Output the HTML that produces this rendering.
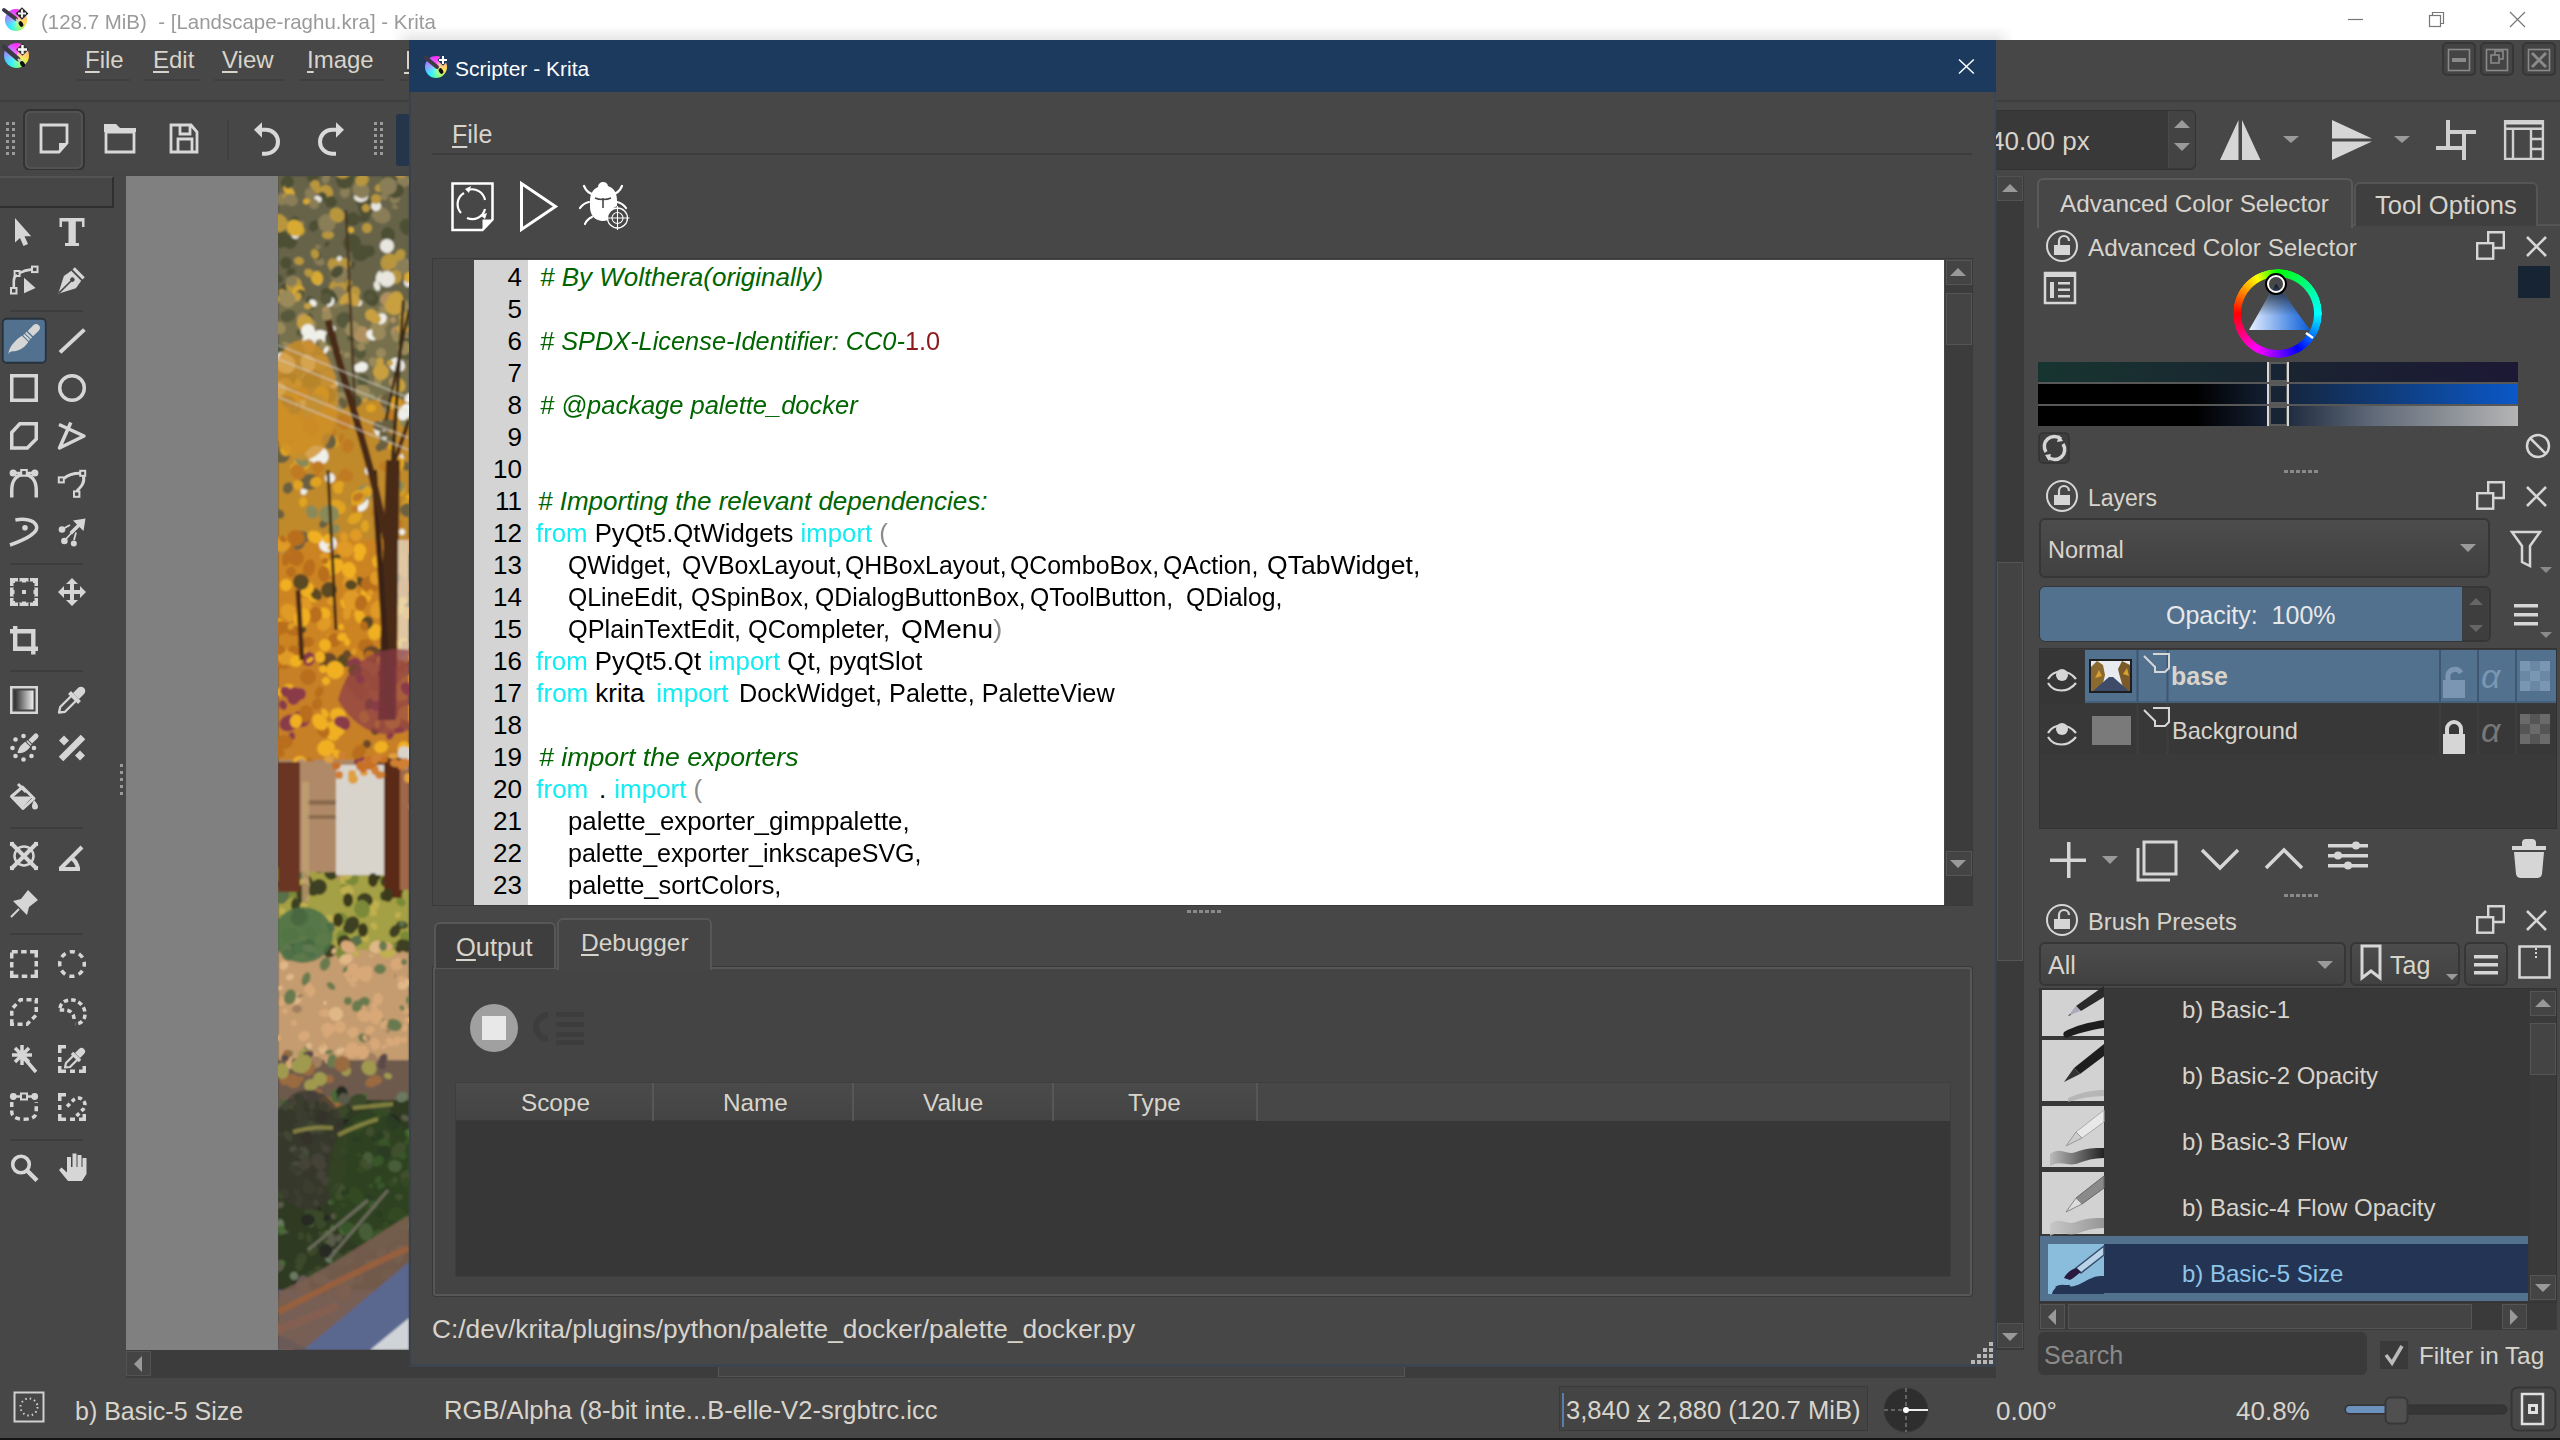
<!DOCTYPE html>
<html><head><meta charset="utf-8">
<style>
*{box-sizing:border-box;margin:0;padding:0}
html,body{width:2560px;height:1440px;overflow:hidden}
body{background:#474747;font-family:"Liberation Sans",sans-serif;color:#d8d4cc;position:relative}
.a{position:absolute}
.t{position:absolute;white-space:pre;line-height:1}
svg{position:absolute;overflow:visible}
.u{text-decoration:underline;text-underline-offset:3px;text-decoration-thickness:2px}
.ic{fill:none;stroke:#d6d6d6;stroke-width:3}
.if{fill:#d6d6d6}
</style></head><body>

<!-- ============ TITLE BAR ============ -->
<div class="a" style="left:0;top:0;width:2560px;height:40px;background:#fff"></div>
<svg style="left:0;top:0" width="40" height="40"><defs><linearGradient id="kg" x1="0" y1="0" x2="1" y2="1"><stop offset="0" stop-color="#ff3cf0"/><stop offset=".45" stop-color="#6a8cff"/><stop offset=".7" stop-color="#30e0ff"/><stop offset="1" stop-color="#ffe040"/></linearGradient></defs></svg>
<div class="a" style="left:5px;top:9px;width:22px;height:22px;border-radius:50%;background:radial-gradient(circle,rgba(255,255,255,.35),rgba(255,255,255,0) 70%),conic-gradient(from 0deg,#ff20ff,#ffa0a0 50deg,#ffe040 110deg,#80ff80 165deg,#20f0ff 215deg,#8a90ff 280deg,#ff20ff 360deg)"></div>
<svg style="left:0;top:0" width="40" height="40"><path d="M4 10L16 19" stroke="#3a3a44" stroke-width="4" stroke-linecap="round"/><path d="M16 19L19 22" stroke="#ccc" stroke-width="2"/><ellipse cx="21" cy="24" rx="2" ry="3" fill="#111" transform="rotate(-30 21 24)"/><rect x="17.5" y="9" width="9" height="9" fill="#2a2a2a" transform="rotate(45 22 13.5)"/><path d="M22 9.5v8M18 13.5h8" stroke="#eee" stroke-width="2"/></svg>
<div class="t" style="left:41px;top:11px;font-size:21px;color:#9a9a9a;transform:scaleX(.975);transform-origin:0 0">(128.7 MiB)  - [Landscape-raghu.kra] - Krita</div>
<svg style="left:2340px;top:8px" width="200" height="26">
 <path d="M8 11.5h15" stroke="#777" stroke-width="1.2"/>
 <rect x="89.5" y="7.5" width="11" height="11" fill="none" stroke="#777" stroke-width="1.2"/>
 <path d="M92.5 7.5v-3h11v11h-3" fill="none" stroke="#777" stroke-width="1.2"/>
 <path d="M170 4l15 15M185 4l-15 15" stroke="#777" stroke-width="1.2"/>
</svg>

<div class="a" style="left:392px;top:26px;width:1622px;height:14px;background:linear-gradient(rgba(0,0,0,0),rgba(0,0,0,.09));-webkit-mask:linear-gradient(90deg,transparent,#000 18px,#000 calc(100% - 18px),transparent);mask:linear-gradient(90deg,transparent,#000 18px,#000 calc(100% - 18px),transparent)"></div>
<!-- ============ MENU BAR ============ -->
<div class="a" style="left:0;top:40px;width:2560px;height:62px;background:#474747;border-bottom:2px solid #3e3e3e"></div>
<div class="a" style="left:4px;top:43px;width:25px;height:25px;border-radius:50%;background:radial-gradient(circle,rgba(255,255,255,.35),rgba(255,255,255,0) 70%),conic-gradient(from 0deg,#ff20ff,#ffa0a0 50deg,#ffe040 110deg,#80ff80 165deg,#20f0ff 215deg,#8a90ff 280deg,#ff20ff 360deg)"></div>
<svg style="left:0;top:40px" width="40" height="40"><path d="M4 7L18 19" stroke="#3a3a44" stroke-width="4.5" stroke-linecap="round"/><path d="M18 19L21 22" stroke="#ccc" stroke-width="2"/><ellipse cx="22.5" cy="24" rx="2.2" ry="3.2" fill="#111" transform="rotate(-30 22.5 24)"/><rect x="18" y="5" width="9" height="9" fill="#333" transform="rotate(45 22.5 9.5)"/><path d="M22.5 5v9M18 9.5h9" stroke="#fff" stroke-width="2.4"/></svg>
<div class="t" style="left:85px;top:48px;font-size:24px"><span class="u">F</span>ile</div>
<div class="t" style="left:153px;top:48px;font-size:24px"><span class="u">E</span>dit</div>
<div class="t" style="left:222px;top:48px;font-size:24px"><span class="u">V</span>iew</div>
<div class="t" style="left:307px;top:48px;font-size:24px"><span class="u">I</span>mage</div>
<div class="a" style="left:77px;top:79px;width:53px;height:2px;background:#3f3f3f"></div>
<div class="a" style="left:145px;top:79px;width:56px;height:2px;background:#3f3f3f"></div>
<div class="a" style="left:214px;top:79px;width:70px;height:2px;background:#3f3f3f"></div>
<div class="a" style="left:299px;top:79px;width:86px;height:2px;background:#3f3f3f"></div>
<div class="a" style="left:407px;top:51px;width:2px;height:18px;background:#d8d4cc"></div><div class="a" style="left:404px;top:72px;width:5px;height:2px;background:#d8d4cc"></div><div class="a" style="left:399px;top:79px;width:10px;height:2px;background:#3f3f3f"></div>
<!-- MDI buttons -->
<div class="a" style="left:2442px;top:42px;width:34px;height:34px;border:2px solid #363636;border-radius:5px;background:#444"></div>
<div class="a" style="left:2480px;top:42px;width:34px;height:34px;border:2px solid #363636;border-radius:5px;background:#444"></div>
<div class="a" style="left:2522px;top:42px;width:34px;height:34px;border:2px solid #363636;border-radius:5px;background:#444"></div>
<svg style="left:2440px;top:40px" width="120" height="40">
 <g fill="none" stroke="#8a8a8a" stroke-width="1.6">
  <rect x="8.5" y="9.5" width="21" height="21"/><rect x="46.5" y="9.5" width="21" height="21"/><rect x="88.5" y="9.5" width="21" height="21"/>
  <path d="M51 15h8v8h-8z M55 15v-4h8v8h-4"/>
  <path d="M92 13l14 14M106 13l-14 14" stroke-width="3"/>
 </g>
 <rect x="12" y="18" width="14" height="4" fill="#8a8a8a"/>
</svg>

<!-- ============ TOOLBAR ============ -->
<svg style="left:0;top:100px" width="420" height="76">
 <g fill="#9a9a9a">
  <rect x="6" y="22" width="3" height="3"/><rect x="12" y="22" width="3" height="3"/>
  <rect x="6" y="28" width="3" height="3"/><rect x="12" y="28" width="3" height="3"/>
  <rect x="6" y="34" width="3" height="3"/><rect x="12" y="34" width="3" height="3"/>
  <rect x="6" y="40" width="3" height="3"/><rect x="12" y="40" width="3" height="3"/>
  <rect x="6" y="46" width="3" height="3"/><rect x="12" y="46" width="3" height="3"/>
  <rect x="6" y="52" width="3" height="3"/><rect x="12" y="52" width="3" height="3"/>
  <rect x="374" y="22" width="3" height="3"/><rect x="380" y="22" width="3" height="3"/>
  <rect x="374" y="28" width="3" height="3"/><rect x="380" y="28" width="3" height="3"/>
  <rect x="374" y="34" width="3" height="3"/><rect x="380" y="34" width="3" height="3"/>
  <rect x="374" y="40" width="3" height="3"/><rect x="380" y="40" width="3" height="3"/>
  <rect x="374" y="46" width="3" height="3"/><rect x="380" y="46" width="3" height="3"/>
  <rect x="374" y="52" width="3" height="3"/><rect x="380" y="52" width="3" height="3"/>
 </g>
 <rect x="24" y="10" width="60" height="60" rx="6" fill="#484848" stroke="#333" stroke-width="2"/><rect x="26" y="12" width="56" height="56" rx="5" fill="none" stroke="#565656" stroke-width="1.5"/>
 <g fill="none" stroke="#d8d8d8" stroke-width="2.8">
  <path d="M41 25h26v18l-8 9h-18z"/>
  <path d="M106 32h28v20h-28z"/>
  <path d="M171 25h20l6 7v20h-26z M178 52v-13h14v13 M180 25v9h10v-9"/>
  <path d="M262 143"/>
 </g>
 <path d="M59 52l8-9h-8z" fill="#d8d8d8"/>
 <path d="M104 24h12l4 4h16v4h-32z" fill="#d8d8d8"/>
 <rect x="227" y="20" width="2" height="40" fill="#3f3f3f"/>
 <g fill="none" stroke="#d8d8d8" stroke-width="4">
  <path d="M261 29.7h5a12 12 0 0 1 0 24h-4"/>
  <path d="M337 29.7h-5a12 12 0 0 0 0 24h4"/>
 </g>
 <path d="M254 29.7l8-7.5v15.5z" fill="#d8d8d8"/>
 <path d="M344 29.7l-8-7.5v15.5z" fill="#d8d8d8"/>
 <rect x="396" y="14" width="14" height="52" rx="3" fill="#25354a"/>
</svg>
<!-- right toolbar -->
<div class="a" style="left:1960px;top:110px;width:236px;height:60px;background:#393939;border-radius:5px;border:1px solid #333"></div>
<div class="a" style="left:2168px;top:111px;width:27px;height:57px;background:#434343;border-left:1px solid #4a4a4a;border-radius:0 5px 5px 0"></div>
<svg style="left:2160px;top:100px" width="400" height="76">
 <path d="M14 28l8-8 8 8z M14 43l8 8 8-8z" fill="#9a9a9a"/>
 <rect x="344" y="20" width="40" height="4.5" fill="#d6d6d6"/>
 <path d="M60 60L78.5 20V60z M82 20L100.5 60H82z" fill="#d6d6d6"/>
 <path d="M123 36l8 7 8-7z" fill="#9a9a9a"/>
 <path d="M172 20L212 38.5H172z M172 41.5H212L172 60z" fill="#d6d6d6"/>
 <path d="M234 36l8 7 8-7z" fill="#9a9a9a"/>
 <g fill="none" stroke="#d0d0d0" stroke-width="3.5">
  <path d="M288 20V48 M286 32H316 M304 32V60 M276 48H306" stroke-width="4"/>
  <path d="M345.1 21.1h37.8v37.8h-37.8z M345 28.8h38 M353 29v30 M371 29v30 M371 39h12 M371 49h12" stroke-width="2.4"/>
 </g>
</svg>
<div class="t" style="left:1990px;top:128px;font-size:26px">40.00 px</div>

<!-- ============ TOOLBOX ============ -->
<div class="a" style="left:0;top:176px;width:114px;height:32px;background:#464646;border-top:2px solid #535353;border-right:2px solid #2f2f2f;border-bottom:2px solid #2f2f2f"></div>
<svg style="left:0;top:0" width="126" height="1200">
 <rect x="10" y="310" width="73" height="2" fill="#3d3d3d"/><rect x="10" y="563" width="73" height="2" fill="#3d3d3d"/><rect x="10" y="670" width="73" height="2" fill="#3d3d3d"/><rect x="10" y="827" width="73" height="2" fill="#3d3d3d"/><rect x="10" y="933" width="73" height="2" fill="#3d3d3d"/><rect x="10" y="1139" width="73" height="2" fill="#3d3d3d"/>
 <rect x="2.75" y="318.75" width="43" height="44" rx="4" fill="#52718f" stroke="#27323d" stroke-width="1.8"/>
 <g transform="translate(10,218)"><path fill="#d6d6d6" d="M5 0V24.5L10 20L13.5 28L18 26L14.5 18.2H21.2Z"/></g><g transform="translate(58,218)"><path fill="#d6d6d6" d="M1.5 0H26.5V9H24V3.5H17.8V25H21V28H7V25H10.5V3.5H4V9H1.5Z"/></g><g transform="translate(10,266)"><rect x="1" y="22" width="5.5" height="5.5" fill="none" stroke="#d6d6d6" stroke-width="2"/><rect x="4.6" y="5" width="5" height="5" fill="none" stroke="#d6d6d6" stroke-width="2"/><rect x="22" y="0.6" width="5.5" height="5.5" fill="none" stroke="#d6d6d6" stroke-width="2"/><path fill="none" stroke="#d6d6d6" stroke-width="2.6" d="M3.8 22V15C3.8 12 5 10 7 9 M9.6 7C13 5 17 3.8 22 3.4"/><path fill="#d6d6d6" d="M14 11.7V27.3L25.6 22.1Z"/></g><g transform="translate(58,266)"><g transform="translate(14,14) rotate(45)"><path fill="#d6d6d6" d="M0 19.5L-8.5 3L-7 -6H7L8.5 3Z"/><rect x="-7" y="-11" width="14" height="3.2" fill="#d6d6d6"/><circle cx="0" cy="-0.5" r="2.3" fill="#474747"/><path d="M0 1V19" stroke="#474747" stroke-width="1.6"/></g></g><g transform="translate(10,326)"><g transform="translate(14,14) rotate(45)"><path fill="#d6d6d6" d="M-3.8 -9V-17A3.8 3.8 0 0 1 3.8 -17V-9Z"/><rect x="-4" y="-7.6" width="8" height="2" fill="#d6d6d6"/><rect x="-4" y="-4.6" width="8" height="2" fill="#d6d6d6"/><path fill="#d6d6d6" d="M-4.5 -1.6H4.5C6 6 4 12 0 16C-1 17.5 -2 19 -1 21C-5 17 -6.5 8 -4.5 -1.6Z"/></g></g><g transform="translate(58,326)"><path fill="none" stroke="#d6d6d6" stroke-width="4" d="M2 26.4L26.4 3.6"/></g><g transform="translate(10,374)"><rect x="1.75" y="1.75" width="24.5" height="24.5" fill="none" stroke="#d6d6d6" stroke-width="3.5"/></g><g transform="translate(58,374)"><circle cx="14" cy="14" r="12.3" fill="none" stroke="#d6d6d6" stroke-width="3.5"/></g><g transform="translate(10,422)"><path fill="none" stroke="#d6d6d6" stroke-width="3.5" d="M1.75 26V10.5L9.8 1.75H26.25V17L17.3 26Z"/></g><g transform="translate(58,422)"><path fill="none" stroke="#d6d6d6" stroke-width="3.5" stroke-linejoin="round" d="M1 2.5L26 14L1.5 26L12.8 0.5"/></g><g transform="translate(10,470)"><path fill="none" stroke="#d6d6d6" stroke-width="3.5" d="M1.75 27.5V20C1.75 10 7 4.5 14 4.5S26.25 10 26.25 20V27.5"/><path fill="none" stroke="#d6d6d6" stroke-width="2.5" d="M3 3H25"/><circle cx="3.2" cy="3" r="3.6" fill="#d6d6d6"/><circle cx="24.8" cy="3" r="3.6" fill="#d6d6d6"/><rect x="11.2" y="0" width="5.6" height="5.6" fill="#474747" stroke="#d6d6d6" stroke-width="2"/></g><g transform="translate(58,470)"><rect x="22.2" y="0.8" width="5" height="5" fill="none" stroke="#d6d6d6" stroke-width="2"/><rect x="0.8" y="7.4" width="5" height="5" fill="none" stroke="#d6d6d6" stroke-width="2"/><rect x="16" y="21.4" width="5.4" height="5.4" fill="none" stroke="#d6d6d6" stroke-width="2"/><path fill="none" stroke="#d6d6d6" stroke-width="3" d="M6 8.5C10 4.5 15 3.2 22 3.2 M25.5 6C27 13 23 17 18.8 21"/></g><g transform="translate(10,518)"><path fill="none" stroke="#d6d6d6" stroke-width="3.5" d="M5.4 2C14 0.5 24 1.5 26.5 8C29 15 14 22 0 27"/><circle cx="15" cy="9.8" r="2.8" fill="#d6d6d6"/></g><g transform="translate(58,518)"><path fill="#d6d6d6" d="M27.5 0.5L15 2.5L19 6.5L11.5 14L14 16.5L21.5 9L25.5 13Z"/><path fill="none" stroke="#d6d6d6" stroke-width="1.8" d="M12 7L6.5 10 M13.5 15L8 21 M18 14.5L16 22"/><circle cx="4" cy="11.5" r="3.3" fill="#d6d6d6"/><circle cx="6.4" cy="23" r="3.3" fill="#d6d6d6"/><circle cx="15.8" cy="25.5" r="3" fill="#d6d6d6"/></g><g transform="translate(10,578)"><rect x="1.75" y="1.75" width="24.5" height="24.5" fill="none" stroke="#d6d6d6" stroke-width="3.5"/><g fill="#d6d6d6"><rect x="0" y="0" width="5" height="5"/><rect x="23" y="0" width="5" height="5"/><rect x="0" y="23" width="5" height="5"/><rect x="23" y="23" width="5" height="5"/><rect x="12" y="0" width="4" height="4.5"/><rect x="12" y="23.5" width="4" height="4.5"/><rect x="0" y="12" width="4.5" height="4"/><rect x="23.5" y="12" width="4.5" height="4"/><rect x="12" y="12" width="4" height="4"/></g><g fill="#474747"><rect x="8" y="0" width="1.5" height="3.5"/><rect x="18.5" y="0" width="1.5" height="3.5"/><rect x="8" y="24.5" width="1.5" height="3.5"/><rect x="18.5" y="24.5" width="1.5" height="3.5"/><rect x="0" y="8" width="3.5" height="1.5"/><rect x="0" y="18.5" width="3.5" height="1.5"/><rect x="24.5" y="8" width="3.5" height="1.5"/><rect x="24.5" y="18.5" width="3.5" height="1.5"/></g></g><g transform="translate(58,578)"><path fill="#d6d6d6" d="M14 0L20 6H16V12H22V8L28 14L22 20V16H16V22H20L14 28L8 22H12V16H6V20L0 14L6 8V12H12V6H8Z"/></g><g transform="translate(10,626)"><path fill="none" stroke="#d6d6d6" stroke-width="4.4" d="M5.2 0V22.8H28 M0 5.3H23.3V28.5"/></g><g transform="translate(10,686)"><defs><linearGradient id="gtb" x1="0" x2="1"><stop offset="0" stop-color="#2e2e2e"/><stop offset="1" stop-color="#f0f0f0"/></linearGradient></defs><rect x="1.25" y="1.25" width="25.5" height="25.5" fill="none" stroke="#d6d6d6" stroke-width="2.5"/><rect x="4.5" y="4.5" width="19" height="19" fill="url(#gtb)"/></g><g transform="translate(58,686)"><path fill="none" stroke="#d6d6d6" stroke-width="2.3" stroke-linejoin="round" d="M1 26.5L2.2 21L13.5 9.7L18.3 14.5L7 25.8Z"/><path fill="none" stroke="#d6d6d6" stroke-width="4" d="M11.5 6.5L21.5 16.5"/><path fill="#d6d6d6" d="M15 7L20 2A4 4 0 0 1 26 8L21 13Z"/></g><g transform="translate(10,734)"><g fill="#d6d6d6"><circle cx="2.5" cy="14" r="2.3"/><circle cx="5.5" cy="5.5" r="2.3"/><circle cx="13.5" cy="2" r="2.3"/><circle cx="24" cy="14" r="2.3"/><circle cx="21.5" cy="22" r="2.3"/><circle cx="13.5" cy="25.5" r="2.3"/><circle cx="5.5" cy="22" r="2.3"/></g><g transform="translate(16,12) rotate(45)"><path fill="#d6d6d6" d="M-2.6 -6V-14A2.6 2.6 0 0 1 2.6 -14V-6Z"/><rect x="-3" y="-5" width="6" height="1.5" fill="#d6d6d6"/><path fill="#d6d6d6" d="M-3.5 -2.5H3.5C4.5 3 3 8 -1 11C-4 7 -4.5 3 -3.5 -2.5Z"/></g></g><g transform="translate(58,734)"><path fill="#d6d6d6" d="M1 6.5L6 1.5L11 6.5L6 11.5Z M17 21.5L22 16.5L27 21.5L22 26.5Z"/><path fill="none" stroke="#d6d6d6" stroke-width="6.5" d="M3 25L25 3"/></g><g transform="translate(10,783)"><path fill="none" stroke="#d6d6d6" stroke-width="3" d="M8 1L16 9"/><path fill="none" stroke="#d6d6d6" stroke-width="3" stroke-linejoin="round" d="M1.5 13.5L12.5 4L24 15.5L13 25.5Z"/><path fill="#d6d6d6" d="M3 13.5H23L13 24Z"/><path fill="#d6d6d6" d="M24 17C24 17 28 21 28 23.5A3 3 0 0 1 22 23.5C22 21 24 17 24 17Z"/></g><g transform="translate(10,842)"><path fill="none" stroke="#d6d6d6" stroke-width="4" d="M1 1L27 27M27 1L1 27"/><circle cx="14" cy="14" r="9.5" fill="none" stroke="#d6d6d6" stroke-width="2.5"/><g fill="#d6d6d6"><rect x="0" y="0" width="4" height="4"/><rect x="24" y="0" width="4" height="4"/><rect x="0" y="24" width="4" height="4"/><rect x="24" y="24" width="4" height="4"/></g></g><g transform="translate(58,845)"><path fill="none" stroke="#d6d6d6" stroke-width="4" d="M2 24L24 2 M1 24H22 M12 12A16 16 0 0 1 20 24"/></g><g transform="translate(10,890)"><path fill="#d6d6d6" d="M11 9L18 0L28 10L19 17L17 25L3 11Z"/><path fill="none" stroke="#d6d6d6" stroke-width="2" d="M9 19L1 27"/></g><g transform="translate(10,950)"><rect x="1.75" y="1.75" width="24.5" height="24.5" fill="none" stroke="#d6d6d6" stroke-width="3.5" stroke-dasharray="6 3.4 5.5 3.4 12 3.4 5.5 3.4 12 3.4 5.5 3.4 12 3.4 5.5 3.4 6"/></g><g transform="translate(58,950)"><circle cx="14" cy="14" r="12.3" fill="none" stroke="#d6d6d6" stroke-width="3.5" stroke-dasharray="5.2 4.45" stroke-dashoffset="2.6"/></g><g transform="translate(10,998)"><path fill="none" stroke="#d6d6d6" stroke-width="3.5" stroke-dasharray="5 3.5" d="M1.75 26.25V11L10.5 1.75H26.25V17L17 26.25Z"/></g><g transform="translate(58,998)"><path fill="none" stroke="#d6d6d6" stroke-width="3.5" stroke-dasharray="4.5 3" d="M2 10C3 3 10 1.5 15 2C22 3 27 9 27 16C27 22 23 26 17 26 M16 21C16 17 14 13 8 12L1 12"/></g><g transform="translate(10,1045)"><path fill="none" stroke="#d6d6d6" stroke-width="3.5" d="M12 0V20 M2 10H22 M5 3L19 17 M19 3L5 17 M14 13L26 27"/></g><g transform="translate(58,1045)"><path fill="none" stroke="#d6d6d6" stroke-width="3.5" d="M8 1.75H1.75V8 M1.75 12V17 M1.75 21V26.25H8 M12 26.25H17 M21 26.25H26.25V21"/><path fill="none" stroke="#d6d6d6" stroke-width="2.2" stroke-linejoin="round" d="M7 22.5L8 18L16 10L20 14L12 22Z"/><path fill="none" stroke="#d6d6d6" stroke-width="3.5" d="M14 8L22 16"/><path fill="#d6d6d6" d="M17 8L21 4A3.5 3.5 0 0 1 26 9L22 13Z"/></g><g transform="translate(10,1093)"><path fill="none" stroke="#d6d6d6" stroke-width="3.5" stroke-dasharray="5 3.5" d="M1.75 9V19C1.75 23 5 26.25 14 26.25S26.25 23 26.25 19V9"/><path fill="none" stroke="#d6d6d6" stroke-width="2.5" d="M3 3.5H25"/><circle cx="3.3" cy="3.5" r="3.4" fill="#d6d6d6"/><circle cx="24.7" cy="3.5" r="3.4" fill="#d6d6d6"/><rect x="11" y="0.5" width="6" height="6" fill="#474747" stroke="#d6d6d6" stroke-width="2"/></g><g transform="translate(58,1093)"><path fill="none" stroke="#d6d6d6" stroke-width="3.5" d="M8 1.75H1.75V8 M1.75 12V17 M1.75 21V26.25H8 M12 26.25H17 M21 26.25H26.25V21"/><path fill="none" stroke="#d6d6d6" stroke-width="3.5" stroke-dasharray="4 3" d="M9 13.5L15.5 7A6.5 6.5 0 0 1 25 16.5L18.5 23"/></g><g transform="translate(10,1154)"><circle cx="11" cy="10.5" r="8.3" fill="none" stroke="#d6d6d6" stroke-width="3.6"/><path fill="none" stroke="#d6d6d6" stroke-width="4.5" d="M17 16.5L27 26.5"/></g><g transform="translate(58,1152)"><path fill="#d6d6d6" d="M10 29L1 18L3.5 15.5L9 20.5V5H13V15H14.5V1.5H18.5V15H19.5V3H23.5V15H24.5V6H28.5V22L24 29Z"/></g>
 <g fill="#9a9a9a"><rect x="120" y="764" width="3" height="3"/><rect x="120" y="771" width="3" height="3"/><rect x="120" y="778" width="3" height="3"/><rect x="120" y="785" width="3" height="3"/><rect x="120" y="792" width="3" height="3"/></g>
</svg>

<!-- ============ CANVAS ============ -->
<div class="a" style="left:0;top:170px;width:2024px;height:6px;background:#464646"></div>
<div class="a" style="left:126px;top:176px;width:152px;height:1174px;background:#808080"></div>
<svg style="left:278px;top:176px" width="131" height="1174" viewBox="0 0 131 1174"><defs><filter id="pbl"><feGaussianBlur stdDeviation="1.2"/></filter><clipPath id="pcl"><rect width="131" height="1174"/></clipPath></defs><g filter="url(#pbl)" clip-path="url(#pcl)"><rect x="0" y="0" width="131" height="124" fill="#66644a"/><rect x="0" y="124" width="131" height="100" fill="#76704e"/><rect x="0" y="224" width="131" height="140" fill="#c08a2c"/><rect x="0" y="364" width="131" height="120" fill="#cc8420"/><rect x="0" y="484" width="131" height="100" fill="#c88028"/><rect x="0" y="584" width="131" height="110" fill="#a88868"/><rect x="0" y="694" width="131" height="80" fill="#a4a044"/><rect x="0" y="774" width="131" height="110" fill="#c49c70"/><rect x="0" y="884" width="131" height="40" fill="#6e5a4e"/><rect x="0" y="924" width="131" height="190" fill="#2e3a24"/><rect x="0" y="1114" width="131" height="60" fill="#5a6088"/><ellipse cx="42" cy="15" rx="7" ry="4" fill="#b8963e" transform="rotate(24 42 15)"/><ellipse cx="48" cy="2" rx="6" ry="4" fill="#8a7e58" transform="rotate(107 48 2)"/><ellipse cx="9" cy="6" rx="6" ry="7" fill="#4e5034" transform="rotate(57 9 6)"/><ellipse cx="83" cy="73" rx="3" ry="3" fill="#4e5034" transform="rotate(56 83 73)"/><ellipse cx="6" cy="111" rx="5" ry="3" fill="#4e5034" transform="rotate(146 6 111)"/><ellipse cx="40" cy="105" rx="4" ry="4" fill="#e8e6de" transform="rotate(48 40 105)"/><ellipse cx="49" cy="68" rx="3" ry="2" fill="#4e5034" transform="rotate(127 49 68)"/><ellipse cx="89" cy="52" rx="5" ry="5" fill="#b8963e" transform="rotate(92 89 52)"/><ellipse cx="39" cy="102" rx="7" ry="6" fill="#d8aa30" transform="rotate(76 39 102)"/><ellipse cx="69" cy="113" rx="7" ry="6" fill="#4e5034" transform="rotate(30 69 113)"/><ellipse cx="67" cy="16" rx="5" ry="6" fill="#8a7e58" transform="rotate(10 67 16)"/><ellipse cx="126" cy="5" rx="6" ry="7" fill="#8a7e58" transform="rotate(87 126 5)"/><ellipse cx="91" cy="75" rx="6" ry="6" fill="#4e5034" transform="rotate(69 91 75)"/><ellipse cx="62" cy="84" rx="3" ry="4" fill="#e8e6de" transform="rotate(147 62 84)"/><ellipse cx="130" cy="106" rx="5" ry="4" fill="#e8e6de" transform="rotate(88 130 106)"/><ellipse cx="3" cy="57" rx="4" ry="3" fill="#4e5034" transform="rotate(55 3 57)"/><ellipse cx="101" cy="12" rx="4" ry="4" fill="#b8963e" transform="rotate(20 101 12)"/><ellipse cx="22" cy="49" rx="5" ry="3" fill="#8a7e58" transform="rotate(140 22 49)"/><ellipse cx="36" cy="50" rx="5" ry="6" fill="#4e5034" transform="rotate(38 36 50)"/><ellipse cx="11" cy="15" rx="7" ry="4" fill="#d8aa30" transform="rotate(46 11 15)"/><ellipse cx="34" cy="-5" rx="6" ry="5" fill="#d8aa30" transform="rotate(81 34 -5)"/><ellipse cx="125" cy="88" rx="6" ry="6" fill="#e8e6de" transform="rotate(13 125 88)"/><ellipse cx="60" cy="112" rx="9" ry="9" fill="#b8963e" transform="rotate(100 60 112)"/><ellipse cx="52" cy="48" rx="6" ry="5" fill="#4e5034" transform="rotate(17 52 48)"/><ellipse cx="129" cy="54" rx="4" ry="4" fill="#4e5034"/><ellipse cx="74" cy="67" rx="9" ry="9" fill="#4e5034" transform="rotate(53 74 67)"/><ellipse cx="80" cy="14" rx="5" ry="4" fill="#8a7e58" transform="rotate(121 80 14)"/><ellipse cx="16" cy="109" rx="9" ry="8" fill="#b8963e" transform="rotate(79 16 109)"/><ellipse cx="11" cy="8" rx="5" ry="4" fill="#4e5034" transform="rotate(132 11 8)"/><ellipse cx="3" cy="123" rx="6" ry="4" fill="#b8963e" transform="rotate(6 3 123)"/><ellipse cx="99" cy="35" rx="7" ry="5" fill="#8a7e58" transform="rotate(132 99 35)"/><ellipse cx="48" cy="17" rx="8" ry="7" fill="#b8963e" transform="rotate(84 48 17)"/><ellipse cx="83" cy="77" rx="8" ry="9" fill="#4e5034" transform="rotate(61 83 77)"/><ellipse cx="107" cy="95" rx="4" ry="4" fill="#8a7e58" transform="rotate(7 107 95)"/><ellipse cx="130" cy="101" rx="6" ry="4" fill="#d8aa30" transform="rotate(88 130 101)"/><ellipse cx="59" cy="121" rx="9" ry="11" fill="#8a7e58" transform="rotate(20 59 121)"/><ellipse cx="29" cy="25" rx="4" ry="3" fill="#d8aa30" transform="rotate(156 29 25)"/><ellipse cx="110" cy="59" rx="7" ry="8" fill="#4e5034" transform="rotate(169 110 59)"/><ellipse cx="16" cy="47" rx="7" ry="5" fill="#4e5034" transform="rotate(111 16 47)"/><ellipse cx="103" cy="39" rx="8" ry="10" fill="#8a7e58" transform="rotate(118 103 39)"/><ellipse cx="53" cy="123" rx="7" ry="5" fill="#4e5034" transform="rotate(7 53 123)"/><ellipse cx="20" cy="117" rx="8" ry="6" fill="#d8aa30" transform="rotate(121 20 117)"/><ellipse cx="86" cy="42" rx="6" ry="4" fill="#4e5034" transform="rotate(166 86 42)"/><ellipse cx="13" cy="96" rx="4" ry="5" fill="#4e5034" transform="rotate(54 13 96)"/><ellipse cx="4" cy="23" rx="6" ry="7" fill="#8a7e58" transform="rotate(66 4 23)"/><ellipse cx="71" cy="107" rx="3" ry="4" fill="#b8963e" transform="rotate(169 71 107)"/><ellipse cx="76" cy="117" rx="6" ry="7" fill="#b8963e" transform="rotate(33 76 117)"/><ellipse cx="70" cy="65" rx="3" ry="3" fill="#4e5034" transform="rotate(155 70 65)"/><ellipse cx="1" cy="103" rx="4" ry="4" fill="#4e5034" transform="rotate(142 1 103)"/><ellipse cx="8" cy="87" rx="6" ry="6" fill="#4e5034" transform="rotate(143 8 87)"/><ellipse cx="7" cy="20" rx="3" ry="2" fill="#b8963e" transform="rotate(143 7 20)"/><ellipse cx="4" cy="116" rx="3" ry="3" fill="#b8963e" transform="rotate(155 4 116)"/><ellipse cx="67" cy="88" rx="6" ry="6" fill="#b8963e" transform="rotate(129 67 88)"/><ellipse cx="123" cy="89" rx="8" ry="10" fill="#8a7e58" transform="rotate(143 123 89)"/><ellipse cx="117" cy="22" rx="6" ry="5" fill="#8a7e58" transform="rotate(113 117 22)"/><ellipse cx="41" cy="85" rx="6" ry="4" fill="#8a7e58" transform="rotate(31 41 85)"/><ellipse cx="118" cy="15" rx="7" ry="8" fill="#4e5034" transform="rotate(64 118 15)"/><ellipse cx="116" cy="126" rx="4" ry="5" fill="#8a7e58" transform="rotate(124 116 126)"/><ellipse cx="21" cy="85" rx="4" ry="5" fill="#b8963e" transform="rotate(103 21 85)"/><ellipse cx="44" cy="21" rx="5" ry="5" fill="#4e5034" transform="rotate(86 44 21)"/><ellipse cx="73" cy="54" rx="3" ry="3" fill="#d8aa30" transform="rotate(75 73 54)"/><ellipse cx="67" cy="3" rx="9" ry="10" fill="#4e5034" transform="rotate(21 67 3)"/><ellipse cx="35" cy="-1" rx="8" ry="6" fill="#4e5034" transform="rotate(108 35 -1)"/><ellipse cx="111" cy="86" rx="9" ry="8" fill="#b8963e" transform="rotate(131 111 86)"/><ellipse cx="75" cy="89" rx="4" ry="2" fill="#4e5034" transform="rotate(108 75 89)"/><ellipse cx="117" cy="31" rx="3" ry="2" fill="#8a7e58" transform="rotate(21 117 31)"/><ellipse cx="80" cy="24" rx="5" ry="3" fill="#4e5034" transform="rotate(86 80 24)"/><ellipse cx="130" cy="51" rx="8" ry="9" fill="#4e5034" transform="rotate(134 130 51)"/><ellipse cx="93" cy="122" rx="9" ry="7" fill="#4e5034" transform="rotate(51 93 122)"/><ellipse cx="122" cy="79" rx="6" ry="5" fill="#b8963e" transform="rotate(128 122 79)"/><ellipse cx="88" cy="31" rx="8" ry="10" fill="#4e5034" transform="rotate(3 88 31)"/><ellipse cx="2" cy="63" rx="9" ry="9" fill="#4e5034" transform="rotate(114 2 63)"/><ellipse cx="14" cy="105" rx="6" ry="5" fill="#8a7e58" transform="rotate(129 14 105)"/><ellipse cx="40" cy="23" rx="4" ry="3" fill="#e8e6de" transform="rotate(35 40 23)"/><ellipse cx="53" cy="41" rx="3" ry="2" fill="#4e5034" transform="rotate(160 53 41)"/><ellipse cx="97" cy="29" rx="4" ry="3" fill="#8a7e58" transform="rotate(129 97 29)"/><ellipse cx="88" cy="32" rx="4" ry="4" fill="#b8963e" transform="rotate(47 88 32)"/><ellipse cx="21" cy="55" rx="5" ry="6" fill="#b8963e" transform="rotate(82 21 55)"/><ellipse cx="32" cy="125" rx="5" ry="4" fill="#4e5034" transform="rotate(85 32 125)"/><ellipse cx="50" cy="59" rx="6" ry="4" fill="#b8963e" transform="rotate(1 50 59)"/><ellipse cx="12" cy="105" rx="4" ry="4" fill="#8a7e58" transform="rotate(5 12 105)"/><ellipse cx="39" cy="80" rx="4" ry="4" fill="#4e5034" transform="rotate(168 39 80)"/><ellipse cx="117" cy="101" rx="7" ry="7" fill="#b8963e" transform="rotate(38 117 101)"/><ellipse cx="37" cy="78" rx="4" ry="5" fill="#b8963e" transform="rotate(160 37 78)"/><ellipse cx="56" cy="89" rx="6" ry="7" fill="#b8963e" transform="rotate(145 56 89)"/><ellipse cx="109" cy="103" rx="8" ry="8" fill="#e8e6de" transform="rotate(177 109 103)"/><ellipse cx="84" cy="6" rx="3" ry="3" fill="#4e5034" transform="rotate(96 84 6)"/><ellipse cx="109" cy="70" rx="7" ry="7" fill="#e8e6de" transform="rotate(62 109 70)"/><ellipse cx="64" cy="-6" rx="8" ry="9" fill="#b8963e" transform="rotate(137 64 -6)"/><ellipse cx="12" cy="66" rx="7" ry="7" fill="#4e5034" transform="rotate(67 12 66)"/><ellipse cx="31" cy="97" rx="4" ry="5" fill="#b8963e" transform="rotate(126 31 97)"/><ellipse cx="111" cy="4" rx="8" ry="7" fill="#4e5034" transform="rotate(157 111 4)"/><ellipse cx="83" cy="21" rx="7" ry="5" fill="#e8e6de" transform="rotate(177 83 21)"/><ellipse cx="40" cy="71" rx="3" ry="2" fill="#8a7e58" transform="rotate(172 40 71)"/><ellipse cx="13" cy="24" rx="6" ry="7" fill="#8a7e58" transform="rotate(118 13 24)"/><ellipse cx="61" cy="98" rx="9" ry="9" fill="#8a7e58" transform="rotate(21 61 98)"/><ellipse cx="123" cy="-4" rx="6" ry="7" fill="#b8963e" transform="rotate(68 123 -4)"/><ellipse cx="51" cy="119" rx="9" ry="6" fill="#4e5034" transform="rotate(36 51 119)"/><ellipse cx="98" cy="30" rx="5" ry="5" fill="#e8e6de" transform="rotate(130 98 30)"/><ellipse cx="37" cy="9" rx="5" ry="5" fill="#b8963e" transform="rotate(100 37 9)"/><ellipse cx="3" cy="-6" rx="6" ry="5" fill="#8a7e58" transform="rotate(36 3 -6)"/><ellipse cx="55" cy="45" rx="4" ry="3" fill="#8a7e58" transform="rotate(86 55 45)"/><ellipse cx="110" cy="10" rx="9" ry="9" fill="#8a7e58" transform="rotate(64 110 10)"/><ellipse cx="49" cy="47" rx="9" ry="9" fill="#8a7e58" transform="rotate(109 49 47)"/><ellipse cx="99" cy="110" rx="5" ry="3" fill="#e8e6de" transform="rotate(73 99 110)"/><ellipse cx="83" cy="14" rx="9" ry="8" fill="#8a7e58" transform="rotate(48 83 14)"/><ellipse cx="101" cy="101" rx="6" ry="3" fill="#e8e6de" transform="rotate(102 101 101)"/><ellipse cx="120" cy="122" rx="6" ry="7" fill="#4e5034" transform="rotate(105 120 122)"/><ellipse cx="59" cy="96" rx="7" ry="5" fill="#4e5034" transform="rotate(140 59 96)"/><ellipse cx="17" cy="58" rx="5" ry="4" fill="#e8e6de" transform="rotate(66 17 58)"/><ellipse cx="53" cy="26" rx="6" ry="6" fill="#4e5034" transform="rotate(42 53 26)"/><ellipse cx="84" cy="4" rx="6" ry="7" fill="#b8963e" transform="rotate(56 84 4)"/><ellipse cx="59" cy="39" rx="8" ry="7" fill="#b8963e" transform="rotate(49 59 39)"/><ellipse cx="32" cy="18" rx="6" ry="5" fill="#8a7e58" transform="rotate(66 32 18)"/><ellipse cx="106" cy="21" rx="3" ry="4" fill="#8a7e58" transform="rotate(105 106 21)"/><ellipse cx="98" cy="23" rx="5" ry="5" fill="#b8963e" transform="rotate(71 98 23)"/><ellipse cx="75" cy="43" rx="7" ry="7" fill="#4e5034" transform="rotate(23 75 43)"/><ellipse cx="36" cy="28" rx="5" ry="5" fill="#8a7e58" transform="rotate(5 36 28)"/><ellipse cx="17" cy="52" rx="8" ry="9" fill="#d8aa30" transform="rotate(125 17 52)"/><ellipse cx="0" cy="47" rx="9" ry="10" fill="#b8963e" transform="rotate(114 0 47)"/><ellipse cx="33" cy="130" rx="4" ry="4" fill="#56583a" transform="rotate(179 33 130)"/><ellipse cx="85" cy="204" rx="6" ry="6" fill="#56583a"/><ellipse cx="102" cy="144" rx="9" ry="9" fill="#9a8a5a" transform="rotate(32 102 144)"/><ellipse cx="82" cy="177" rx="6" ry="6" fill="#56583a" transform="rotate(18 82 177)"/><ellipse cx="39" cy="224" rx="4" ry="3" fill="#b09060"/><ellipse cx="1" cy="152" rx="6" ry="7" fill="#9a8a5a" transform="rotate(121 1 152)"/><ellipse cx="69" cy="179" rx="3" ry="3" fill="#9a8a5a" transform="rotate(14 69 179)"/><ellipse cx="3" cy="174" rx="7" ry="6" fill="#9a8a5a" transform="rotate(58 3 174)"/><ellipse cx="87" cy="222" rx="4" ry="3" fill="#c8a040" transform="rotate(107 87 222)"/><ellipse cx="47" cy="162" rx="3" ry="2" fill="#f0f0ea" transform="rotate(17 47 162)"/><ellipse cx="27" cy="227" rx="5" ry="6" fill="#9a8a5a" transform="rotate(119 27 227)"/><ellipse cx="29" cy="203" rx="5" ry="6" fill="#f0f0ea" transform="rotate(156 29 203)"/><ellipse cx="25" cy="143" rx="6" ry="6" fill="#b09060" transform="rotate(37 25 143)"/><ellipse cx="121" cy="124" rx="3" ry="3" fill="#c8a040" transform="rotate(13 121 124)"/><ellipse cx="93" cy="139" rx="6" ry="6" fill="#c8a040" transform="rotate(28 93 139)"/><ellipse cx="131" cy="222" rx="5" ry="4" fill="#f0f0ea" transform="rotate(119 131 222)"/><ellipse cx="4" cy="192" rx="5" ry="5" fill="#c8a040" transform="rotate(113 4 192)"/><ellipse cx="22" cy="118" rx="5" ry="4" fill="#56583a" transform="rotate(143 22 118)"/><ellipse cx="126" cy="141" rx="5" ry="6" fill="#c8a040" transform="rotate(22 126 141)"/><ellipse cx="6" cy="171" rx="5" ry="7" fill="#9a8a5a" transform="rotate(82 6 171)"/><ellipse cx="48" cy="218" rx="3" ry="3" fill="#c8a040" transform="rotate(10 48 218)"/><ellipse cx="49" cy="170" rx="8" ry="5" fill="#9a8a5a" transform="rotate(16 49 170)"/><ellipse cx="118" cy="156" rx="5" ry="6" fill="#b09060" transform="rotate(11 118 156)"/><ellipse cx="34" cy="198" rx="5" ry="4" fill="#56583a" transform="rotate(152 34 198)"/><ellipse cx="120" cy="189" rx="9" ry="5" fill="#9a8a5a" transform="rotate(27 120 189)"/><ellipse cx="62" cy="225" rx="9" ry="8" fill="#9a8a5a" transform="rotate(110 62 225)"/><ellipse cx="107" cy="133" rx="6" ry="4" fill="#9a8a5a" transform="rotate(177 107 133)"/><ellipse cx="101" cy="186" rx="5" ry="4" fill="#c8a040" transform="rotate(152 101 186)"/><ellipse cx="10" cy="140" rx="8" ry="6" fill="#56583a" transform="rotate(166 10 140)"/><ellipse cx="4" cy="180" rx="5" ry="6" fill="#56583a" transform="rotate(18 4 180)"/><ellipse cx="35" cy="127" rx="4" ry="3" fill="#f0f0ea" transform="rotate(44 35 127)"/><ellipse cx="31" cy="165" rx="7" ry="7" fill="#f0f0ea" transform="rotate(170 31 165)"/><ellipse cx="100" cy="205" rx="5" ry="4" fill="#9a8a5a" transform="rotate(95 100 205)"/><ellipse cx="33" cy="147" rx="6" ry="4" fill="#9a8a5a" transform="rotate(39 33 147)"/><ellipse cx="37" cy="220" rx="4" ry="3" fill="#9a8a5a" transform="rotate(62 37 220)"/><ellipse cx="66" cy="144" rx="8" ry="8" fill="#56583a" transform="rotate(26 66 144)"/><ellipse cx="1" cy="217" rx="4" ry="4" fill="#c8a040" transform="rotate(10 1 217)"/><ellipse cx="115" cy="144" rx="3" ry="3" fill="#b09060" transform="rotate(49 115 144)"/><ellipse cx="122" cy="160" rx="8" ry="7" fill="#9a8a5a" transform="rotate(170 122 160)"/><ellipse cx="124" cy="130" rx="7" ry="7" fill="#9a8a5a" transform="rotate(9 124 130)"/><ellipse cx="48" cy="134" rx="4" ry="3" fill="#b09060" transform="rotate(166 48 134)"/><ellipse cx="120" cy="209" rx="8" ry="7" fill="#c8a040" transform="rotate(47 120 209)"/><ellipse cx="81" cy="127" rx="3" ry="3" fill="#f0f0ea" transform="rotate(16 81 127)"/><ellipse cx="53" cy="207" rx="7" ry="5" fill="#f0f0ea" transform="rotate(23 53 207)"/><ellipse cx="86" cy="163" rx="5" ry="6" fill="#9a8a5a" transform="rotate(106 86 163)"/><ellipse cx="125" cy="153" rx="6" ry="5" fill="#c8a040" transform="rotate(4 125 153)"/><ellipse cx="113" cy="230" rx="5" ry="4" fill="#c8a040" transform="rotate(52 113 230)"/><ellipse cx="123" cy="167" rx="4" ry="3" fill="#56583a" transform="rotate(103 123 167)"/><ellipse cx="76" cy="159" rx="8" ry="5" fill="#56583a" transform="rotate(141 76 159)"/><ellipse cx="19" cy="208" rx="5" ry="5" fill="#c8a040" transform="rotate(129 19 208)"/><ellipse cx="22" cy="157" rx="4" ry="3" fill="#56583a" transform="rotate(27 22 157)"/><ellipse cx="50" cy="202" rx="8" ry="9" fill="#9a8a5a" transform="rotate(32 50 202)"/><ellipse cx="110" cy="123" rx="8" ry="7" fill="#b09060" transform="rotate(162 110 123)"/><ellipse cx="51" cy="219" rx="7" ry="8" fill="#56583a" transform="rotate(163 51 219)"/><ellipse cx="103" cy="143" rx="5" ry="6" fill="#f0f0ea" transform="rotate(46 103 143)"/><ellipse cx="74" cy="123" rx="9" ry="6" fill="#c8a040" transform="rotate(31 74 123)"/><ellipse cx="20" cy="227" rx="8" ry="6" fill="#f0f0ea" transform="rotate(172 20 227)"/><ellipse cx="5" cy="212" rx="4" ry="4" fill="#f0f0ea" transform="rotate(160 5 212)"/><ellipse cx="102" cy="191" rx="5" ry="4" fill="#c8a040" transform="rotate(168 102 191)"/><ellipse cx="48" cy="174" rx="4" ry="2" fill="#f0f0ea" transform="rotate(119 48 174)"/><ellipse cx="31" cy="204" rx="8" ry="7" fill="#56583a" transform="rotate(121 31 204)"/><ellipse cx="52" cy="126" rx="5" ry="4" fill="#f0f0ea" transform="rotate(129 52 126)"/><ellipse cx="67" cy="123" rx="7" ry="4" fill="#c8a040" transform="rotate(130 67 123)"/><ellipse cx="10" cy="202" rx="8" ry="9" fill="#56583a" transform="rotate(6 10 202)"/><ellipse cx="112" cy="230" rx="7" ry="9" fill="#9a8a5a" transform="rotate(33 112 230)"/><ellipse cx="129" cy="173" rx="9" ry="11" fill="#56583a" transform="rotate(175 129 173)"/><ellipse cx="103" cy="222" rx="3" ry="3" fill="#9a8a5a" transform="rotate(40 103 222)"/><ellipse cx="42" cy="187" rx="8" ry="8" fill="#9a8a5a" transform="rotate(128 42 187)"/><ellipse cx="126" cy="172" rx="7" ry="7" fill="#9a8a5a" transform="rotate(81 126 172)"/><ellipse cx="49" cy="140" rx="5" ry="6" fill="#9a8a5a" transform="rotate(173 49 140)"/><ellipse cx="43" cy="160" rx="8" ry="6" fill="#f0f0ea" transform="rotate(12 43 160)"/><ellipse cx="83" cy="158" rx="8" ry="8" fill="#b09060" transform="rotate(176 83 158)"/><ellipse cx="116" cy="130" rx="9" ry="9" fill="#c8a040" transform="rotate(95 116 130)"/><ellipse cx="35" cy="229" rx="6" ry="6" fill="#56583a" transform="rotate(113 35 229)"/><ellipse cx="30" cy="187" rx="9" ry="7" fill="#f0f0ea" transform="rotate(64 30 187)"/><ellipse cx="41" cy="226" rx="8" ry="10" fill="#c8a040"/><ellipse cx="98" cy="143" rx="5" ry="5" fill="#c8a040" transform="rotate(131 98 143)"/><ellipse cx="48" cy="123" rx="6" ry="6" fill="#56583a" transform="rotate(5 48 123)"/><ellipse cx="7" cy="182" rx="5" ry="5" fill="#f0f0ea" transform="rotate(57 7 182)"/><ellipse cx="54" cy="152" rx="4" ry="3" fill="#f0f0ea" transform="rotate(40 54 152)"/><ellipse cx="18" cy="223" rx="4" ry="3" fill="#56583a" transform="rotate(16 18 223)"/><ellipse cx="84" cy="216" rx="8" ry="7" fill="#9a8a5a" transform="rotate(2 84 216)"/><ellipse cx="7" cy="210" rx="8" ry="8" fill="#b09060" transform="rotate(113 7 210)"/><ellipse cx="79" cy="176" rx="6" ry="4" fill="#56583a" transform="rotate(11 79 176)"/><ellipse cx="8" cy="121" rx="4" ry="3" fill="#56583a" transform="rotate(3 8 121)"/><ellipse cx="80" cy="192" rx="4" ry="4" fill="#f0f0ea" transform="rotate(155 80 192)"/><ellipse cx="84" cy="191" rx="5" ry="6" fill="#f0f0ea" transform="rotate(79 84 191)"/><ellipse cx="8" cy="188" rx="9" ry="10" fill="#f0f0ea" transform="rotate(137 8 188)"/><ellipse cx="1" cy="213" rx="7" ry="7" fill="#f0f0ea" transform="rotate(44 1 213)"/><ellipse cx="30" cy="130" rx="4" ry="3" fill="#c8a040" transform="rotate(177 30 130)"/><ellipse cx="124" cy="147" rx="3" ry="3" fill="#c8a040" transform="rotate(175 124 147)"/><ellipse cx="103" cy="177" rx="5" ry="5" fill="#9a8a5a" transform="rotate(21 103 177)"/><ellipse cx="115" cy="120" rx="5" ry="3" fill="#9a8a5a" transform="rotate(40 115 120)"/><ellipse cx="98" cy="155" rx="8" ry="7" fill="#9a8a5a" transform="rotate(97 98 155)"/><ellipse cx="119" cy="189" rx="7" ry="8" fill="#f0f0ea" transform="rotate(120 119 189)"/><ellipse cx="62" cy="177" rx="3" ry="2" fill="#9a8a5a" transform="rotate(146 62 177)"/><ellipse cx="116" cy="206" rx="5" ry="5" fill="#b09060" transform="rotate(43 116 206)"/><ellipse cx="19" cy="121" rx="4" ry="5" fill="#c8a040" transform="rotate(36 19 121)"/><ellipse cx="92" cy="121" rx="4" ry="4" fill="#56583a" transform="rotate(178 92 121)"/><ellipse cx="9" cy="123" rx="8" ry="9" fill="#9a8a5a" transform="rotate(136 9 123)"/><ellipse cx="117" cy="125" rx="8" ry="10" fill="#c8a040" transform="rotate(27 117 125)"/><ellipse cx="32" cy="141" rx="3" ry="4" fill="#56583a" transform="rotate(161 32 141)"/><ellipse cx="83" cy="171" rx="4" ry="4" fill="#9a8a5a" transform="rotate(75 83 171)"/><ellipse cx="42" cy="165" rx="3" ry="2" fill="#9a8a5a" transform="rotate(12 42 165)"/><ellipse cx="94" cy="159" rx="5" ry="6" fill="#f0f0ea" transform="rotate(121 94 159)"/><ellipse cx="112" cy="187" rx="3" ry="3" fill="#c8a040" transform="rotate(132 112 187)"/><ellipse cx="101" cy="157" rx="7" ry="7" fill="#9a8a5a" transform="rotate(23 101 157)"/><ellipse cx="75" cy="150" rx="6" ry="5" fill="#9a8a5a" transform="rotate(13 75 150)"/><ellipse cx="1" cy="173" rx="6" ry="7" fill="#56583a" transform="rotate(126 1 173)"/><ellipse cx="78" cy="225" rx="6" ry="6" fill="#56583a" transform="rotate(72 78 225)"/><ellipse cx="107" cy="223" rx="4" ry="3" fill="#56583a" transform="rotate(125 107 223)"/><ellipse cx="103" cy="196" rx="8" ry="8" fill="#c8a040" transform="rotate(24 103 196)"/><ellipse cx="53" cy="162" rx="8" ry="6" fill="#56583a" transform="rotate(95 53 162)"/><ellipse cx="27" cy="147" rx="8" ry="8" fill="#c8a040" transform="rotate(161 27 147)"/><ellipse cx="31" cy="170" rx="6" ry="7" fill="#b09060" transform="rotate(165 31 170)"/><ellipse cx="4" cy="183" rx="6" ry="7" fill="#f0f0ea" transform="rotate(169 4 183)"/><ellipse cx="73" cy="154" rx="6" ry="6" fill="#9a8a5a" transform="rotate(148 73 154)"/><ellipse cx="30" cy="155" rx="7" ry="7" fill="#f0f0ea" transform="rotate(49 30 155)"/><ellipse cx="35" cy="203" rx="8" ry="8" fill="#56583a" transform="rotate(63 35 203)"/><ellipse cx="95" cy="186" rx="5" ry="4" fill="#9a8a5a" transform="rotate(66 95 186)"/><ellipse cx="128" cy="329" rx="4" ry="5" fill="#e0a420" transform="rotate(50 128 329)"/><ellipse cx="50" cy="368" rx="8" ry="9" fill="#f0f0ea" transform="rotate(70 50 368)"/><ellipse cx="26" cy="315" rx="4" ry="3" fill="#f0f0ea" transform="rotate(118 26 315)"/><ellipse cx="4" cy="279" rx="8" ry="8" fill="#6a6040" transform="rotate(161 4 279)"/><ellipse cx="39" cy="221" rx="5" ry="5" fill="#e0a420" transform="rotate(62 39 221)"/><ellipse cx="119" cy="283" rx="6" ry="7" fill="#f0f0ea" transform="rotate(58 119 283)"/><ellipse cx="87" cy="317" rx="8" ry="9" fill="#8a8a58" transform="rotate(58 87 317)"/><ellipse cx="89" cy="316" rx="6" ry="5" fill="#e0a420" transform="rotate(107 89 316)"/><ellipse cx="32" cy="279" rx="7" ry="5" fill="#f0f0ea" transform="rotate(123 32 279)"/><ellipse cx="60" cy="312" rx="5" ry="6" fill="#e0a420" transform="rotate(167 60 312)"/><ellipse cx="43" cy="220" rx="8" ry="10" fill="#e0a420" transform="rotate(9 43 220)"/><ellipse cx="33" cy="251" rx="7" ry="9" fill="#c07a22" transform="rotate(132 33 251)"/><ellipse cx="46" cy="347" rx="6" ry="4" fill="#6a6040" transform="rotate(131 46 347)"/><ellipse cx="2" cy="338" rx="5" ry="4" fill="#6a6040" transform="rotate(53 2 338)"/><ellipse cx="130" cy="246" rx="6" ry="8" fill="#8a8a58" transform="rotate(91 130 246)"/><ellipse cx="84" cy="256" rx="5" ry="3" fill="#e0a420" transform="rotate(107 84 256)"/><ellipse cx="120" cy="314" rx="7" ry="7" fill="#e0a420" transform="rotate(57 120 314)"/><ellipse cx="40" cy="279" rx="9" ry="11" fill="#f0f0ea" transform="rotate(118 40 279)"/><ellipse cx="28" cy="238" rx="8" ry="9" fill="#c07a22" transform="rotate(120 28 238)"/><ellipse cx="84" cy="328" rx="8" ry="6" fill="#f0f0ea" transform="rotate(119 84 328)"/><ellipse cx="130" cy="334" rx="7" ry="8" fill="#6a6040" transform="rotate(90 130 334)"/><ellipse cx="103" cy="253" rx="7" ry="8" fill="#f0f0ea" transform="rotate(173 103 253)"/><ellipse cx="24" cy="218" rx="7" ry="6" fill="#c07a22" transform="rotate(167 24 218)"/><ellipse cx="40" cy="291" rx="6" ry="6" fill="#c07a22" transform="rotate(39 40 291)"/><ellipse cx="122" cy="348" rx="3" ry="4" fill="#c07a22" transform="rotate(35 122 348)"/><ellipse cx="70" cy="270" rx="6" ry="7" fill="#c07a22" transform="rotate(18 70 270)"/><ellipse cx="86" cy="256" rx="4" ry="3" fill="#c07a22" transform="rotate(47 86 256)"/><ellipse cx="102" cy="271" rx="4" ry="5" fill="#6a6040" transform="rotate(42 102 271)"/><ellipse cx="80" cy="323" rx="9" ry="6" fill="#6a6040" transform="rotate(162 80 323)"/><ellipse cx="110" cy="248" rx="7" ry="7" fill="#6a6040" transform="rotate(171 110 248)"/><ellipse cx="116" cy="302" rx="5" ry="4" fill="#e0a420" transform="rotate(121 116 302)"/><ellipse cx="65" cy="227" rx="6" ry="4" fill="#6a6040" transform="rotate(63 65 227)"/><ellipse cx="65" cy="300" rx="8" ry="5" fill="#c07a22" transform="rotate(119 65 300)"/><ellipse cx="91" cy="294" rx="5" ry="4" fill="#f0f0ea" transform="rotate(107 91 294)"/><ellipse cx="131" cy="321" rx="4" ry="3" fill="#e0a420" transform="rotate(5 131 321)"/><ellipse cx="80" cy="322" rx="9" ry="7" fill="#e0a420" transform="rotate(130 80 322)"/><ellipse cx="63" cy="333" rx="4" ry="3" fill="#f0f0ea" transform="rotate(160 63 333)"/><ellipse cx="17" cy="232" rx="7" ry="6" fill="#6a6040" transform="rotate(141 17 232)"/><ellipse cx="101" cy="250" rx="6" ry="5" fill="#6a6040" transform="rotate(13 101 250)"/><ellipse cx="108" cy="263" rx="8" ry="7" fill="#6a6040" transform="rotate(69 108 263)"/><ellipse cx="114" cy="270" rx="4" ry="4" fill="#e0a420" transform="rotate(84 114 270)"/><ellipse cx="25" cy="326" rx="4" ry="5" fill="#e0a420" transform="rotate(10 25 326)"/><ellipse cx="52" cy="302" rx="5" ry="5" fill="#f0f0ea" transform="rotate(76 52 302)"/><ellipse cx="14" cy="225" rx="8" ry="7" fill="#e0a420" transform="rotate(128 14 225)"/><ellipse cx="119" cy="311" rx="7" ry="7" fill="#8a8a58" transform="rotate(174 119 311)"/><ellipse cx="11" cy="224" rx="7" ry="7" fill="#e0a420" transform="rotate(25 11 224)"/><ellipse cx="87" cy="350" rx="6" ry="4" fill="#e0a420" transform="rotate(94 87 350)"/><ellipse cx="114" cy="239" rx="5" ry="5" fill="#c07a22" transform="rotate(47 114 239)"/><ellipse cx="55" cy="266" rx="6" ry="6" fill="#e0a420" transform="rotate(127 55 266)"/><ellipse cx="74" cy="224" rx="4" ry="4" fill="#8a8a58" transform="rotate(178 74 224)"/><ellipse cx="120" cy="286" rx="3" ry="3" fill="#8a8a58" transform="rotate(168 120 286)"/><ellipse cx="128" cy="290" rx="5" ry="4" fill="#6a6040" transform="rotate(54 128 290)"/><ellipse cx="117" cy="313" rx="6" ry="3" fill="#e0a420" transform="rotate(22 117 313)"/><ellipse cx="29" cy="236" rx="6" ry="5" fill="#8a8a58" transform="rotate(62 29 236)"/><ellipse cx="59" cy="331" rx="9" ry="7" fill="#e0a420" transform="rotate(21 59 331)"/><ellipse cx="38" cy="303" rx="6" ry="6" fill="#c07a22" transform="rotate(13 38 303)"/><ellipse cx="94" cy="220" rx="3" ry="3" fill="#8a8a58" transform="rotate(20 94 220)"/><ellipse cx="51" cy="265" rx="7" ry="8" fill="#6a6040" transform="rotate(155 51 265)"/><ellipse cx="8" cy="274" rx="6" ry="6" fill="#e0a420" transform="rotate(37 8 274)"/><ellipse cx="127" cy="236" rx="9" ry="6" fill="#f0f0ea" transform="rotate(122 127 236)"/><ellipse cx="51" cy="338" rx="9" ry="10" fill="#8a8a58" transform="rotate(85 51 338)"/><ellipse cx="38" cy="227" rx="9" ry="10" fill="#8a8a58" transform="rotate(85 38 227)"/><ellipse cx="114" cy="328" rx="3" ry="2" fill="#c07a22" transform="rotate(149 114 328)"/><ellipse cx="56" cy="353" rx="5" ry="6" fill="#8a8a58" transform="rotate(59 56 353)"/><ellipse cx="106" cy="261" rx="3" ry="2" fill="#f0f0ea" transform="rotate(40 106 261)"/><ellipse cx="77" cy="342" rx="8" ry="5" fill="#e0a420" transform="rotate(146 77 342)"/><ellipse cx="19" cy="366" rx="8" ry="8" fill="#6a6040" transform="rotate(88 19 366)"/><ellipse cx="70" cy="300" rx="6" ry="5" fill="#c07a22" transform="rotate(79 70 300)"/><ellipse cx="80" cy="321" rx="6" ry="4" fill="#c07a22" transform="rotate(150 80 321)"/><ellipse cx="98" cy="338" rx="6" ry="4" fill="#c07a22" transform="rotate(16 98 338)"/><ellipse cx="31" cy="306" rx="8" ry="10" fill="#6a6040" transform="rotate(82 31 306)"/><ellipse cx="62" cy="308" rx="4" ry="3" fill="#e0a420" transform="rotate(179 62 308)"/><ellipse cx="38" cy="306" rx="5" ry="6" fill="#e0a420" transform="rotate(63 38 306)"/><ellipse cx="6" cy="370" rx="5" ry="4" fill="#6a6040" transform="rotate(20 6 370)"/><ellipse cx="20" cy="309" rx="5" ry="5" fill="#e0a420" transform="rotate(24 20 309)"/><ellipse cx="4" cy="369" rx="8" ry="8" fill="#8a8a58" transform="rotate(54 4 369)"/><ellipse cx="34" cy="336" rx="6" ry="7" fill="#8a8a58" transform="rotate(155 34 336)"/><ellipse cx="126" cy="257" rx="3" ry="2" fill="#e0a420" transform="rotate(96 126 257)"/><ellipse cx="11" cy="226" rx="6" ry="8" fill="#6a6040" transform="rotate(124 11 226)"/><ellipse cx="124" cy="356" rx="3" ry="3" fill="#f0f0ea" transform="rotate(30 124 356)"/><ellipse cx="93" cy="232" rx="5" ry="4" fill="#e0a420" transform="rotate(171 93 232)"/><ellipse cx="66" cy="246" rx="8" ry="7" fill="#c07a22" transform="rotate(56 66 246)"/><ellipse cx="23" cy="361" rx="9" ry="6" fill="#6a6040" transform="rotate(7 23 361)"/><ellipse cx="110" cy="225" rx="8" ry="8" fill="#6a6040" transform="rotate(14 110 225)"/><ellipse cx="13" cy="266" rx="3" ry="2" fill="#c07a22" transform="rotate(150 13 266)"/><ellipse cx="77" cy="333" rx="4" ry="3" fill="#c07a22" transform="rotate(99 77 333)"/><ellipse cx="16" cy="291" rx="4" ry="3" fill="#e0a420" transform="rotate(173 16 291)"/><ellipse cx="117" cy="289" rx="8" ry="10" fill="#e0a420" transform="rotate(56 117 289)"/><ellipse cx="10" cy="312" rx="5" ry="6" fill="#6a6040" transform="rotate(24 10 312)"/><ellipse cx="121" cy="277" rx="3" ry="2" fill="#c07a22" transform="rotate(82 121 277)"/><ellipse cx="108" cy="291" rx="7" ry="5" fill="#c07a22" transform="rotate(14 108 291)"/><ellipse cx="24" cy="287" rx="8" ry="8" fill="#e0a420" transform="rotate(68 24 287)"/><ellipse cx="55" cy="256" rx="3" ry="3" fill="#c07a22" transform="rotate(85 55 256)"/><ellipse cx="105" cy="258" rx="4" ry="3" fill="#6a6040" transform="rotate(29 105 258)"/><ellipse cx="20" cy="296" rx="7" ry="8" fill="#c07a22" transform="rotate(143 20 296)"/><ellipse cx="63" cy="262" rx="5" ry="3" fill="#c07a22" transform="rotate(110 63 262)"/><ellipse cx="130" cy="370" rx="9" ry="6" fill="#c07a22" transform="rotate(106 130 370)"/><ellipse cx="117" cy="227" rx="7" ry="6" fill="#e0a420" transform="rotate(113 117 227)"/><ellipse cx="106" cy="270" rx="4" ry="2" fill="#6a6040" transform="rotate(73 106 270)"/><ellipse cx="24" cy="284" rx="8" ry="6" fill="#8a8a58" transform="rotate(46 24 284)"/><ellipse cx="18" cy="382" rx="8" ry="8" fill="#b86e1e" transform="rotate(153 18 382)"/><ellipse cx="10" cy="370" rx="7" ry="6" fill="#b86e1e" transform="rotate(44 10 370)"/><ellipse cx="27" cy="439" rx="7" ry="8" fill="#b86e1e" transform="rotate(51 27 439)"/><ellipse cx="1" cy="449" rx="6" ry="7" fill="#f0b020" transform="rotate(132 1 449)"/><ellipse cx="106" cy="402" rx="8" ry="10" fill="#e09a28" transform="rotate(23 106 402)"/><ellipse cx="2" cy="478" rx="6" ry="7" fill="#b86e1e" transform="rotate(63 2 478)"/><ellipse cx="24" cy="468" rx="5" ry="4" fill="#b86e1e" transform="rotate(147 24 468)"/><ellipse cx="78" cy="359" rx="6" ry="6" fill="#e09a28" transform="rotate(18 78 359)"/><ellipse cx="16" cy="452" rx="8" ry="10" fill="#b86e1e" transform="rotate(97 16 452)"/><ellipse cx="75" cy="477" rx="5" ry="3" fill="#e09a28" transform="rotate(114 75 477)"/><ellipse cx="67" cy="428" rx="6" ry="4" fill="#f0b020" transform="rotate(57 67 428)"/><ellipse cx="81" cy="380" rx="5" ry="5" fill="#f0b020" transform="rotate(4 81 380)"/><ellipse cx="13" cy="450" rx="4" ry="3" fill="#e09a28" transform="rotate(133 13 450)"/><ellipse cx="31" cy="417" rx="5" ry="3" fill="#f0b020" transform="rotate(11 31 417)"/><ellipse cx="36" cy="419" rx="7" ry="7" fill="#f0b020" transform="rotate(31 36 419)"/><ellipse cx="16" cy="475" rx="6" ry="5" fill="#b86e1e" transform="rotate(37 16 475)"/><ellipse cx="88" cy="419" rx="5" ry="7" fill="#f0b020" transform="rotate(162 88 419)"/><ellipse cx="51" cy="414" rx="8" ry="8" fill="#5a4a24" transform="rotate(13 51 414)"/><ellipse cx="102" cy="403" rx="4" ry="4" fill="#5a4a24" transform="rotate(144 102 403)"/><ellipse cx="105" cy="478" rx="8" ry="9" fill="#f0b020" transform="rotate(83 105 478)"/><ellipse cx="68" cy="484" rx="9" ry="7" fill="#5a4a24" transform="rotate(169 68 484)"/><ellipse cx="83" cy="406" rx="6" ry="4" fill="#5a4a24" transform="rotate(51 83 406)"/><ellipse cx="66" cy="361" rx="4" ry="5" fill="#e09a28" transform="rotate(162 66 361)"/><ellipse cx="6" cy="487" rx="9" ry="6" fill="#b86e1e" transform="rotate(173 6 487)"/><ellipse cx="82" cy="441" rx="8" ry="5" fill="#f0b020" transform="rotate(64 82 441)"/><ellipse cx="16" cy="360" rx="4" ry="3" fill="#f0b020" transform="rotate(78 16 360)"/><ellipse cx="46" cy="380" rx="3" ry="4" fill="#e09a28" transform="rotate(68 46 380)"/><ellipse cx="11" cy="436" rx="9" ry="8" fill="#e09a28" transform="rotate(33 11 436)"/><ellipse cx="116" cy="479" rx="6" ry="5" fill="#f0b020" transform="rotate(139 116 479)"/><ellipse cx="38" cy="418" rx="7" ry="5" fill="#5a4a24" transform="rotate(51 38 418)"/><ellipse cx="72" cy="406" rx="8" ry="7" fill="#e09a28" transform="rotate(120 72 406)"/><ellipse cx="107" cy="362" rx="5" ry="4" fill="#e09a28" transform="rotate(98 107 362)"/><ellipse cx="127" cy="410" rx="9" ry="6" fill="#b86e1e" transform="rotate(82 127 410)"/><ellipse cx="73" cy="423" rx="5" ry="6" fill="#b86e1e" transform="rotate(14 73 423)"/><ellipse cx="101" cy="379" rx="3" ry="4" fill="#e09a28" transform="rotate(168 101 379)"/><ellipse cx="8" cy="409" rx="6" ry="6" fill="#f0b020" transform="rotate(133 8 409)"/><ellipse cx="29" cy="485" rx="7" ry="5" fill="#b86e1e" transform="rotate(171 29 485)"/><ellipse cx="46" cy="447" rx="7" ry="8" fill="#e09a28" transform="rotate(24 46 447)"/><ellipse cx="97" cy="456" rx="8" ry="7" fill="#f0b020" transform="rotate(105 97 456)"/><ellipse cx="114" cy="359" rx="8" ry="8" fill="#e09a28" transform="rotate(101 114 359)"/><ellipse cx="126" cy="433" rx="6" ry="6" fill="#f0b020" transform="rotate(97 126 433)"/><ellipse cx="112" cy="449" rx="5" ry="4" fill="#b86e1e" transform="rotate(100 112 449)"/><ellipse cx="69" cy="437" rx="7" ry="4" fill="#e09a28" transform="rotate(97 69 437)"/><ellipse cx="58" cy="382" rx="5" ry="3" fill="#5a4a24" transform="rotate(148 58 382)"/><ellipse cx="30" cy="466" rx="5" ry="6" fill="#b86e1e" transform="rotate(83 30 466)"/><ellipse cx="27" cy="414" rx="8" ry="5" fill="#f0b020" transform="rotate(65 27 414)"/><ellipse cx="74" cy="424" rx="9" ry="10" fill="#e09a28" transform="rotate(158 74 424)"/><ellipse cx="131" cy="426" rx="6" ry="7" fill="#5a4a24" transform="rotate(118 131 426)"/><ellipse cx="47" cy="437" rx="5" ry="6" fill="#f0b020" transform="rotate(134 47 437)"/><ellipse cx="30" cy="412" rx="6" ry="6" fill="#f0b020" transform="rotate(48 30 412)"/><ellipse cx="126" cy="422" rx="6" ry="6" fill="#b86e1e" transform="rotate(177 126 422)"/><ellipse cx="69" cy="466" rx="4" ry="3" fill="#f0b020" transform="rotate(79 69 466)"/><ellipse cx="67" cy="373" rx="8" ry="9" fill="#e09a28" transform="rotate(107 67 373)"/><ellipse cx="83" cy="427" rx="8" ry="6" fill="#b86e1e" transform="rotate(105 83 427)"/><ellipse cx="24" cy="441" rx="7" ry="6" fill="#f0b020" transform="rotate(177 24 441)"/><ellipse cx="54" cy="462" rx="5" ry="5" fill="#f0b020" transform="rotate(77 54 462)"/><ellipse cx="52" cy="371" rx="3" ry="2" fill="#f0b020" transform="rotate(127 52 371)"/><ellipse cx="101" cy="433" rx="8" ry="10" fill="#e09a28" transform="rotate(36 101 433)"/><ellipse cx="75" cy="412" rx="4" ry="3" fill="#e09a28" transform="rotate(27 75 412)"/><ellipse cx="4" cy="368" rx="9" ry="8" fill="#e09a28" transform="rotate(156 4 368)"/><ellipse cx="56" cy="464" rx="7" ry="7" fill="#b86e1e" transform="rotate(36 56 464)"/><ellipse cx="94" cy="405" rx="4" ry="3" fill="#f0b020" transform="rotate(149 94 405)"/><ellipse cx="8" cy="383" rx="7" ry="4" fill="#b86e1e" transform="rotate(101 8 383)"/><ellipse cx="76" cy="485" rx="6" ry="6" fill="#b86e1e" transform="rotate(57 76 485)"/><ellipse cx="6" cy="481" rx="8" ry="7" fill="#e09a28" transform="rotate(77 6 481)"/><ellipse cx="55" cy="391" rx="8" ry="11" fill="#f0b020" transform="rotate(62 55 391)"/><ellipse cx="89" cy="447" rx="7" ry="6" fill="#5a4a24" transform="rotate(124 89 447)"/><ellipse cx="3" cy="473" rx="4" ry="3" fill="#5a4a24" transform="rotate(47 3 473)"/><ellipse cx="1" cy="474" rx="5" ry="5" fill="#b86e1e" transform="rotate(136 1 474)"/><ellipse cx="114" cy="402" rx="7" ry="9" fill="#5a4a24" transform="rotate(89 114 402)"/><ellipse cx="73" cy="409" rx="6" ry="5" fill="#5a4a24" transform="rotate(8 73 409)"/><ellipse cx="37" cy="361" rx="8" ry="6" fill="#f0b020" transform="rotate(23 37 361)"/><ellipse cx="26" cy="430" rx="8" ry="8" fill="#e09a28" transform="rotate(61 26 430)"/><ellipse cx="21" cy="405" rx="7" ry="6" fill="#b86e1e" transform="rotate(76 21 405)"/><ellipse cx="125" cy="425" rx="4" ry="4" fill="#f0b020" transform="rotate(180 125 425)"/><ellipse cx="131" cy="437" rx="6" ry="7" fill="#e09a28" transform="rotate(63 131 437)"/><ellipse cx="53" cy="425" rx="4" ry="4" fill="#e09a28" transform="rotate(23 53 425)"/><ellipse cx="71" cy="394" rx="8" ry="7" fill="#f0b020" transform="rotate(79 71 394)"/><ellipse cx="2" cy="452" rx="7" ry="8" fill="#b86e1e" transform="rotate(82 2 452)"/><ellipse cx="25" cy="476" rx="3" ry="4" fill="#e09a28" transform="rotate(76 25 476)"/><ellipse cx="25" cy="453" rx="4" ry="3" fill="#5a4a24" transform="rotate(72 25 453)"/><ellipse cx="47" cy="469" rx="6" ry="6" fill="#f0b020" transform="rotate(70 47 469)"/><ellipse cx="23" cy="406" rx="8" ry="8" fill="#5a4a24" transform="rotate(6 23 406)"/><ellipse cx="86" cy="450" rx="4" ry="5" fill="#b86e1e" transform="rotate(160 86 450)"/><ellipse cx="13" cy="396" rx="5" ry="5" fill="#b86e1e" transform="rotate(173 13 396)"/><ellipse cx="5" cy="363" rx="4" ry="3" fill="#b86e1e" transform="rotate(39 5 363)"/><ellipse cx="50" cy="363" rx="5" ry="5" fill="#f0b020" transform="rotate(144 50 363)"/><ellipse cx="110" cy="433" rx="7" ry="6" fill="#5a4a24" transform="rotate(171 110 433)"/><ellipse cx="90" cy="404" rx="3" ry="4" fill="#b86e1e" transform="rotate(10 90 404)"/><ellipse cx="115" cy="435" rx="7" ry="9" fill="#f0b020" transform="rotate(9 115 435)"/><ellipse cx="104" cy="386" rx="8" ry="10" fill="#f0b020" transform="rotate(106 104 386)"/><ellipse cx="91" cy="410" rx="7" ry="9" fill="#b86e1e" transform="rotate(134 91 410)"/><ellipse cx="12" cy="483" rx="6" ry="7" fill="#e09a28" transform="rotate(176 12 483)"/><ellipse cx="109" cy="441" rx="6" ry="4" fill="#b86e1e" transform="rotate(109 109 441)"/><ellipse cx="88" cy="470" rx="8" ry="7" fill="#b86e1e" transform="rotate(11 88 470)"/><ellipse cx="125" cy="467" rx="6" ry="5" fill="#f0b020" transform="rotate(163 125 467)"/><ellipse cx="31" cy="392" rx="9" ry="6" fill="#b86e1e" transform="rotate(105 31 392)"/><ellipse cx="12" cy="442" rx="4" ry="4" fill="#e09a28" transform="rotate(171 12 442)"/><ellipse cx="63" cy="451" rx="3" ry="3" fill="#f0b020" transform="rotate(164 63 451)"/><ellipse cx="46" cy="398" rx="8" ry="6" fill="#b86e1e" transform="rotate(85 46 398)"/><ellipse cx="82" cy="374" rx="6" ry="7" fill="#f0b020" transform="rotate(153 82 374)"/><ellipse cx="128" cy="469" rx="5" ry="4" fill="#b86e1e" transform="rotate(3 128 469)"/><ellipse cx="47" cy="385" rx="3" ry="3" fill="#b86e1e" transform="rotate(28 47 385)"/><ellipse cx="92" cy="417" rx="4" ry="3" fill="#e09a28" transform="rotate(145 92 417)"/><ellipse cx="48" cy="380" rx="3" ry="2" fill="#e09a28" transform="rotate(21 48 380)"/><ellipse cx="98" cy="402" rx="7" ry="6" fill="#e09a28" transform="rotate(111 98 402)"/><ellipse cx="64" cy="461" rx="5" ry="4" fill="#f0b020" transform="rotate(164 64 461)"/><ellipse cx="37" cy="439" rx="7" ry="8" fill="#b86e1e" transform="rotate(20 37 439)"/><ellipse cx="18" cy="362" rx="8" ry="9" fill="#b86e1e" transform="rotate(94 18 362)"/><ellipse cx="24" cy="442" rx="8" ry="10" fill="#f0b020" transform="rotate(26 24 442)"/><ellipse cx="103" cy="571" rx="7" ry="6" fill="#f0b020" transform="rotate(165 103 571)"/><ellipse cx="108" cy="514" rx="5" ry="5" fill="#b86e1e" transform="rotate(64 108 514)"/><ellipse cx="31" cy="483" rx="6" ry="7" fill="#8a3a48" transform="rotate(12 31 483)"/><ellipse cx="124" cy="533" rx="6" ry="4" fill="#b86e1e" transform="rotate(154 124 533)"/><ellipse cx="76" cy="487" rx="7" ry="5" fill="#8a3a48" transform="rotate(163 76 487)"/><ellipse cx="127" cy="488" rx="3" ry="3" fill="#b86e1e" transform="rotate(55 127 488)"/><ellipse cx="95" cy="478" rx="8" ry="10" fill="#6a4a28" transform="rotate(108 95 478)"/><ellipse cx="19" cy="486" rx="3" ry="4" fill="#b86e1e" transform="rotate(16 19 486)"/><ellipse cx="57" cy="553" rx="8" ry="10" fill="#f0b020" transform="rotate(96 57 553)"/><ellipse cx="39" cy="528" rx="6" ry="5" fill="#b86e1e" transform="rotate(120 39 528)"/><ellipse cx="11" cy="514" rx="6" ry="7" fill="#f0b020" transform="rotate(102 11 514)"/><ellipse cx="126" cy="547" rx="8" ry="5" fill="#b86e1e" transform="rotate(155 126 547)"/><ellipse cx="86" cy="541" rx="6" ry="5" fill="#f0b020" transform="rotate(76 86 541)"/><ellipse cx="113" cy="537" rx="7" ry="8" fill="#b86e1e" transform="rotate(173 113 537)"/><ellipse cx="97" cy="555" rx="4" ry="4" fill="#6a4a28" transform="rotate(148 97 555)"/><ellipse cx="124" cy="518" rx="4" ry="4" fill="#b86e1e" transform="rotate(29 124 518)"/><ellipse cx="30" cy="586" rx="4" ry="5" fill="#b86e1e" transform="rotate(64 30 586)"/><ellipse cx="85" cy="499" rx="7" ry="8" fill="#b86e1e" transform="rotate(141 85 499)"/><ellipse cx="60" cy="539" rx="7" ry="8" fill="#f0b020" transform="rotate(104 60 539)"/><ellipse cx="89" cy="568" rx="4" ry="4" fill="#6a4a28" transform="rotate(29 89 568)"/><ellipse cx="82" cy="586" rx="6" ry="6" fill="#8a3a48" transform="rotate(139 82 586)"/><ellipse cx="22" cy="586" rx="6" ry="7" fill="#f0b020" transform="rotate(95 22 586)"/><ellipse cx="102" cy="484" rx="4" ry="4" fill="#f0b020" transform="rotate(179 102 484)"/><ellipse cx="78" cy="502" rx="5" ry="5" fill="#8a3a48" transform="rotate(22 78 502)"/><ellipse cx="81" cy="576" rx="6" ry="8" fill="#b86e1e" transform="rotate(43 81 576)"/><ellipse cx="48" cy="572" rx="8" ry="9" fill="#f0b020" transform="rotate(65 48 572)"/><ellipse cx="16" cy="520" rx="7" ry="9" fill="#8a3a48" transform="rotate(11 16 520)"/><ellipse cx="107" cy="518" rx="5" ry="4" fill="#f0b020" transform="rotate(8 107 518)"/><ellipse cx="121" cy="554" rx="5" ry="3" fill="#8a3a48" transform="rotate(5 121 554)"/><ellipse cx="110" cy="543" rx="4" ry="2" fill="#f0b020" transform="rotate(18 110 543)"/><ellipse cx="105" cy="499" rx="6" ry="5" fill="#8a3a48" transform="rotate(36 105 499)"/><ellipse cx="77" cy="506" rx="9" ry="10" fill="#b86e1e" transform="rotate(113 77 506)"/><ellipse cx="2" cy="516" rx="4" ry="4" fill="#f0b020" transform="rotate(9 2 516)"/><ellipse cx="10" cy="547" rx="7" ry="7" fill="#8a3a48" transform="rotate(40 10 547)"/><ellipse cx="91" cy="528" rx="4" ry="6" fill="#6a4a28" transform="rotate(19 91 528)"/><ellipse cx="47" cy="537" rx="5" ry="3" fill="#f0b020" transform="rotate(54 47 537)"/><ellipse cx="22" cy="518" rx="6" ry="6" fill="#8a3a48" transform="rotate(90 22 518)"/><ellipse cx="41" cy="516" rx="6" ry="4" fill="#b86e1e" transform="rotate(117 41 516)"/><ellipse cx="115" cy="546" rx="7" ry="8" fill="#f0b020" transform="rotate(69 115 546)"/><ellipse cx="50" cy="485" rx="9" ry="8" fill="#6a4a28" transform="rotate(149 50 485)"/><ellipse cx="125" cy="589" rx="3" ry="3" fill="#f0b020" transform="rotate(51 125 589)"/><ellipse cx="101" cy="549" rx="7" ry="6" fill="#b86e1e" transform="rotate(60 101 549)"/><ellipse cx="114" cy="583" rx="7" ry="6" fill="#b86e1e" transform="rotate(92 114 583)"/><ellipse cx="67" cy="549" rx="5" ry="5" fill="#8a3a48" transform="rotate(85 67 549)"/><ellipse cx="8" cy="516" rx="5" ry="6" fill="#8a3a48" transform="rotate(128 8 516)"/><ellipse cx="48" cy="505" rx="4" ry="4" fill="#f0b020" transform="rotate(52 48 505)"/><ellipse cx="1" cy="576" rx="6" ry="5" fill="#b86e1e" transform="rotate(43 1 576)"/><ellipse cx="77" cy="494" rx="7" ry="6" fill="#6a4a28" transform="rotate(168 77 494)"/><ellipse cx="123" cy="516" rx="9" ry="9" fill="#f0b020" transform="rotate(149 123 516)"/><ellipse cx="23" cy="543" rx="9" ry="8" fill="#8a3a48" transform="rotate(17 23 543)"/><ellipse cx="110" cy="514" rx="4" ry="5" fill="#6a4a28" transform="rotate(5 110 514)"/><ellipse cx="99" cy="548" rx="4" ry="3" fill="#f0b020" transform="rotate(102 99 548)"/><ellipse cx="59" cy="578" rx="5" ry="4" fill="#f0b020" transform="rotate(50 59 578)"/><ellipse cx="32" cy="484" rx="4" ry="2" fill="#f0b020" transform="rotate(147 32 484)"/><ellipse cx="45" cy="493" rx="4" ry="4" fill="#f0b020" transform="rotate(163 45 493)"/><ellipse cx="42" cy="481" rx="5" ry="6" fill="#f0b020" transform="rotate(166 42 481)"/><ellipse cx="64" cy="546" rx="8" ry="6" fill="#8a3a48" transform="rotate(11 64 546)"/><ellipse cx="11" cy="547" rx="8" ry="10" fill="#8a3a48" transform="rotate(65 11 547)"/><ellipse cx="123" cy="576" rx="3" ry="3" fill="#b86e1e" transform="rotate(14 123 576)"/><ellipse cx="54" cy="558" rx="8" ry="6" fill="#f0b020" transform="rotate(39 54 558)"/><ellipse cx="28" cy="537" rx="8" ry="7" fill="#b86e1e" transform="rotate(108 28 537)"/><ellipse cx="45" cy="554" rx="8" ry="6" fill="#b86e1e" transform="rotate(58 45 554)"/><ellipse cx="97" cy="507" rx="7" ry="8" fill="#b86e1e" transform="rotate(166 97 507)"/><ellipse cx="101" cy="587" rx="6" ry="5" fill="#6a4a28" transform="rotate(135 101 587)"/><ellipse cx="123" cy="493" rx="3" ry="3" fill="#b86e1e" transform="rotate(38 123 493)"/><ellipse cx="130" cy="504" rx="8" ry="5" fill="#f0b020" transform="rotate(159 130 504)"/><ellipse cx="18" cy="485" rx="6" ry="6" fill="#f0b020" transform="rotate(66 18 485)"/><ellipse cx="123" cy="519" rx="4" ry="3" fill="#f0b020" transform="rotate(135 123 519)"/><ellipse cx="4" cy="565" rx="4" ry="6" fill="#8a3a48" transform="rotate(54 4 565)"/><ellipse cx="83" cy="517" rx="8" ry="7" fill="#b86e1e" transform="rotate(6 83 517)"/><ellipse cx="14" cy="560" rx="3" ry="4" fill="#8a3a48" transform="rotate(172 14 560)"/><ellipse cx="113" cy="485" rx="6" ry="6" fill="#8a3a48" transform="rotate(168 113 485)"/><ellipse cx="82" cy="503" rx="5" ry="4" fill="#8a3a48" transform="rotate(61 82 503)"/><ellipse cx="30" cy="501" rx="8" ry="8" fill="#b86e1e" transform="rotate(127 30 501)"/><ellipse cx="28" cy="542" rx="4" ry="5" fill="#b86e1e" transform="rotate(34 28 542)"/><ellipse cx="108" cy="510" rx="5" ry="5" fill="#b86e1e" transform="rotate(41 108 510)"/><ellipse cx="42" cy="546" rx="9" ry="7" fill="#f0b020" transform="rotate(53 42 546)"/><ellipse cx="112" cy="560" rx="3" ry="4" fill="#8a3a48" transform="rotate(46 112 560)"/><ellipse cx="57" cy="494" rx="9" ry="9" fill="#f0b020" transform="rotate(38 57 494)"/><ellipse cx="128" cy="479" rx="8" ry="6" fill="#b86e1e" transform="rotate(24 128 479)"/><ellipse cx="98" cy="530" rx="5" ry="5" fill="#8a3a48" transform="rotate(85 98 530)"/><ellipse cx="128" cy="482" rx="4" ry="5" fill="#f0b020" transform="rotate(9 128 482)"/><ellipse cx="18" cy="545" rx="6" ry="7" fill="#f0b020" transform="rotate(12 18 545)"/><ellipse cx="130" cy="513" rx="8" ry="6" fill="#8a3a48" transform="rotate(34 130 513)"/><ellipse cx="69" cy="478" rx="4" ry="4" fill="#6a4a28" transform="rotate(128 69 478)"/><ellipse cx="130" cy="537" rx="8" ry="10" fill="#f0b020" transform="rotate(89 130 537)"/><ellipse cx="127" cy="574" rx="9" ry="7" fill="#f0b020" transform="rotate(69 127 574)"/><ellipse cx="92" cy="480" rx="5" ry="6" fill="#b86e1e" transform="rotate(130 92 480)"/><ellipse cx="6" cy="566" rx="9" ry="7" fill="#b86e1e" transform="rotate(176 6 566)"/><ellipse cx="5" cy="529" rx="5" ry="4" fill="#8a3a48" transform="rotate(68 5 529)"/><ellipse cx="52" cy="617" rx="5" ry="7" fill="#8a6048" transform="rotate(98 52 617)"/><ellipse cx="116" cy="676" rx="7" ry="8" fill="#b89070" transform="rotate(155 116 676)"/><ellipse cx="66" cy="699" rx="6" ry="7" fill="#b89070" transform="rotate(50 66 699)"/><ellipse cx="87" cy="589" rx="6" ry="4" fill="#b89070" transform="rotate(103 87 589)"/><ellipse cx="91" cy="618" rx="6" ry="6" fill="#d8d4cc" transform="rotate(116 91 618)"/><ellipse cx="127" cy="578" rx="7" ry="8" fill="#d8d4cc" transform="rotate(151 127 578)"/><ellipse cx="72" cy="624" rx="7" ry="8" fill="#8a6048" transform="rotate(90 72 624)"/><ellipse cx="93" cy="626" rx="6" ry="6" fill="#d8d4cc" transform="rotate(18 93 626)"/><ellipse cx="82" cy="644" rx="4" ry="4" fill="#d8d4cc" transform="rotate(67 82 644)"/><ellipse cx="119" cy="636" rx="7" ry="6" fill="#8a6048" transform="rotate(146 119 636)"/><ellipse cx="29" cy="595" rx="8" ry="7" fill="#b89070" transform="rotate(135 29 595)"/><ellipse cx="22" cy="623" rx="6" ry="5" fill="#8a6048" transform="rotate(45 22 623)"/><ellipse cx="84" cy="679" rx="7" ry="9" fill="#b89070" transform="rotate(82 84 679)"/><ellipse cx="50" cy="680" rx="7" ry="5" fill="#b89070" transform="rotate(179 50 680)"/><ellipse cx="33" cy="591" rx="5" ry="6" fill="#d8d4cc" transform="rotate(115 33 591)"/><ellipse cx="87" cy="612" rx="4" ry="4" fill="#b89070" transform="rotate(115 87 612)"/><ellipse cx="83" cy="667" rx="4" ry="4" fill="#b89070" transform="rotate(174 83 667)"/><ellipse cx="17" cy="638" rx="6" ry="7" fill="#d8d4cc" transform="rotate(97 17 638)"/><ellipse cx="33" cy="646" rx="3" ry="2" fill="#b89070" transform="rotate(78 33 646)"/><ellipse cx="94" cy="612" rx="5" ry="4" fill="#8a6048" transform="rotate(23 94 612)"/><ellipse cx="69" cy="638" rx="3" ry="2" fill="#d8d4cc" transform="rotate(158 69 638)"/><ellipse cx="102" cy="690" rx="7" ry="6" fill="#b89070" transform="rotate(75 102 690)"/><ellipse cx="127" cy="631" rx="6" ry="5" fill="#b89070" transform="rotate(98 127 631)"/><ellipse cx="111" cy="594" rx="6" ry="8" fill="#d8d4cc" transform="rotate(16 111 594)"/><ellipse cx="87" cy="618" rx="3" ry="4" fill="#8a6048" transform="rotate(100 87 618)"/><ellipse cx="69" cy="639" rx="8" ry="8" fill="#b89070" transform="rotate(27 69 639)"/><ellipse cx="78" cy="634" rx="5" ry="6" fill="#8a6048" transform="rotate(121 78 634)"/><ellipse cx="23" cy="586" rx="5" ry="3" fill="#b89070" transform="rotate(171 23 586)"/><ellipse cx="30" cy="602" rx="6" ry="7" fill="#d8d4cc" transform="rotate(141 30 602)"/><ellipse cx="43" cy="625" rx="5" ry="4" fill="#b89070" transform="rotate(146 43 625)"/><ellipse cx="107" cy="697" rx="4" ry="4" fill="#5a7048" transform="rotate(14 107 697)"/><ellipse cx="108" cy="706" rx="5" ry="6" fill="#3e4020" transform="rotate(149 108 706)"/><ellipse cx="18" cy="725" rx="3" ry="3" fill="#3e4020" transform="rotate(85 18 725)"/><ellipse cx="25" cy="778" rx="4" ry="4" fill="#7a8a38" transform="rotate(22 25 778)"/><ellipse cx="41" cy="711" rx="8" ry="8" fill="#3e4020" transform="rotate(174 41 711)"/><ellipse cx="7" cy="716" rx="8" ry="10" fill="#7a8a38" transform="rotate(78 7 716)"/><ellipse cx="26" cy="693" rx="6" ry="5" fill="#5a7048" transform="rotate(168 26 693)"/><ellipse cx="64" cy="742" rx="5" ry="6" fill="#7a8a38" transform="rotate(116 64 742)"/><ellipse cx="120" cy="739" rx="3" ry="3" fill="#c0b050" transform="rotate(104 120 739)"/><ellipse cx="125" cy="764" rx="3" ry="2" fill="#5a7048" transform="rotate(74 125 764)"/><ellipse cx="26" cy="707" rx="9" ry="9" fill="#3e4020" transform="rotate(113 26 707)"/><ellipse cx="27" cy="707" rx="4" ry="5" fill="#c0b050" transform="rotate(12 27 707)"/><ellipse cx="18" cy="769" rx="8" ry="7" fill="#c0b050" transform="rotate(143 18 769)"/><ellipse cx="97" cy="703" rx="4" ry="5" fill="#7a8a38" transform="rotate(54 97 703)"/><ellipse cx="70" cy="703" rx="8" ry="8" fill="#c0b050" transform="rotate(119 70 703)"/><ellipse cx="12" cy="760" rx="9" ry="8" fill="#7a8a38" transform="rotate(180 12 760)"/><ellipse cx="119" cy="751" rx="4" ry="3" fill="#c0b050" transform="rotate(10 119 751)"/><ellipse cx="21" cy="729" rx="8" ry="9" fill="#3e4020" transform="rotate(180 21 729)"/><ellipse cx="73" cy="702" rx="8" ry="7" fill="#7a8a38" transform="rotate(38 73 702)"/><ellipse cx="124" cy="749" rx="4" ry="6" fill="#3e4020" transform="rotate(97 124 749)"/><ellipse cx="20" cy="715" rx="7" ry="8" fill="#7a8a38" transform="rotate(118 20 715)"/><ellipse cx="20" cy="705" rx="5" ry="4" fill="#c0b050" transform="rotate(90 20 705)"/><ellipse cx="16" cy="773" rx="9" ry="11" fill="#c0b050" transform="rotate(74 16 773)"/><ellipse cx="64" cy="690" rx="8" ry="9" fill="#c0b050" transform="rotate(51 64 690)"/><ellipse cx="64" cy="767" rx="7" ry="6" fill="#c0b050" transform="rotate(51 64 767)"/><ellipse cx="18" cy="713" rx="8" ry="10" fill="#7a8a38" transform="rotate(148 18 713)"/><ellipse cx="121" cy="691" rx="7" ry="8" fill="#3e4020" transform="rotate(49 121 691)"/><ellipse cx="124" cy="748" rx="3" ry="3" fill="#5a7048" transform="rotate(123 124 748)"/><ellipse cx="32" cy="756" rx="4" ry="5" fill="#7a8a38" transform="rotate(17 32 756)"/><ellipse cx="95" cy="730" rx="7" ry="5" fill="#c0b050" transform="rotate(152 95 730)"/><ellipse cx="52" cy="691" rx="3" ry="3" fill="#3e4020" transform="rotate(165 52 691)"/><ellipse cx="91" cy="726" rx="8" ry="5" fill="#c0b050" transform="rotate(92 91 726)"/><ellipse cx="22" cy="775" rx="5" ry="6" fill="#5a7048" transform="rotate(77 22 775)"/><ellipse cx="20" cy="697" rx="8" ry="6" fill="#5a7048" transform="rotate(69 20 697)"/><ellipse cx="70" cy="699" rx="6" ry="4" fill="#c0b050" transform="rotate(129 70 699)"/><ellipse cx="34" cy="775" rx="5" ry="5" fill="#c0b050" transform="rotate(61 34 775)"/><ellipse cx="95" cy="737" rx="4" ry="3" fill="#c0b050" transform="rotate(13 95 737)"/><ellipse cx="64" cy="761" rx="6" ry="7" fill="#7a8a38" transform="rotate(22 64 761)"/><ellipse cx="98" cy="702" rx="5" ry="3" fill="#3e4020" transform="rotate(159 98 702)"/><ellipse cx="68" cy="715" rx="8" ry="5" fill="#7a8a38" transform="rotate(59 68 715)"/><ellipse cx="32" cy="759" rx="6" ry="7" fill="#7a8a38" transform="rotate(18 32 759)"/><ellipse cx="78" cy="778" rx="3" ry="3" fill="#c0b050" transform="rotate(77 78 778)"/><ellipse cx="45" cy="763" rx="6" ry="7" fill="#c0b050" transform="rotate(81 45 763)"/><ellipse cx="123" cy="726" rx="5" ry="4" fill="#7a8a38" transform="rotate(37 123 726)"/><ellipse cx="96" cy="750" rx="4" ry="3" fill="#c0b050" transform="rotate(52 96 750)"/><ellipse cx="26" cy="708" rx="5" ry="6" fill="#c0b050" transform="rotate(122 26 708)"/><ellipse cx="5" cy="736" rx="5" ry="3" fill="#c0b050" transform="rotate(50 5 736)"/><ellipse cx="114" cy="693" rx="5" ry="5" fill="#3e4020" transform="rotate(149 114 693)"/><ellipse cx="21" cy="777" rx="7" ry="8" fill="#c0b050" transform="rotate(66 21 777)"/><ellipse cx="109" cy="774" rx="8" ry="9" fill="#c0b050" transform="rotate(111 109 774)"/><ellipse cx="51" cy="747" rx="9" ry="8" fill="#c0b050" transform="rotate(17 51 747)"/><ellipse cx="127" cy="760" rx="5" ry="5" fill="#7a8a38" transform="rotate(61 127 760)"/><ellipse cx="26" cy="730" rx="4" ry="4" fill="#c0b050" transform="rotate(100 26 730)"/><ellipse cx="87" cy="724" rx="7" ry="8" fill="#3e4020" transform="rotate(97 87 724)"/><ellipse cx="53" cy="696" rx="7" ry="8" fill="#3e4020" transform="rotate(169 53 696)"/><ellipse cx="78" cy="765" rx="8" ry="5" fill="#5a7048" transform="rotate(154 78 765)"/><ellipse cx="2" cy="698" rx="8" ry="7" fill="#7a8a38" transform="rotate(117 2 698)"/><ellipse cx="19" cy="738" rx="3" ry="3" fill="#5a7048" transform="rotate(158 19 738)"/><ellipse cx="4" cy="719" rx="9" ry="7" fill="#5a7048" transform="rotate(104 4 719)"/><ellipse cx="87" cy="762" rx="4" ry="4" fill="#c0b050" transform="rotate(96 87 762)"/><ellipse cx="108" cy="705" rx="5" ry="6" fill="#3e4020" transform="rotate(42 108 705)"/><ellipse cx="29" cy="770" rx="7" ry="8" fill="#3e4020" transform="rotate(78 29 770)"/><ellipse cx="65" cy="776" rx="6" ry="8" fill="#7a8a38" transform="rotate(41 65 776)"/><ellipse cx="51" cy="689" rx="8" ry="5" fill="#7a8a38" transform="rotate(116 51 689)"/><ellipse cx="74" cy="748" rx="7" ry="8" fill="#3e4020" transform="rotate(34 74 748)"/><ellipse cx="122" cy="770" rx="7" ry="5" fill="#3e4020" transform="rotate(113 122 770)"/><ellipse cx="35" cy="715" rx="5" ry="5" fill="#3e4020" transform="rotate(133 35 715)"/><ellipse cx="106" cy="693" rx="7" ry="7" fill="#c0b050" transform="rotate(14 106 693)"/><ellipse cx="115" cy="770" rx="4" ry="3" fill="#7a8a38" transform="rotate(131 115 770)"/><ellipse cx="117" cy="755" rx="7" ry="5" fill="#3e4020" transform="rotate(123 117 755)"/><ellipse cx="18" cy="776" rx="8" ry="6" fill="#c0b050" transform="rotate(100 18 776)"/><ellipse cx="23" cy="742" rx="9" ry="9" fill="#7a8a38" transform="rotate(74 23 742)"/><ellipse cx="101" cy="690" rx="6" ry="6" fill="#c0b050" transform="rotate(173 101 690)"/><ellipse cx="84" cy="733" rx="9" ry="8" fill="#7a8a38" transform="rotate(82 84 733)"/><ellipse cx="21" cy="741" rx="8" ry="9" fill="#3e4020" transform="rotate(35 21 741)"/><ellipse cx="26" cy="762" rx="3" ry="3" fill="#c0b050" transform="rotate(174 26 762)"/><ellipse cx="41" cy="693" rx="5" ry="4" fill="#3e4020" transform="rotate(177 41 693)"/><ellipse cx="25" cy="716" rx="9" ry="6" fill="#3e4020" transform="rotate(112 25 716)"/><ellipse cx="53" cy="751" rx="5" ry="4" fill="#5a7048" transform="rotate(68 53 751)"/><ellipse cx="15" cy="773" rx="7" ry="6" fill="#3e4020" transform="rotate(163 15 773)"/><ellipse cx="21" cy="770" rx="3" ry="3" fill="#5a7048" transform="rotate(169 21 770)"/><ellipse cx="73" cy="750" rx="8" ry="6" fill="#3e4020" transform="rotate(101 73 750)"/><ellipse cx="69" cy="715" rx="7" ry="5" fill="#c0b050" transform="rotate(10 69 715)"/><ellipse cx="70" cy="752" rx="5" ry="5" fill="#3e4020" transform="rotate(67 70 752)"/><ellipse cx="128" cy="770" rx="8" ry="6" fill="#3e4020" transform="rotate(28 128 770)"/><ellipse cx="122" cy="703" rx="4" ry="4" fill="#c0b050" transform="rotate(103 122 703)"/><ellipse cx="52" cy="775" rx="7" ry="6" fill="#3e4020" transform="rotate(127 52 775)"/><ellipse cx="106" cy="720" rx="4" ry="5" fill="#3e4020" transform="rotate(171 106 720)"/><ellipse cx="121" cy="715" rx="4" ry="5" fill="#3e4020" transform="rotate(17 121 715)"/><ellipse cx="66" cy="766" rx="7" ry="7" fill="#3e4020" transform="rotate(54 66 766)"/><ellipse cx="75" cy="801" rx="6" ry="7" fill="#d8a878" transform="rotate(38 75 801)"/><ellipse cx="29" cy="872" rx="3" ry="2" fill="#6a7a50" transform="rotate(8 29 872)"/><ellipse cx="97" cy="868" rx="5" ry="6" fill="#d8a878" transform="rotate(165 97 868)"/><ellipse cx="92" cy="854" rx="5" ry="4" fill="#d8a878" transform="rotate(154 92 854)"/><ellipse cx="79" cy="830" rx="5" ry="6" fill="#6a7a50" transform="rotate(24 79 830)"/><ellipse cx="47" cy="837" rx="6" ry="4" fill="#d8a878" transform="rotate(179 47 837)"/><ellipse cx="68" cy="783" rx="7" ry="5" fill="#e0b888" transform="rotate(161 68 783)"/><ellipse cx="100" cy="823" rx="5" ry="6" fill="#d8a878" transform="rotate(10 100 823)"/><ellipse cx="70" cy="825" rx="4" ry="4" fill="#6a7a50" transform="rotate(84 70 825)"/><ellipse cx="70" cy="796" rx="5" ry="6" fill="#6a7a50" transform="rotate(147 70 796)"/><ellipse cx="70" cy="772" rx="6" ry="4" fill="#6a7a50" transform="rotate(108 70 772)"/><ellipse cx="49" cy="884" rx="3" ry="2" fill="#d8a878" transform="rotate(102 49 884)"/><ellipse cx="51" cy="884" rx="4" ry="4" fill="#d8a878" transform="rotate(95 51 884)"/><ellipse cx="126" cy="808" rx="7" ry="5" fill="#e0b888" transform="rotate(147 126 808)"/><ellipse cx="18" cy="823" rx="5" ry="6" fill="#e0b888" transform="rotate(48 18 823)"/><ellipse cx="45" cy="791" rx="4" ry="3" fill="#d8a878" transform="rotate(19 45 791)"/><ellipse cx="96" cy="831" rx="4" ry="3" fill="#d8a878" transform="rotate(67 96 831)"/><ellipse cx="26" cy="860" rx="6" ry="5" fill="#d8a878" transform="rotate(156 26 860)"/><ellipse cx="94" cy="776" rx="3" ry="2" fill="#6a7a50" transform="rotate(142 94 776)"/><ellipse cx="47" cy="788" rx="5" ry="7" fill="#6a7a50" transform="rotate(26 47 788)"/><ellipse cx="6" cy="789" rx="4" ry="5" fill="#e0b888" transform="rotate(26 6 789)"/><ellipse cx="45" cy="873" rx="4" ry="5" fill="#e0b888" transform="rotate(21 45 873)"/><ellipse cx="119" cy="865" rx="4" ry="5" fill="#d8a878" transform="rotate(27 119 865)"/><ellipse cx="69" cy="799" rx="4" ry="3" fill="#d8a878" transform="rotate(49 69 799)"/><ellipse cx="93" cy="883" rx="7" ry="6" fill="#a08060" transform="rotate(41 93 883)"/><ellipse cx="106" cy="871" rx="3" ry="2" fill="#d8a878" transform="rotate(149 106 871)"/><ellipse cx="70" cy="771" rx="6" ry="8" fill="#d8a878" transform="rotate(118 70 771)"/><ellipse cx="102" cy="793" rx="5" ry="6" fill="#6a7a50" transform="rotate(86 102 793)"/><ellipse cx="82" cy="876" rx="4" ry="5" fill="#d8a878" transform="rotate(1 82 876)"/><ellipse cx="32" cy="879" rx="4" ry="3" fill="#d8a878" transform="rotate(51 32 879)"/><ellipse cx="58" cy="838" rx="7" ry="7" fill="#e0b888" transform="rotate(17 58 838)"/><ellipse cx="75" cy="856" rx="6" ry="5" fill="#d8a878" transform="rotate(166 75 856)"/><ellipse cx="62" cy="875" rx="5" ry="3" fill="#e0b888" transform="rotate(153 62 875)"/><ellipse cx="50" cy="853" rx="6" ry="7" fill="#d8a878" transform="rotate(100 50 853)"/><ellipse cx="74" cy="859" rx="3" ry="3" fill="#d8a878" transform="rotate(62 74 859)"/><ellipse cx="12" cy="887" rx="6" ry="4" fill="#d8a878" transform="rotate(102 12 887)"/><ellipse cx="31" cy="882" rx="3" ry="3" fill="#a08060" transform="rotate(67 31 882)"/><ellipse cx="5" cy="825" rx="4" ry="6" fill="#d8a878" transform="rotate(47 5 825)"/><ellipse cx="19" cy="833" rx="5" ry="4" fill="#a08060"/><ellipse cx="9" cy="772" rx="5" ry="3" fill="#d8a878" transform="rotate(180 9 772)"/><ellipse cx="7" cy="835" rx="3" ry="3" fill="#d8a878" transform="rotate(143 7 835)"/><ellipse cx="98" cy="771" rx="6" ry="7" fill="#e0b888" transform="rotate(53 98 771)"/><ellipse cx="16" cy="847" rx="3" ry="3" fill="#d8a878" transform="rotate(156 16 847)"/><ellipse cx="128" cy="835" rx="4" ry="3" fill="#d8a878" transform="rotate(25 128 835)"/><ellipse cx="12" cy="801" rx="4" ry="3" fill="#e0b888" transform="rotate(155 12 801)"/><ellipse cx="75" cy="809" rx="3" ry="2" fill="#d8a878" transform="rotate(29 75 809)"/><ellipse cx="89" cy="862" rx="3" ry="3" fill="#a08060" transform="rotate(156 89 862)"/><ellipse cx="75" cy="794" rx="6" ry="7" fill="#d8a878" transform="rotate(5 75 794)"/><ellipse cx="110" cy="855" rx="2" ry="2" fill="#a08060" transform="rotate(14 110 855)"/><ellipse cx="24" cy="883" rx="4" ry="5" fill="#6a7a50" transform="rotate(76 24 883)"/><ellipse cx="111" cy="771" rx="4" ry="3" fill="#d8a878" transform="rotate(167 111 771)"/><ellipse cx="86" cy="826" rx="5" ry="6" fill="#6a7a50" transform="rotate(70 86 826)"/><ellipse cx="105" cy="770" rx="5" ry="4" fill="#6a7a50" transform="rotate(84 105 770)"/><ellipse cx="0" cy="862" rx="3" ry="3" fill="#d8a878" transform="rotate(136 0 862)"/><ellipse cx="21" cy="772" rx="6" ry="6" fill="#6a7a50" transform="rotate(93 21 772)"/><ellipse cx="8" cy="783" rx="4" ry="3" fill="#d8a878" transform="rotate(166 8 783)"/><ellipse cx="87" cy="798" rx="7" ry="8" fill="#d8a878" transform="rotate(165 87 798)"/><ellipse cx="28" cy="803" rx="7" ry="4" fill="#6a7a50" transform="rotate(110 28 803)"/><ellipse cx="94" cy="889" rx="3" ry="3" fill="#d8a878" transform="rotate(176 94 889)"/><ellipse cx="124" cy="803" rx="4" ry="3" fill="#d8a878" transform="rotate(23 124 803)"/><ellipse cx="91" cy="794" rx="3" ry="4" fill="#d8a878" transform="rotate(167 91 794)"/><ellipse cx="9" cy="776" rx="4" ry="3" fill="#d8a878" transform="rotate(137 9 776)"/><ellipse cx="2" cy="812" rx="3" ry="2" fill="#e0b888" transform="rotate(165 2 812)"/><ellipse cx="127" cy="852" rx="3" ry="4" fill="#d8a878" transform="rotate(25 127 852)"/><ellipse cx="33" cy="816" rx="5" ry="4" fill="#d8a878" transform="rotate(117 33 816)"/><ellipse cx="45" cy="870" rx="2" ry="3" fill="#d8a878" transform="rotate(27 45 870)"/><ellipse cx="112" cy="866" rx="5" ry="4" fill="#d8a878" transform="rotate(48 112 866)"/><ellipse cx="10" cy="779" rx="6" ry="6" fill="#6a7a50" transform="rotate(169 10 779)"/><ellipse cx="34" cy="774" rx="4" ry="5" fill="#d8a878" transform="rotate(98 34 774)"/><ellipse cx="33" cy="779" rx="5" ry="3" fill="#6a7a50" transform="rotate(3 33 779)"/><ellipse cx="35" cy="882" rx="7" ry="6" fill="#d8a878" transform="rotate(35 35 882)"/><ellipse cx="48" cy="858" rx="4" ry="3" fill="#d8a878" transform="rotate(63 48 858)"/><ellipse cx="119" cy="788" rx="6" ry="7" fill="#d8a878" transform="rotate(57 119 788)"/><ellipse cx="85" cy="876" rx="6" ry="7" fill="#d8a878" transform="rotate(164 85 876)"/><ellipse cx="117" cy="800" rx="2" ry="1" fill="#a08060" transform="rotate(94 117 800)"/><ellipse cx="31" cy="772" rx="4" ry="3" fill="#e0b888" transform="rotate(142 31 772)"/><ellipse cx="93" cy="779" rx="3" ry="2" fill="#d8a878" transform="rotate(59 93 779)"/><ellipse cx="56" cy="775" rx="3" ry="2" fill="#e0b888" transform="rotate(120 56 775)"/><ellipse cx="31" cy="809" rx="2" ry="2" fill="#e0b888" transform="rotate(55 31 809)"/><ellipse cx="74" cy="874" rx="7" ry="8" fill="#d8a878" transform="rotate(15 74 874)"/><ellipse cx="124" cy="832" rx="3" ry="2" fill="#6a7a50" transform="rotate(54 124 832)"/><ellipse cx="13" cy="826" rx="4" ry="5" fill="#d8a878" transform="rotate(19 13 826)"/><ellipse cx="106" cy="845" rx="2" ry="2" fill="#6a7a50" transform="rotate(17 106 845)"/><ellipse cx="16" cy="888" rx="4" ry="3" fill="#d8a878" transform="rotate(160 16 888)"/><ellipse cx="86" cy="831" rx="2" ry="2" fill="#d8a878" transform="rotate(137 86 831)"/><ellipse cx="85" cy="862" rx="5" ry="4" fill="#6a7a50" transform="rotate(37 85 862)"/><ellipse cx="51" cy="876" rx="4" ry="2" fill="#6a7a50" transform="rotate(168 51 876)"/><ellipse cx="118" cy="790" rx="3" ry="3" fill="#d8a878" transform="rotate(115 118 790)"/><ellipse cx="28" cy="772" rx="4" ry="3" fill="#d8a878" transform="rotate(77 28 772)"/><ellipse cx="98" cy="839" rx="7" ry="6" fill="#d8a878" transform="rotate(3 98 839)"/><ellipse cx="47" cy="827" rx="2" ry="2" fill="#e0b888" transform="rotate(172 47 827)"/><ellipse cx="130" cy="844" rx="3" ry="4" fill="#d8a878" transform="rotate(79 130 844)"/><ellipse cx="131" cy="824" rx="3" ry="4" fill="#6a7a50" transform="rotate(8 131 824)"/><ellipse cx="53" cy="810" rx="5" ry="3" fill="#6a7a50" transform="rotate(41 53 810)"/><ellipse cx="31" cy="870" rx="3" ry="3" fill="#e0b888" transform="rotate(121 31 870)"/><ellipse cx="74" cy="855" rx="3" ry="2" fill="#d8a878" transform="rotate(70 74 855)"/><ellipse cx="126" cy="786" rx="3" ry="3" fill="#6a7a50" transform="rotate(14 126 786)"/><ellipse cx="22" cy="820" rx="2" ry="3" fill="#a08060" transform="rotate(64 22 820)"/><ellipse cx="116" cy="849" rx="6" ry="8" fill="#6a7a50" transform="rotate(104 116 849)"/><ellipse cx="12" cy="821" rx="6" ry="8" fill="#6a7a50" transform="rotate(18 12 821)"/><ellipse cx="38" cy="886" rx="6" ry="6" fill="#a08060" transform="rotate(76 38 886)"/><ellipse cx="106" cy="848" rx="5" ry="3" fill="#d8a878" transform="rotate(127 106 848)"/><ellipse cx="86" cy="840" rx="6" ry="7" fill="#d8a878" transform="rotate(111 86 840)"/><ellipse cx="10" cy="878" rx="5" ry="4" fill="#6a7a50" transform="rotate(164 10 878)"/><ellipse cx="31" cy="813" rx="5" ry="5" fill="#d8a878" transform="rotate(179 31 813)"/><ellipse cx="97" cy="844" rx="4" ry="5" fill="#d8a878" transform="rotate(113 97 844)"/><ellipse cx="62" cy="851" rx="6" ry="6" fill="#d8a878" transform="rotate(119 62 851)"/><ellipse cx="126" cy="864" rx="3" ry="3" fill="#d8a878" transform="rotate(138 126 864)"/><ellipse cx="54" cy="885" rx="7" ry="5" fill="#6a7a50" transform="rotate(97 54 885)"/><ellipse cx="87" cy="862" rx="3" ry="2" fill="#d8a878" transform="rotate(68 87 862)"/><ellipse cx="15" cy="905" rx="7" ry="8" fill="#9a6a40" transform="rotate(120 15 905)"/><ellipse cx="76" cy="927" rx="6" ry="5" fill="#5a4a48" transform="rotate(80 76 927)"/><ellipse cx="23" cy="903" rx="3" ry="3" fill="#9a6a40" transform="rotate(100 23 903)"/><ellipse cx="48" cy="928" rx="7" ry="8" fill="#9a6a40" transform="rotate(162 48 928)"/><ellipse cx="33" cy="909" rx="7" ry="6" fill="#a09a50" transform="rotate(166 33 909)"/><ellipse cx="34" cy="921" rx="6" ry="7" fill="#5a4a48" transform="rotate(11 34 921)"/><ellipse cx="26" cy="879" rx="6" ry="6" fill="#a09a50" transform="rotate(7 26 879)"/><ellipse cx="9" cy="878" rx="4" ry="4" fill="#9a6a40" transform="rotate(44 9 878)"/><ellipse cx="30" cy="892" rx="7" ry="8" fill="#9a6a40" transform="rotate(6 30 892)"/><ellipse cx="15" cy="927" rx="8" ry="6" fill="#a09a50" transform="rotate(18 15 927)"/><ellipse cx="68" cy="895" rx="5" ry="5" fill="#a09a50" transform="rotate(85 68 895)"/><ellipse cx="7" cy="882" rx="4" ry="3" fill="#5a4a48" transform="rotate(13 7 882)"/><ellipse cx="91" cy="892" rx="7" ry="8" fill="#a09a50" transform="rotate(128 91 892)"/><ellipse cx="64" cy="888" rx="8" ry="8" fill="#9a6a40" transform="rotate(39 64 888)"/><ellipse cx="110" cy="900" rx="4" ry="3" fill="#a09a50" transform="rotate(18 110 900)"/><ellipse cx="105" cy="883" rx="6" ry="4" fill="#5a4a48" transform="rotate(119 105 883)"/><ellipse cx="104" cy="890" rx="3" ry="4" fill="#5a4a48" transform="rotate(111 104 890)"/><ellipse cx="18" cy="888" rx="6" ry="4" fill="#5a4a48" transform="rotate(61 18 888)"/><ellipse cx="98" cy="904" rx="6" ry="5" fill="#9a6a40" transform="rotate(7 98 904)"/><ellipse cx="30" cy="879" rx="6" ry="4" fill="#5a4a48" transform="rotate(157 30 879)"/><ellipse cx="25" cy="888" rx="8" ry="10" fill="#a09a50" transform="rotate(33 25 888)"/><ellipse cx="21" cy="890" rx="7" ry="8" fill="#a09a50" transform="rotate(101 21 890)"/><ellipse cx="41" cy="916" rx="3" ry="3" fill="#9a6a40" transform="rotate(75 41 916)"/><ellipse cx="6" cy="905" rx="4" ry="5" fill="#9a6a40" transform="rotate(118 6 905)"/><ellipse cx="4" cy="895" rx="7" ry="8" fill="#a09a50" transform="rotate(175 4 895)"/><ellipse cx="94" cy="906" rx="7" ry="5" fill="#9a6a40" transform="rotate(159 94 906)"/><ellipse cx="51" cy="903" rx="4" ry="5" fill="#9a6a40" transform="rotate(115 51 903)"/><ellipse cx="42" cy="903" rx="7" ry="7" fill="#a09a50" transform="rotate(136 42 903)"/><ellipse cx="59" cy="926" rx="8" ry="8" fill="#9a6a40" transform="rotate(116 59 926)"/><ellipse cx="12" cy="926" rx="4" ry="4" fill="#5a4a48" transform="rotate(33 12 926)"/><ellipse cx="8" cy="1056" rx="2" ry="2" fill="#5a5a48" transform="rotate(111 8 1056)"/><ellipse cx="68" cy="947" rx="5" ry="6" fill="#3a4a2a" transform="rotate(8 68 947)"/><ellipse cx="38" cy="1073" rx="3" ry="2" fill="#3a4a2a" transform="rotate(80 38 1073)"/><ellipse cx="21" cy="1025" rx="6" ry="4" fill="#3a4a2a" transform="rotate(99 21 1025)"/><ellipse cx="100" cy="1004" rx="4" ry="3" fill="#4a6a38" transform="rotate(117 100 1004)"/><ellipse cx="127" cy="942" rx="3" ry="4" fill="#5a5a48" transform="rotate(121 127 942)"/><ellipse cx="30" cy="955" rx="6" ry="7" fill="#5a5a48" transform="rotate(51 30 955)"/><ellipse cx="96" cy="944" rx="3" ry="4" fill="#3a4a2a" transform="rotate(131 96 944)"/><ellipse cx="44" cy="968" rx="3" ry="3" fill="#3a4a2a" transform="rotate(157 44 968)"/><ellipse cx="42" cy="953" rx="6" ry="5" fill="#4a6a38" transform="rotate(168 42 953)"/><ellipse cx="55" cy="1084" rx="6" ry="6" fill="#3a4a2a" transform="rotate(65 55 1084)"/><ellipse cx="79" cy="1100" rx="7" ry="6" fill="#5a5a48" transform="rotate(68 79 1100)"/><ellipse cx="124" cy="979" rx="5" ry="4" fill="#4a6a38" transform="rotate(28 124 979)"/><ellipse cx="124" cy="921" rx="5" ry="6" fill="#6a7a60" transform="rotate(62 124 921)"/><ellipse cx="107" cy="1048" rx="2" ry="3" fill="#3a4a2a" transform="rotate(38 107 1048)"/><ellipse cx="107" cy="969" rx="5" ry="5" fill="#4a6a38" transform="rotate(34 107 969)"/><ellipse cx="31" cy="1062" rx="5" ry="3" fill="#3a4a2a" transform="rotate(81 31 1062)"/><ellipse cx="115" cy="946" rx="7" ry="8" fill="#262a22" transform="rotate(167 115 946)"/><ellipse cx="119" cy="1078" rx="6" ry="8" fill="#5a5a48" transform="rotate(120 119 1078)"/><ellipse cx="103" cy="1076" rx="6" ry="5" fill="#5a5a48" transform="rotate(92 103 1076)"/><ellipse cx="33" cy="938" rx="4" ry="2" fill="#3a4a2a" transform="rotate(58 33 938)"/><ellipse cx="48" cy="1042" rx="4" ry="3" fill="#262a22" transform="rotate(163 48 1042)"/><ellipse cx="53" cy="1080" rx="7" ry="6" fill="#6a7a60" transform="rotate(120 53 1080)"/><ellipse cx="42" cy="988" rx="6" ry="7" fill="#5a5a48" transform="rotate(146 42 988)"/><ellipse cx="120" cy="1039" rx="7" ry="9" fill="#3a4a2a" transform="rotate(123 120 1039)"/><ellipse cx="58" cy="920" rx="7" ry="5" fill="#4a6a38" transform="rotate(92 58 920)"/><ellipse cx="71" cy="1105" rx="5" ry="6" fill="#6a7a60" transform="rotate(8 71 1105)"/><ellipse cx="60" cy="1033" rx="2" ry="1" fill="#3a4a2a" transform="rotate(47 60 1033)"/><ellipse cx="69" cy="1084" rx="6" ry="5" fill="#4a6a38" transform="rotate(154 69 1084)"/><ellipse cx="105" cy="962" rx="6" ry="8" fill="#5a5a48" transform="rotate(40 105 962)"/><ellipse cx="50" cy="1061" rx="7" ry="5" fill="#4a6a38" transform="rotate(84 50 1061)"/><ellipse cx="68" cy="1114" rx="4" ry="5" fill="#3a4a2a" transform="rotate(171 68 1114)"/><ellipse cx="114" cy="1040" rx="4" ry="5" fill="#3a4a2a" transform="rotate(46 114 1040)"/><ellipse cx="2" cy="1049" rx="6" ry="4" fill="#6a7a60" transform="rotate(92 2 1049)"/><ellipse cx="7" cy="929" rx="5" ry="6" fill="#4a6a38" transform="rotate(130 7 929)"/><ellipse cx="61" cy="949" rx="3" ry="2" fill="#262a22" transform="rotate(7 61 949)"/><ellipse cx="56" cy="1040" rx="3" ry="3" fill="#5a5a48" transform="rotate(55 56 1040)"/><ellipse cx="67" cy="1013" rx="2" ry="1" fill="#5a5a48" transform="rotate(42 67 1013)"/><ellipse cx="98" cy="966" rx="3" ry="3" fill="#3a4a2a" transform="rotate(59 98 966)"/><ellipse cx="79" cy="1101" rx="3" ry="3" fill="#3a4a2a" transform="rotate(118 79 1101)"/><ellipse cx="93" cy="1062" rx="3" ry="4" fill="#262a22" transform="rotate(13 93 1062)"/><ellipse cx="64" cy="918" rx="6" ry="8" fill="#262a22" transform="rotate(173 64 918)"/><ellipse cx="54" cy="983" rx="3" ry="2" fill="#262a22" transform="rotate(86 54 983)"/><ellipse cx="53" cy="1064" rx="7" ry="5" fill="#5a5a48" transform="rotate(91 53 1064)"/><ellipse cx="81" cy="979" rx="3" ry="2" fill="#3a4a2a" transform="rotate(36 81 979)"/><ellipse cx="25" cy="982" rx="5" ry="3" fill="#262a22" transform="rotate(112 25 982)"/><ellipse cx="101" cy="1038" rx="4" ry="3" fill="#262a22" transform="rotate(50 101 1038)"/><ellipse cx="62" cy="1021" rx="5" ry="3" fill="#5a5a48" transform="rotate(179 62 1021)"/><ellipse cx="50" cy="932" rx="3" ry="3" fill="#5a5a48" transform="rotate(90 50 932)"/><ellipse cx="92" cy="1088" rx="5" ry="5" fill="#6a7a60" transform="rotate(140 92 1088)"/><ellipse cx="1" cy="1090" rx="6" ry="5" fill="#5a5a48" transform="rotate(110 1 1090)"/><ellipse cx="81" cy="950" rx="5" ry="6" fill="#3a4a2a" transform="rotate(175 81 950)"/><ellipse cx="19" cy="992" rx="6" ry="7" fill="#6a7a60" transform="rotate(146 19 992)"/><ellipse cx="89" cy="987" rx="7" ry="7" fill="#5a5a48" transform="rotate(166 89 987)"/><ellipse cx="24" cy="941" rx="6" ry="8" fill="#3a4a2a" transform="rotate(157 24 941)"/><ellipse cx="42" cy="1015" rx="4" ry="4" fill="#3a4a2a" transform="rotate(89 42 1015)"/><ellipse cx="72" cy="1078" rx="4" ry="5" fill="#3a4a2a" transform="rotate(85 72 1078)"/><ellipse cx="33" cy="1041" rx="5" ry="6" fill="#3a4a2a" transform="rotate(94 33 1041)"/><ellipse cx="105" cy="932" rx="6" ry="6" fill="#3a4a2a" transform="rotate(70 105 932)"/><ellipse cx="117" cy="976" rx="4" ry="6" fill="#5a5a48" transform="rotate(5 117 976)"/><ellipse cx="10" cy="960" rx="6" ry="4" fill="#4a6a38" transform="rotate(58 10 960)"/><ellipse cx="29" cy="1006" rx="3" ry="3" fill="#3a4a2a" transform="rotate(36 29 1006)"/><ellipse cx="72" cy="1104" rx="2" ry="3" fill="#5a5a48" transform="rotate(49 72 1104)"/><ellipse cx="5" cy="1018" rx="6" ry="5" fill="#3a4a2a" transform="rotate(152 5 1018)"/><ellipse cx="17" cy="979" rx="2" ry="2" fill="#3a4a2a" transform="rotate(5 17 979)"/><ellipse cx="43" cy="1058" rx="3" ry="3" fill="#3a4a2a" transform="rotate(46 43 1058)"/><ellipse cx="26" cy="990" rx="7" ry="5" fill="#3a4a2a" transform="rotate(111 26 990)"/><ellipse cx="43" cy="1001" rx="4" ry="4" fill="#3a4a2a" transform="rotate(172 43 1001)"/><ellipse cx="92" cy="953" rx="3" ry="2" fill="#5a5a48" transform="rotate(160 92 953)"/><ellipse cx="97" cy="930" rx="5" ry="5" fill="#3a4a2a" transform="rotate(112 97 930)"/><ellipse cx="72" cy="1097" rx="2" ry="2" fill="#3a4a2a" transform="rotate(153 72 1097)"/><ellipse cx="83" cy="1051" rx="5" ry="3" fill="#3a4a2a" transform="rotate(143 83 1051)"/><ellipse cx="68" cy="1018" rx="5" ry="4" fill="#3a4a2a" transform="rotate(128 68 1018)"/><ellipse cx="105" cy="1077" rx="5" ry="3" fill="#5a5a48" transform="rotate(106 105 1077)"/><ellipse cx="92" cy="956" rx="4" ry="4" fill="#5a5a48" transform="rotate(122 92 956)"/><ellipse cx="125" cy="1106" rx="5" ry="4" fill="#5a5a48" transform="rotate(48 125 1106)"/><ellipse cx="35" cy="1101" rx="6" ry="7" fill="#3a4a2a" transform="rotate(148 35 1101)"/><ellipse cx="90" cy="982" rx="6" ry="5" fill="#6a7a60" transform="rotate(86 90 982)"/><ellipse cx="21" cy="1091" rx="4" ry="4" fill="#3a4a2a" transform="rotate(125 21 1091)"/><ellipse cx="122" cy="1071" rx="3" ry="3" fill="#6a7a60" transform="rotate(106 122 1071)"/><ellipse cx="119" cy="1036" rx="4" ry="5" fill="#3a4a2a" transform="rotate(150 119 1036)"/><ellipse cx="102" cy="939" rx="3" ry="2" fill="#5a5a48" transform="rotate(113 102 939)"/><ellipse cx="116" cy="1082" rx="2" ry="2" fill="#5a5a48" transform="rotate(24 116 1082)"/><ellipse cx="5" cy="1087" rx="3" ry="2" fill="#4a6a38" transform="rotate(71 5 1087)"/><ellipse cx="102" cy="960" rx="5" ry="4" fill="#262a22" transform="rotate(109 102 960)"/><ellipse cx="101" cy="1058" rx="5" ry="4" fill="#5a5a48" transform="rotate(102 101 1058)"/><ellipse cx="90" cy="1059" rx="7" ry="4" fill="#3a4a2a" transform="rotate(173 90 1059)"/><ellipse cx="39" cy="1040" rx="6" ry="7" fill="#3a4a2a" transform="rotate(90 39 1040)"/><ellipse cx="83" cy="994" rx="3" ry="4" fill="#3a4a2a" transform="rotate(113 83 994)"/><ellipse cx="63" cy="936" rx="6" ry="8" fill="#3a4a2a" transform="rotate(55 63 936)"/><ellipse cx="61" cy="1013" rx="6" ry="6" fill="#5a5a48" transform="rotate(155 61 1013)"/><ellipse cx="24" cy="946" rx="6" ry="4" fill="#3a4a2a" transform="rotate(128 24 946)"/><ellipse cx="34" cy="951" rx="7" ry="5" fill="#4a6a38" transform="rotate(64 34 951)"/><ellipse cx="34" cy="930" rx="3" ry="4" fill="#4a6a38" transform="rotate(16 34 930)"/><ellipse cx="83" cy="1026" rx="6" ry="6" fill="#3a4a2a" transform="rotate(106 83 1026)"/><ellipse cx="120" cy="1081" rx="5" ry="6" fill="#4a6a38" transform="rotate(167 120 1081)"/><ellipse cx="61" cy="1084" rx="7" ry="8" fill="#3a4a2a" transform="rotate(133 61 1084)"/><ellipse cx="90" cy="1030" rx="4" ry="3" fill="#3a4a2a" transform="rotate(120 90 1030)"/><ellipse cx="62" cy="1107" rx="5" ry="3" fill="#262a22" transform="rotate(150 62 1107)"/><ellipse cx="43" cy="987" rx="2" ry="2" fill="#3a4a2a" transform="rotate(35 43 987)"/><ellipse cx="65" cy="975" rx="4" ry="4" fill="#3a4a2a" transform="rotate(80 65 975)"/><ellipse cx="101" cy="982" rx="4" ry="5" fill="#262a22" transform="rotate(161 101 982)"/><ellipse cx="48" cy="1075" rx="7" ry="7" fill="#262a22" transform="rotate(162 48 1075)"/><ellipse cx="26" cy="1112" rx="5" ry="4" fill="#4a6a38" transform="rotate(154 26 1112)"/><ellipse cx="25" cy="977" rx="6" ry="6" fill="#6a7a60" transform="rotate(16 25 977)"/><ellipse cx="55" cy="960" rx="2" ry="2" fill="#3a4a2a" transform="rotate(60 55 960)"/><ellipse cx="88" cy="1056" rx="7" ry="9" fill="#6a7a60" transform="rotate(170 88 1056)"/><ellipse cx="0" cy="928" rx="4" ry="5" fill="#5a5a48" transform="rotate(145 0 928)"/><ellipse cx="91" cy="1022" rx="4" ry="4" fill="#262a22" transform="rotate(46 91 1022)"/><ellipse cx="2" cy="959" rx="3" ry="3" fill="#3a4a2a" transform="rotate(53 2 959)"/><ellipse cx="122" cy="972" rx="6" ry="6" fill="#5a5a48" transform="rotate(172 122 972)"/><ellipse cx="127" cy="1000" rx="5" ry="4" fill="#5a5a48" transform="rotate(28 127 1000)"/><ellipse cx="109" cy="1098" rx="5" ry="4" fill="#3a4a2a" transform="rotate(6 109 1098)"/><ellipse cx="130" cy="1119" rx="5" ry="5" fill="#3a4a2a" transform="rotate(95 130 1119)"/><ellipse cx="95" cy="1029" rx="4" ry="5" fill="#4a6a38" transform="rotate(139 95 1029)"/><ellipse cx="19" cy="950" rx="3" ry="3" fill="#3a4a2a" transform="rotate(40 19 950)"/><ellipse cx="41" cy="1033" rx="2" ry="2" fill="#262a22" transform="rotate(139 41 1033)"/><ellipse cx="98" cy="1065" rx="3" ry="2" fill="#3a4a2a" transform="rotate(61 98 1065)"/><ellipse cx="117" cy="990" rx="6" ry="7" fill="#6a7a60" transform="rotate(99 117 990)"/><ellipse cx="56" cy="1014" rx="2" ry="3" fill="#3a4a2a" transform="rotate(115 56 1014)"/><ellipse cx="129" cy="966" rx="2" ry="3" fill="#4a6a38" transform="rotate(17 129 966)"/><ellipse cx="34" cy="1074" rx="6" ry="5" fill="#3a4a2a" transform="rotate(108 34 1074)"/><ellipse cx="99" cy="933" rx="6" ry="5" fill="#3a4a2a" transform="rotate(44 99 933)"/><ellipse cx="40" cy="984" rx="7" ry="7" fill="#5a5a48" transform="rotate(42 40 984)"/><ellipse cx="77" cy="1019" rx="7" ry="8" fill="#3a4a2a" transform="rotate(160 77 1019)"/><ellipse cx="104" cy="976" rx="2" ry="1" fill="#262a22" transform="rotate(48 104 976)"/><ellipse cx="67" cy="952" rx="5" ry="5" fill="#262a22" transform="rotate(23 67 952)"/><ellipse cx="31" cy="1012" rx="6" ry="6" fill="#3a4a2a" transform="rotate(50 31 1012)"/><ellipse cx="53" cy="1026" rx="3" ry="3" fill="#4a6a38" transform="rotate(68 53 1026)"/><ellipse cx="87" cy="985" rx="2" ry="2" fill="#5a5a48" transform="rotate(17 87 985)"/><ellipse cx="20" cy="932" rx="5" ry="6" fill="#3a4a2a" transform="rotate(97 20 932)"/><ellipse cx="66" cy="1017" rx="3" ry="3" fill="#262a22" transform="rotate(144 66 1017)"/><ellipse cx="106" cy="977" rx="7" ry="8" fill="#262a22" transform="rotate(32 106 977)"/><ellipse cx="19" cy="1016" rx="3" ry="3" fill="#3a4a2a" transform="rotate(148 19 1016)"/><ellipse cx="129" cy="1063" rx="6" ry="7" fill="#3a4a2a" transform="rotate(28 129 1063)"/><ellipse cx="105" cy="966" rx="3" ry="4" fill="#4a6a38" transform="rotate(89 105 966)"/><ellipse cx="22" cy="1086" rx="4" ry="5" fill="#3a4a2a" transform="rotate(112 22 1086)"/><ellipse cx="57" cy="919" rx="2" ry="3" fill="#4a6a38" transform="rotate(163 57 919)"/><ellipse cx="119" cy="1051" rx="3" ry="2" fill="#5a5a48" transform="rotate(23 119 1051)"/><ellipse cx="88" cy="919" rx="2" ry="2" fill="#4a6a38" transform="rotate(151 88 919)"/><ellipse cx="42" cy="1102" rx="6" ry="7" fill="#6a7a60" transform="rotate(113 42 1102)"/><ellipse cx="127" cy="1048" rx="7" ry="7" fill="#4a6a38" transform="rotate(79 127 1048)"/><ellipse cx="68" cy="1016" rx="4" ry="3" fill="#262a22" transform="rotate(143 68 1016)"/><ellipse cx="77" cy="963" rx="3" ry="3" fill="#262a22" transform="rotate(5 77 963)"/><ellipse cx="55" cy="1052" rx="3" ry="3" fill="#4a6a38" transform="rotate(30 55 1052)"/><ellipse cx="101" cy="1060" rx="6" ry="6" fill="#4a6a38" transform="rotate(180 101 1060)"/><ellipse cx="121" cy="1021" rx="4" ry="3" fill="#5a5a48" transform="rotate(8 121 1021)"/><ellipse cx="107" cy="1015" rx="6" ry="4" fill="#262a22" transform="rotate(91 107 1015)"/><ellipse cx="93" cy="1010" rx="2" ry="2" fill="#4a6a38" transform="rotate(59 93 1010)"/><ellipse cx="129" cy="1005" rx="6" ry="4" fill="#5a5a48" transform="rotate(177 129 1005)"/><ellipse cx="2" cy="1029" rx="4" ry="3" fill="#5a5a48" transform="rotate(155 2 1029)"/><ellipse cx="69" cy="1053" rx="7" ry="8" fill="#4a6a38" transform="rotate(87 69 1053)"/><ellipse cx="44" cy="940" rx="6" ry="7" fill="#262a22" transform="rotate(26 44 940)"/><ellipse cx="48" cy="973" rx="4" ry="5" fill="#5a5a48" transform="rotate(107 48 973)"/><ellipse cx="114" cy="1007" rx="4" ry="3" fill="#3a4a2a" transform="rotate(40 114 1007)"/><ellipse cx="46" cy="930" rx="5" ry="4" fill="#3a4a2a" transform="rotate(44 46 930)"/><ellipse cx="117" cy="1004" rx="3" ry="3" fill="#5a5a48" transform="rotate(130 117 1004)"/><ellipse cx="16" cy="1100" rx="4" ry="4" fill="#6a7a60" transform="rotate(65 16 1100)"/><ellipse cx="129" cy="997" rx="3" ry="3" fill="#5a5a48" transform="rotate(29 129 997)"/><ellipse cx="100" cy="985" rx="5" ry="6" fill="#4a6a38" transform="rotate(52 100 985)"/><ellipse cx="3" cy="1054" rx="5" ry="4" fill="#4a6a38" transform="rotate(61 3 1054)"/><ellipse cx="31" cy="1036" rx="5" ry="4" fill="#3a4a2a" transform="rotate(146 31 1036)"/><ellipse cx="43" cy="1048" rx="5" ry="5" fill="#3a4a2a" transform="rotate(60 43 1048)"/><ellipse cx="28" cy="981" rx="4" ry="3" fill="#4a6a38" transform="rotate(29 28 981)"/><ellipse cx="43" cy="999" rx="5" ry="5" fill="#5a5a48" transform="rotate(150 43 999)"/><ellipse cx="32" cy="1046" rx="5" ry="5" fill="#4a6a38" transform="rotate(68 32 1046)"/><ellipse cx="61" cy="1062" rx="4" ry="3" fill="#5a5a48" transform="rotate(118 61 1062)"/><ellipse cx="30" cy="1044" rx="6" ry="7" fill="#262a22" transform="rotate(99 30 1044)"/><ellipse cx="21" cy="1111" rx="7" ry="8" fill="#262a22" transform="rotate(23 21 1111)"/><ellipse cx="41" cy="1094" rx="5" ry="4" fill="#3a4a2a" transform="rotate(47 41 1094)"/><ellipse cx="48" cy="1005" rx="5" ry="4" fill="#5a5a48" transform="rotate(132 48 1005)"/><ellipse cx="48" cy="1062" rx="3" ry="2" fill="#3a4a2a" transform="rotate(95 48 1062)"/><ellipse cx="38" cy="1027" rx="3" ry="3" fill="#5a5a48" transform="rotate(154 38 1027)"/><ellipse cx="81" cy="1032" rx="3" ry="2" fill="#5a5a48" transform="rotate(29 81 1032)"/><ellipse cx="48" cy="1117" rx="5" ry="4" fill="#3a4a2a" transform="rotate(86 48 1117)"/><ellipse cx="21" cy="923" rx="6" ry="5" fill="#3a4a2a" transform="rotate(41 21 923)"/><ellipse cx="131" cy="958" rx="5" ry="4" fill="#4a6a38" transform="rotate(59 131 958)"/><ellipse cx="23" cy="1060" rx="3" ry="4" fill="#3a4a2a" transform="rotate(7 23 1060)"/><ellipse cx="49" cy="1097" rx="4" ry="3" fill="#3a4a2a" transform="rotate(127 49 1097)"/><ellipse cx="71" cy="1080" rx="5" ry="3" fill="#3a4a2a" transform="rotate(177 71 1080)"/><ellipse cx="24" cy="1082" rx="5" ry="5" fill="#3a4a2a" transform="rotate(168 24 1082)"/><ellipse cx="67" cy="981" rx="5" ry="3" fill="#262a22" transform="rotate(157 67 981)"/><ellipse cx="15" cy="973" rx="4" ry="3" fill="#6a7a60" transform="rotate(146 15 973)"/><ellipse cx="109" cy="1054" rx="6" ry="5" fill="#3a4a2a" transform="rotate(93 109 1054)"/><ellipse cx="65" cy="1029" rx="3" ry="2" fill="#3a4a2a" transform="rotate(20 65 1029)"/><ellipse cx="80" cy="925" rx="7" ry="9" fill="#3a4a2a" transform="rotate(68 80 925)"/><ellipse cx="106" cy="932" rx="7" ry="8" fill="#3a4a2a" transform="rotate(4 106 932)"/><ellipse cx="81" cy="964" rx="2" ry="3" fill="#262a22" transform="rotate(136 81 964)"/><ellipse cx="31" cy="955" rx="4" ry="4" fill="#6a7a60" transform="rotate(6 31 955)"/><ellipse cx="17" cy="993" rx="7" ry="4" fill="#3a4a2a" transform="rotate(12 17 993)"/><ellipse cx="21" cy="977" rx="3" ry="4" fill="#3a4a2a" transform="rotate(52 21 977)"/><ellipse cx="130" cy="1007" rx="6" ry="5" fill="#3a4a2a" transform="rotate(15 130 1007)"/><ellipse cx="96" cy="964" rx="2" ry="3" fill="#262a22" transform="rotate(123 96 964)"/><ellipse cx="80" cy="1092" rx="3" ry="3" fill="#262a22" transform="rotate(96 80 1092)"/><ellipse cx="103" cy="1010" rx="3" ry="4" fill="#4a6a38" transform="rotate(69 103 1010)"/><ellipse cx="98" cy="1086" rx="3" ry="4" fill="#5a5a48" transform="rotate(11 98 1086)"/><ellipse cx="29" cy="962" rx="7" ry="6" fill="#262a22" transform="rotate(89 29 962)"/><ellipse cx="66" cy="923" rx="6" ry="6" fill="#5a5a48" transform="rotate(102 66 923)"/><ellipse cx="27" cy="988" rx="6" ry="6" fill="#5a5a48" transform="rotate(40 27 988)"/><ellipse cx="69" cy="949" rx="7" ry="6" fill="#262a22" transform="rotate(53 69 949)"/><ellipse cx="103" cy="1122" rx="7" ry="6" fill="#5a6890" transform="rotate(24 103 1122)"/><ellipse cx="35" cy="1133" rx="4" ry="3" fill="#5a6890" transform="rotate(148 35 1133)"/><ellipse cx="110" cy="1131" rx="8" ry="9" fill="#8a6048" transform="rotate(65 110 1131)"/><ellipse cx="104" cy="1118" rx="6" ry="6" fill="#6a5a58" transform="rotate(179 104 1118)"/><ellipse cx="102" cy="1129" rx="8" ry="9" fill="#5a6890" transform="rotate(111 102 1129)"/><ellipse cx="107" cy="1139" rx="7" ry="9" fill="#6a5a58" transform="rotate(25 107 1139)"/><ellipse cx="20" cy="1120" rx="8" ry="7" fill="#5a6890" transform="rotate(111 20 1120)"/><ellipse cx="51" cy="1119" rx="4" ry="4" fill="#6a5a58" transform="rotate(41 51 1119)"/><ellipse cx="62" cy="1147" rx="6" ry="5" fill="#5a6890" transform="rotate(25 62 1147)"/><ellipse cx="2" cy="1175" rx="4" ry="3" fill="#5a6890" transform="rotate(165 2 1175)"/><ellipse cx="75" cy="1147" rx="4" ry="5" fill="#8a6048" transform="rotate(161 75 1147)"/><ellipse cx="95" cy="1124" rx="6" ry="7" fill="#8a6048" transform="rotate(26 95 1124)"/><ellipse cx="63" cy="1113" rx="7" ry="7" fill="#6a5a58" transform="rotate(64 63 1113)"/><ellipse cx="72" cy="1161" rx="4" ry="4" fill="#5a6890" transform="rotate(12 72 1161)"/><ellipse cx="26" cy="1123" rx="5" ry="5" fill="#8a6048" transform="rotate(125 26 1123)"/><ellipse cx="24" cy="1108" rx="9" ry="6" fill="#6a5a58" transform="rotate(105 24 1108)"/><ellipse cx="15" cy="1124" rx="3" ry="3" fill="#6a5a58" transform="rotate(115 15 1124)"/><ellipse cx="91" cy="1164" rx="9" ry="7" fill="#6a5a58" transform="rotate(80 91 1164)"/><ellipse cx="99" cy="1138" rx="9" ry="8" fill="#8a6048" transform="rotate(106 99 1138)"/><ellipse cx="10" cy="1176" rx="6" ry="6" fill="#8a6048" transform="rotate(149 10 1176)"/><ellipse cx="101" cy="1168" rx="6" ry="4" fill="#8a6048" transform="rotate(104 101 1168)"/><ellipse cx="28" cy="1112" rx="4" ry="5" fill="#6a5a58" transform="rotate(142 28 1112)"/><ellipse cx="67" cy="1117" rx="7" ry="9" fill="#8a6048" transform="rotate(2 67 1117)"/><ellipse cx="2" cy="1153" rx="7" ry="8" fill="#8a6048" transform="rotate(33 2 1153)"/><ellipse cx="115" cy="1139" rx="7" ry="9" fill="#6a5a58" transform="rotate(164 115 1139)"/><ellipse cx="51" cy="1108" rx="5" ry="4" fill="#5a6890" transform="rotate(83 51 1108)"/><ellipse cx="68" cy="1125" rx="3" ry="2" fill="#6a5a58" transform="rotate(73 68 1125)"/><ellipse cx="6" cy="1129" rx="8" ry="8" fill="#6a5a58" transform="rotate(29 6 1129)"/><ellipse cx="12" cy="1154" rx="9" ry="7" fill="#5a6890" transform="rotate(94 12 1154)"/><ellipse cx="92" cy="1152" rx="7" ry="8" fill="#6a5a58" transform="rotate(30 92 1152)"/><path d="M124 124 L112 294 L116 294 L127 124z" fill="#3a2a18"/><path d="M108 284 L100 544 L118 544 L122 284z" fill="#4a2a18"/><path d="M96 294 L112 544" stroke="#3a2416" stroke-width="6"/><path d="M131 134 L108 244" stroke="#3a2a18" stroke-width="3"/><path d="M68 34 L78 254" stroke="#4a3420" stroke-width="2.5"/><path d="M50 294 L58 454" stroke="#3a2a18" stroke-width="3"/><path d="M20 414 L24 484" stroke="#4a2a18" stroke-width="5"/><ellipse cx="25" cy="224" rx="35" ry="60" fill="#d09028" opacity=".8"/><path d="M50 144 C70 224 95 284 112 384" stroke="#4a2a18" stroke-width="7" fill="none"/><path d="M131 244 L110 304" stroke="#4a2a18" stroke-width="4"/><path d="M0 169 L131 222" stroke="#d8d6cc" stroke-width="1.3" opacity=".8"/><path d="M0 183 L131 236" stroke="#d8d6cc" stroke-width="1.3" opacity=".8"/><path d="M0 209 L131 262" stroke="#d8d6cc" stroke-width="1.3" opacity=".8"/><path d="M0 221 L131 274" stroke="#d8d6cc" stroke-width="1.3" opacity=".8"/><rect x="120" y="364" width="11" height="120" fill="#e8e4d8" opacity=".7"/><path d="M60 524 C70 484 100 469 131 474 L131 554 C110 564 80 559 60 524z" fill="#8a3c48" opacity=".7"/><rect x="0" y="586" width="22" height="130" fill="#6a3420"/><rect x="22" y="586" width="38" height="110" fill="#b08a68"/><rect x="28" y="624" width="30" height="5" fill="#8a6a50"/><rect x="28" y="639" width="30" height="4" fill="#8a6a50"/><rect x="58" y="589" width="50" height="110" fill="#d8d4cc"/><rect x="106" y="582" width="18" height="140" fill="#5a2a18"/><rect x="122" y="594" width="9" height="120" fill="#a06848"/><rect x="24" y="606" width="7" height="120" fill="#c0a070" opacity=".8"/><ellipse cx="92" cy="584" rx="6" ry="4" fill="#c87028"/><ellipse cx="125" cy="587" rx="4" ry="4" fill="#e0a040"/><ellipse cx="117" cy="587" rx="5" ry="4" fill="#d08030"/><ellipse cx="97" cy="594" rx="4" ry="5" fill="#d08030"/><ellipse cx="86" cy="597" rx="4" ry="3" fill="#e0a040"/><ellipse cx="64" cy="580" rx="4" ry="5" fill="#d08030"/><ellipse cx="95" cy="588" rx="3" ry="4" fill="#c87028"/><ellipse cx="124" cy="588" rx="5" ry="3" fill="#d08030"/><ellipse cx="83" cy="590" rx="5" ry="5" fill="#c87028"/><ellipse cx="60" cy="589" rx="3" ry="3" fill="#d08030"/><ellipse cx="102" cy="599" rx="5" ry="4" fill="#d08030"/><ellipse cx="61" cy="599" rx="4" ry="4" fill="#d08030"/><ellipse cx="75" cy="603" rx="5" ry="5" fill="#e0a040"/><ellipse cx="127" cy="587" rx="5" ry="5" fill="#d08030"/><ellipse cx="85" cy="592" rx="4" ry="5" fill="#c87028"/><ellipse cx="105" cy="584" rx="5" ry="3" fill="#c87028"/><ellipse cx="97" cy="584" rx="4" ry="4" fill="#d08030"/><ellipse cx="58" cy="590" rx="4" ry="4" fill="#c87028"/><ellipse cx="91" cy="590" rx="5" ry="4" fill="#c87028"/><ellipse cx="124" cy="590" rx="5" ry="4" fill="#d08030"/><ellipse cx="130" cy="602" rx="4" ry="5" fill="#e0a040"/><ellipse cx="115" cy="580" rx="5" ry="3" fill="#e0a040"/><ellipse cx="51" cy="583" rx="5" ry="4" fill="#e0a040"/><ellipse cx="100" cy="581" rx="4" ry="4" fill="#d08030"/><ellipse cx="74" cy="598" rx="4" ry="4" fill="#e0a040"/><ellipse cx="25" cy="759" rx="30" ry="28" fill="#4a7048" opacity=".85"/><ellipse cx="70" cy="724" rx="5" ry="7" fill="#3a3a1e"/><ellipse cx="85" cy="754" rx="5" ry="7" fill="#3a3a1e"/><ellipse cx="60" cy="744" rx="5" ry="7" fill="#3a3a1e"/><ellipse cx="95" cy="704" rx="5" ry="7" fill="#3a3a1e"/><ellipse cx="110" cy="719" rx="5" ry="7" fill="#3a3a1e"/><ellipse cx="30" cy="974" rx="40" ry="60" fill="#3a3830" opacity=".7"/><ellipse cx="95" cy="1004" rx="45" ry="70" fill="#2e4a20" opacity=".6"/><path d="M15 956 q20 -6 40 -4 M60 959 q20 -10 40 -16 M75 932 q20 -2 40 -4" stroke="#8e8a44" stroke-width="4" fill="none" opacity=".85"/><path d="M30 1074 L90 1024 M50 1084 L110 1014" stroke="#6a6a5a" stroke-width="3" fill="none"/><path d="M0 1116 C40 1099 90 1064 131 1039 L131 1174 L0 1174z" fill="#7a5e50" opacity=".9"/><path d="M0 1136 C40 1116 80 1094 131 1072" stroke="#a06038" stroke-width="6" fill="none" opacity=".8"/><path d="M25 1174 C60 1146 95 1116 131 1086 L131 1174z" fill="#5a6890"/><path d="M0 1154 C20 1146 40 1139 60 1129" stroke="#8a6050" stroke-width="8" fill="none" opacity=".7"/><path d="M92 1174 L131 1142 L131 1174z" fill="#d0d4d8"/><path d="M0 1174 L0 1159 C10 1162 20 1169 30 1174z" fill="#6a5a58"/></g></svg>
<!-- canvas scrollbars -->
<div class="a" style="left:126px;top:1350px;width:1870px;height:28px;background:#3c3c3c"></div>
<div class="a" style="left:126px;top:1351px;width:25px;height:25px;background:#444;border:1px solid #525252"></div>
<svg style="left:126px;top:1350px" width="30" height="28"><path d="M8 14l8-8v16z" fill="#999"/></svg>
<div class="a" style="left:718px;top:1366px;width:687px;height:11px;background:#434343;border:1px solid #555;border-top:0"></div>
<div class="a" style="left:1996px;top:176px;width:28px;height:1174px;background:#3a3a3a"></div>
<div class="a" style="left:1997px;top:176px;width:26px;height:25px;background:#444;border:1px solid #525252"></div>
<div class="a" style="left:1997px;top:1323px;width:26px;height:25px;background:#444;border:1px solid #525252"></div>
<div class="a" style="left:1997px;top:562px;width:26px;height:399px;background:#434343;border:1px solid #555"></div>
<svg style="left:1996px;top:176px" width="28" height="1174"><path d="M6 16l8-8 8 8z M6 1157l8 8 8-8z" fill="#999"/></svg>
<svg style="left:2028px;top:760px" width="8" height="40"><g fill="#9a9a9a"><rect x="2" y="4" width="3" height="3"/><rect x="2" y="11" width="3" height="3"/><rect x="2" y="18" width="3" height="3"/><rect x="2" y="25" width="3" height="3"/><rect x="2" y="32" width="3" height="3"/></g></svg>
<!-- ============ STATUS BAR ============ -->
<div class="a" style="left:0;top:1438px;width:2560px;height:2px;background:#151515"></div>
<svg style="left:0;top:1380px" width="2560" height="58">
 <rect x="14.5" y="12.5" width="29" height="29" fill="none" stroke="#d0d0d0" stroke-width="2"/>
 <circle cx="29" cy="27" r="8.5" fill="none" stroke="#d0d0d0" stroke-width="2" stroke-dasharray="1.5 3"/>
 <circle cx="1906" cy="30" r="22" fill="#2e2e2e" stroke="#3a3a3a"/>
 <path d="M1884 30h44 M1906 8v44" stroke="#777" stroke-width="1.5" stroke-dasharray="4 3"/>
 <path d="M1906 30h22" stroke="#eee" stroke-width="2"/><circle cx="1906" cy="30" r="3" fill="#fff"/>
 <rect x="2345" y="25" width="162" height="9" rx="4.5" fill="#363636" stroke="#303030"/>
 <rect x="2346" y="26" width="46" height="7" rx="3.5" fill="#6a92bc"/>
 <rect x="2385.5" y="17.5" width="22" height="26" rx="5" fill="#505050" stroke="#383838" stroke-width="2"/>
 <rect x="2511.5" y="7.5" width="44" height="43" rx="6" fill="#474747" stroke="#363636" stroke-width="2"/>
 <rect x="2522" y="14" width="21" height="30" fill="none" stroke="#e0e0e0" stroke-width="2.5"/>
 <rect x="2528" y="24" width="10" height="10" fill="#e0e0e0"/><rect x="2531" y="27" width="4" height="4" fill="#474747"/>
</svg>
<div class="t" style="left:75px;top:1399px;font-size:25px">b) Basic-5 Size</div>
<div class="t" style="left:444px;top:1398px;font-size:25.6px">RGB/Alpha (8-bit inte...B-elle-V2-srgbtrc.icc</div>
<div class="a" style="left:1559px;top:1386px;width:309px;height:45px;background:#444;border:1px solid #3a3a3a"></div>
<div class="a" style="left:1562px;top:1393px;width:2px;height:34px;background:#5a7fa6"></div>
<div class="t" style="left:1566px;top:1398px;font-size:25.6px">3,840 <span style="text-decoration:underline;text-decoration-thickness:2px">x</span> 2,880 (120.7 MiB)</div>
<div class="t" style="left:1996px;top:1398px;font-size:26px">0.00°</div>
<div class="t" style="left:2236px;top:1398px;font-size:26px">40.8%</div>
<!-- ============ SCRIPTER ============ -->
<div class="a" style="left:409px;top:40px;width:1587px;height:1327px;background:#474747;border-left:2px solid #3a414b;border-right:2px solid #3b4554;border-bottom:3px solid #3c4450"></div>
<div class="a" style="left:409px;top:40px;width:1587px;height:52px;background:#1c3a5e"></div>
<div class="a" style="left:425px;top:56px;width:22px;height:22px;border-radius:50%;background:radial-gradient(circle,rgba(255,255,255,.35),rgba(255,255,255,0) 70%),conic-gradient(from 0deg,#ff20ff,#ffa0a0 50deg,#ffe040 110deg,#80ff80 165deg,#20f0ff 215deg,#8a90ff 280deg,#ff20ff 360deg)"></div>
<svg style="left:420px;top:50px" width="40" height="36"><path d="M5 7L17 17" stroke="#3a3a44" stroke-width="4" stroke-linecap="round"/><ellipse cx="21" cy="21" rx="2" ry="3" fill="#111" transform="rotate(-30 21 21)"/><rect x="19" y="6" width="8" height="8" fill="#1c3a5e" transform="rotate(45 23 10)"/><path d="M23 6v8M19 10h8" stroke="#fff" stroke-width="2"/></svg>
<div class="t" style="left:455px;top:58px;font-size:21px;color:#fff">Scripter - Krita</div>
<svg style="left:1950px;top:50px" width="30" height="30"><path d="M9 9.5L23.8 23.5M23.8 9.5L9 23.5" stroke="#fff" stroke-width="1.5"/></svg>
<div class="t" style="left:452px;top:122px;font-size:25px"><span class="u">F</span>ile</div>
<div class="a" style="left:432px;top:153px;width:1540px;height:2px;background:#3c3c3c"></div>
<svg style="left:440px;top:175px" width="200" height="60">
 <g fill="none" stroke="#fff" stroke-width="2.5">
  <path d="M12.5 8.5h40v36l-10 10.5h-30z"/>
  <path d="M21 38a13 13 0 0 1 3-20" stroke-width="2.2"/>
  <path d="M28 15a13 13 0 0 1 17 10" stroke-width="2.2"/>
  <path d="M45 34a13 13 0 0 1-18 9" stroke-width="2.2"/>
  <path d="M81.5 8.5v46l34-23z" stroke-width="3"/>
 </g>
 <path d="M42.5 55l10-10.5h-10z" fill="#fff"/>
 <path d="M25 14l6-3-2 7z M47 38l-2 6-5-4z" fill="#fff"/>
 <path d="M163 7a5 5 0 0 0-5 5c-5 2-8 7-8 14v6c0 9 6 14 13 14 3 0 5-1 7-2a11 11 0 0 1 7-13v-5c0-8-3-13-9-15a5 5 0 0 0-5-4z" fill="#fff"/>
 <path d="M155 23c4 2 12 2 16 0 M163 23v10" stroke="#474747" stroke-width="1.6" fill="none"/>
 <g fill="none" stroke="#fff" stroke-width="2.2" stroke-linecap="round">
  <path d="M144 11c2 5 6 8 11 9"/><path d="M182 11c-2 5-6 8-11 9"/>
  <path d="M140 33c2-3 5-5 9-6"/><path d="M186 33c-2-3-5-5-9-6"/>
  <path d="M145 49c1-3 3-5 7-7"/>
 </g>
 <circle cx="177.5" cy="43" r="10" fill="#474747" stroke="#fff" stroke-width="1.3"/>
 <circle cx="177.5" cy="43" r="5.5" fill="none" stroke="#fff" stroke-width="1.1"/>
 <path d="M177.5 31v24M165.5 43h24" stroke="#fff" stroke-width="1.1"/>
</svg>
<!-- editor -->
<div class="a" style="left:432px;top:258px;width:1541px;height:648px;background:#464646;border:1px solid #3a3a3a"></div>
<div class="a" style="left:474px;top:260px;width:54px;height:645px;background:#d4d4d4"></div>
<div class="a" style="left:528px;top:260px;width:1416px;height:645px;background:#fff"></div>
<div class="a" style="left:1945px;top:260px;width:27px;height:645px;background:#3c3c3c"></div>
<div class="a" style="left:1946px;top:260px;width:26px;height:25px;background:#444;border:1px solid #555"></div>
<div class="a" style="left:1946px;top:293px;width:26px;height:52px;background:#444;border:1px solid #555"></div>
<div class="a" style="left:1946px;top:851px;width:26px;height:25px;background:#444;border:1px solid #555"></div>
<svg style="left:1945px;top:260px" width="27" height="645"><path d="M5 16l8-8 8 8z M5 600l8 8 8-8z" fill="#999"/></svg>
<div style="font-size:26px;color:#000">
<div class="t" style="left:474px;width:48px;text-align:right;top:264px">4</div>
<div class="t" style="left:474px;width:48px;text-align:right;top:296px">5</div>
<div class="t" style="left:474px;width:48px;text-align:right;top:328px">6</div>
<div class="t" style="left:474px;width:48px;text-align:right;top:360px">7</div>
<div class="t" style="left:474px;width:48px;text-align:right;top:392px">8</div>
<div class="t" style="left:474px;width:48px;text-align:right;top:424px">9</div>
<div class="t" style="left:474px;width:48px;text-align:right;top:456px">10</div>
<div class="t" style="left:474px;width:48px;text-align:right;top:488px">11</div>
<div class="t" style="left:474px;width:48px;text-align:right;top:520px">12</div>
<div class="t" style="left:474px;width:48px;text-align:right;top:552px">13</div>
<div class="t" style="left:474px;width:48px;text-align:right;top:584px">14</div>
<div class="t" style="left:474px;width:48px;text-align:right;top:616px">15</div>
<div class="t" style="left:474px;width:48px;text-align:right;top:648px">16</div>
<div class="t" style="left:474px;width:48px;text-align:right;top:680px">17</div>
<div class="t" style="left:474px;width:48px;text-align:right;top:712px">18</div>
<div class="t" style="left:474px;width:48px;text-align:right;top:744px">19</div>
<div class="t" style="left:474px;width:48px;text-align:right;top:776px">20</div>
<div class="t" style="left:474px;width:48px;text-align:right;top:808px">21</div>
<div class="t" style="left:474px;width:48px;text-align:right;top:840px">22</div>
<div class="t" style="left:474px;width:48px;text-align:right;top:872px">23</div>
<div class="t" style="left:540px;top:264px"><i style="color:#006400"># By Wolthera(originally)</i></div>
<div class="t" style="left:540px;top:328px;transform:scaleX(0.975);transform-origin:0 0"><i style="color:#006400"># SPDX-License-Identifier: CC0-</i><span style="color:#8b1a1a">1.0</span></div>
<div class="t" style="left:540px;top:392px;transform:scaleX(0.98);transform-origin:0 0"><i style="color:#006400"># @package palette_docker</i></div>
<div class="t" style="left:538px;top:488px"><i style="color:#006400"># Importing the relevant dependencies:</i></div>
<div class="t" style="left:536px;top:520px;transform:scaleX(0.99);transform-origin:0 0"><span style="color:#12ecf2">from</span> PyQt5.QtWidgets <span style="color:#12ecf2">import</span><span style="color:#8a8a8a"> (</span></div>
<div class="t" style="left:568px;top:552px;transform:scaleX(0.956);transform-origin:0 0">QWidget,</div><div class="t" style="left:682px;top:552px;transform:scaleX(0.956);transform-origin:0 0">QVBoxLayout,</div><div class="t" style="left:845px;top:552px;transform:scaleX(0.956);transform-origin:0 0">QHBoxLayout,</div><div class="t" style="left:1010px;top:552px;transform:scaleX(0.956);transform-origin:0 0">QComboBox,</div><div class="t" style="left:1163px;top:552px;transform:scaleX(0.956);transform-origin:0 0">QAction,</div><div class="t" style="left:1267px;top:552px;transform:scaleX(1.02);transform-origin:0 0">QTabWidget,</div>
<div class="t" style="left:568px;top:584px;transform:scaleX(0.953);transform-origin:0 0">QLineEdit,</div><div class="t" style="left:691px;top:584px;transform:scaleX(0.953);transform-origin:0 0">QSpinBox,</div><div class="t" style="left:815px;top:584px;transform:scaleX(0.953);transform-origin:0 0">QDialogButtonBox,</div><div class="t" style="left:1030px;top:584px;transform:scaleX(0.953);transform-origin:0 0">QToolButton,</div><div class="t" style="left:1186px;top:584px;transform:scaleX(0.953);transform-origin:0 0">QDialog,</div>
<div class="t" style="left:568px;top:616px;transform:scaleX(0.974);transform-origin:0 0">QPlainTextEdit,</div><div class="t" style="left:748px;top:616px;transform:scaleX(0.974);transform-origin:0 0">QCompleter,</div><div class="t" style="left:901px;top:616px;transform:scaleX(1.08);transform-origin:0 0">QMenu<span style="color:#8a8a8a">)</span></div>
<div class="t" style="left:536px;top:648px;transform:scaleX(0.994);transform-origin:0 0"><span style="color:#12ecf2">from</span> PyQt5.Qt <span style="color:#12ecf2">import</span> Qt, pyqtSlot</div>
<div class="t" style="left:536px;top:680px"><span style="color:#12ecf2">from</span> krita</div><div class="t" style="left:656px;top:680px;color:#12ecf2">import</div><div class="t" style="left:739px;top:680px;transform:scaleX(0.971);transform-origin:0 0">DockWidget, Palette, PaletteView</div>
<div class="t" style="left:539px;top:744px;transform:scaleX(1.026);transform-origin:0 0"><i style="color:#006400"># import the exporters</i></div>
<div class="t" style="left:536px;top:776px;color:#12ecf2">from</div><div class="t" style="left:599px;top:776px">.</div><div class="t" style="left:614px;top:776px"><span style="color:#12ecf2">import</span><span style="color:#8a8a8a"> (</span></div>
<div class="t" style="left:568px;top:808px;transform:scaleX(0.993);transform-origin:0 0">palette_exporter_gimppalette,</div>
<div class="t" style="left:568px;top:840px;transform:scaleX(0.963);transform-origin:0 0">palette_exporter_inkscapeSVG,</div>
<div class="t" style="left:568px;top:872px;transform:scaleX(0.978);transform-origin:0 0">palette_sortColors,</div>
</div>
<svg style="left:1185px;top:908px" width="46" height="8"><g fill="#8a8a8a"><rect x="2" y="2" width="4" height="3"/><rect x="8" y="2" width="4" height="3"/><rect x="14" y="2" width="4" height="3"/><rect x="20" y="2" width="4" height="3"/><rect x="26" y="2" width="4" height="3"/><rect x="32" y="2" width="4" height="3"/></g></svg>
<!-- tabs -->
<div class="a" style="left:433px;top:967px;width:1539px;height:329px;background:#444;border:2px solid #575757;border-radius:0 3px 3px 3px;box-shadow:0 0 0 1px #393939"></div>
<div class="a" style="left:434px;top:922px;width:122px;height:46px;background:#3e3e3e;border:2px solid #575757;border-bottom:0;border-radius:6px 6px 0 0"></div>
<div class="a" style="left:557px;top:918px;width:155px;height:52px;background:#454545;border:2px solid #575757;border-bottom:0;border-radius:6px 6px 0 0"></div>
<div class="t" style="left:456px;top:935px;font-size:25.5px"><span class="u">O</span>utput</div>
<div class="t" style="left:581px;top:931px;font-size:24.5px"><span class="u">D</span>ebugger</div>
<svg style="left:460px;top:1000px" width="140" height="60">
 <circle cx="34" cy="28" r="24" fill="#a0a0a0"/><rect x="22" y="16" width="24" height="24" fill="#e8e8e8"/>
 <g fill="#3d3d3d"><rect x="96" y="12" width="28" height="5"/><rect x="96" y="22" width="28" height="5"/><rect x="96" y="32" width="28" height="5"/><rect x="96" y="40" width="28" height="5"/><path d="M88 12a14 14 0 0 0 0 30v-6a8 8 0 0 1 0-18z"/></g>
</svg>
<div class="a" style="left:455px;top:1082px;width:1496px;height:195px;background:#373737;border:1px solid #3e3e3e"></div>
<div class="a" style="left:456px;top:1083px;width:1494px;height:38px;background:#474747"></div>
<div class="a" style="left:456px;top:1083px;width:800px;height:38px;background:linear-gradient(#4a4a4a,#444);border-bottom:1px solid #3a3a3a"></div>
<div class="a" style="left:652px;top:1083px;width:2px;height:38px;background:#575757"></div>
<div class="a" style="left:852px;top:1083px;width:2px;height:38px;background:#575757"></div>
<div class="a" style="left:1052px;top:1083px;width:2px;height:38px;background:#575757"></div>
<div class="a" style="left:1256px;top:1083px;width:2px;height:38px;background:#575757"></div>
<div class="t" style="left:521px;top:1091px;font-size:24.3px">Scope</div>
<div class="t" style="left:723px;top:1091px;font-size:24.3px">Name</div>
<div class="t" style="left:923px;top:1091px;font-size:24.3px">Value</div>
<div class="t" style="left:1128px;top:1091px;font-size:24.3px">Type</div>
<div class="t" style="left:432px;top:1316px;font-size:26.3px">C:/dev/krita/plugins/python/palette_docker/palette_docker.py</div>
<svg style="left:1970px;top:1340px" width="28" height="28"><g fill="#b8b8b8"><rect x="19" y="2" width="4" height="4"/><rect x="13" y="8" width="4" height="4"/><rect x="19" y="8" width="4" height="4"/><rect x="7" y="14" width="4" height="4"/><rect x="13" y="14" width="4" height="4"/><rect x="19" y="14" width="4" height="4"/><rect x="1" y="20" width="4" height="4"/><rect x="7" y="20" width="4" height="4"/><rect x="13" y="20" width="4" height="4"/><rect x="19" y="20" width="4" height="4"/></g></svg>

<!-- ============ RIGHT DOCKS ============ -->
<div class="a" style="left:2024px;top:170px;width:536px;height:1208px;background:#474747"></div>
<div class="a" style="left:2352px;top:224px;width:208px;height:2px;background:#555"></div>
<div class="a" style="left:2354px;top:182px;width:184px;height:44px;background:#3f3f3f;border:2px solid #555;border-bottom:0;border-radius:6px 6px 0 0"></div>
<div class="a" style="left:2037px;top:178px;width:316px;height:50px;background:#474747;border:2px solid #5a5a5a;border-bottom:0;border-radius:6px 6px 0 0"></div>
<div class="t" style="left:2060px;top:192px;font-size:24.3px">Advanced Color Selector</div>
<div class="t" style="left:2375px;top:193px;font-size:25.5px">Tool Options</div>
<svg style="left:2045px;top:229px" width="34" height="34"><circle cx="17" cy="17" r="15" fill="none" stroke="#d6d6d6" stroke-width="2"/><rect x="9" y="16" width="16" height="10" fill="#d6d6d6"/><path d="M14 16v-4a5 5 0 0 1 10 0" fill="none" stroke="#d6d6d6" stroke-width="2.2"/></svg>
<div class="t" style="left:2088px;top:236px;font-size:24.3px">Advanced Color Selector</div>
<svg style="left:2470px;top:229px" width="90" height="34"><g fill="none" stroke="#d6d6d6" stroke-width="2.4"><rect x="7.2" y="14.2" width="16" height="15.5"/><path d="M18.2 14.2V3.2H33.8V19H23.2"/><path d="M57 8l19 19M76 8l-19 19" stroke-width="2.6"/></g></svg>
<svg style="left:2040px;top:266px" width="520" height="200">
 <defs>
  <linearGradient id="tri1" x1="0" y1="0" x2="0" y2="1"><stop offset="0" stop-color="#172433"/><stop offset="1" stop-color="#3070c0" stop-opacity="0"/></linearGradient>
  <linearGradient id="tri2" x1="0" y1="0" x2="1" y2="0"><stop offset="0" stop-color="#e0ecff"/><stop offset="1" stop-color="#0a5ed8"/></linearGradient>
  <linearGradient id="sl1" x1="0" x2="1"><stop offset="0" stop-color="#173530"/><stop offset=".5" stop-color="#1a2430"/><stop offset="1" stop-color="#1c1835"/></linearGradient>
  <linearGradient id="sl2" x1="0" x2="1"><stop offset="0" stop-color="#000"/><stop offset=".33" stop-color="#000"/><stop offset=".5" stop-color="#15243a"/><stop offset="1" stop-color="#0a58c8"/></linearGradient>
  <linearGradient id="sl3" x1="0" x2="1"><stop offset="0" stop-color="#000"/><stop offset=".33" stop-color="#000"/><stop offset=".5" stop-color="#18243a"/><stop offset=".7" stop-color="#606a78"/><stop offset="1" stop-color="#b4b4b4"/></linearGradient>
 </defs>
 <g fill="none" stroke="#d6d6d6" stroke-width="2.5"><rect x="5" y="7" width="30" height="30"/></g>
 <rect x="4" y="6" width="32" height="5" fill="#d6d6d6"/>
 <rect x="10" y="16" width="4" height="16" fill="#d6d6d6"/>
 <g fill="#d6d6d6"><rect x="18" y="16" width="12" height="2.5"/><rect x="18" y="22.5" width="12" height="2.5"/><rect x="18" y="29" width="12" height="2.5"/></g>
 <rect x="478" y="0" width="32" height="32" fill="#172433"/>
 <rect x="-2" y="96" width="480" height="20" fill="url(#sl1)"/>
 <rect x="-2" y="118" width="480" height="20" fill="url(#sl2)"/>
 <rect x="-2" y="140" width="480" height="20" fill="url(#sl3)"/>
 <g fill="#172433" stroke="#5a5a5a" stroke-width="2"><rect x="230" y="97" width="17" height="18"/><rect x="230" y="119" width="17" height="18"/><rect x="230" y="141" width="17" height="18"/></g>
 <g fill="none" stroke="#d8d8d8" stroke-width="2"><path d="M228 96v20 M248 96v20 M228 118v20 M248 118v20 M228 140v20 M248 140v20"/></g>
 <g fill="#575757"><rect x="-2" y="116" width="480" height="2"/><rect x="-2" y="138" width="480" height="2"/></g>
 <rect x="-1" y="167" width="30" height="30" rx="4" fill="#3e3e3e" stroke="#333" stroke-width="1.5"/>
 <g fill="none" stroke="#d6d6d6" stroke-width="3.5"><path d="M6 186a10 10 0 0 1 15-13 M23 178a10 10 0 0 1-15 13"/></g>
 <path d="M19 169l4 6-6 1z M9 195l-4-6 6-1z" fill="#d6d6d6"/>
 <circle cx="498" cy="180" r="11" fill="none" stroke="#d6d6d6" stroke-width="2.5"/><path d="M490 172l16 16" stroke="#d6d6d6" stroke-width="2.5"/>
 <g fill="#8a8a8a"><rect x="244" y="204" width="4" height="3"/><rect x="250" y="204" width="4" height="3"/><rect x="256" y="204" width="4" height="3"/><rect x="262" y="204" width="4" height="3"/><rect x="268" y="204" width="4" height="3"/><rect x="274" y="204" width="4" height="3"/></g>
</svg>
<div class="a" style="left:2233px;top:269px;width:89px;height:89px;border-radius:50%;background:conic-gradient(from 0deg,#00ff00,#00ffff 90deg,#0000ff 150deg,#ff00ff 210deg,#ff0000 270deg,#ffff00 330deg,#00ff00);-webkit-mask:radial-gradient(circle,transparent 36px,#000 37px,#000 44px,transparent 45px);mask:radial-gradient(circle,transparent 36px,#000 37px,#000 44px,transparent 45px)"></div>
<svg style="left:2240px;top:276px" width="80" height="70">
 <defs><linearGradient id="t2" x1="0" y1="0" x2="1" y2="0"><stop offset="0" stop-color="#e8f0ff"/><stop offset="1" stop-color="#0a5ed8"/></linearGradient>
 <linearGradient id="t1" x1="0" y1="0" x2="0" y2="1"><stop offset="0" stop-color="#10141c"/><stop offset=".7" stop-color="#10141c" stop-opacity="0"/></linearGradient></defs>
 <path d="M36 7 L9 54 L70 54 z" fill="url(#t2)"/>
 <path d="M36 7 L9 54 L70 54 z" fill="url(#t1)"/>
 <circle cx="36" cy="8" r="9" fill="none" stroke="#000" stroke-width="4"/><circle cx="36" cy="8" r="8" fill="none" stroke="#fff" stroke-width="2"/>
 <path d="M66 57l7 5" stroke="#fff" stroke-width="2.5"/>
</svg>
<svg style="left:2045px;top:479px" width="34" height="34"><circle cx="17" cy="17" r="15" fill="none" stroke="#d6d6d6" stroke-width="2"/><rect x="9" y="16" width="16" height="10" fill="#d6d6d6"/><path d="M14 16v-4a5 5 0 0 1 10 0" fill="none" stroke="#d6d6d6" stroke-width="2.2"/></svg>
<div class="t" style="left:2088px;top:487px;font-size:23px">Layers</div>
<svg style="left:2470px;top:479px" width="90" height="34"><g fill="none" stroke="#d6d6d6" stroke-width="2.4"><rect x="7.2" y="14.2" width="16" height="15.5"/><path d="M18.2 14.2V3.2H33.8V19H23.2"/><path d="M57 8l19 19M76 8l-19 19" stroke-width="2.6"/></g></svg>
<div class="a" style="left:2039px;top:518px;width:451px;height:60px;background:linear-gradient(#4c4c4c,#414141);border:2px solid #363636;border-radius:6px"></div>
<div class="t" style="left:2048px;top:539px;font-size:23.5px">Normal</div>
<svg style="left:2450px;top:520px" width="110" height="130">
 <path d="M10 24l8 8 8-8z" fill="#9a9a9a"/>
 <path d="M62 12h28l-10 14v20l-8-4v-16z" fill="none" stroke="#d6d6d6" stroke-width="2.5"/>
 <path d="M90 47l6 6 6-6z" fill="#8a8a8a"/>
 <g fill="#d6d6d6"><rect x="64" y="84" width="24" height="3.5"/><rect x="64" y="93" width="24" height="3.5"/><rect x="64" y="102" width="24" height="3.5"/></g>
 <path d="M90 112l6 6 6-6z" fill="#8a8a8a"/>
</svg>
<div class="a" style="left:2039px;top:586px;width:452px;height:56px;background:#3e3e3e;border:2px solid #363636;border-radius:6px"></div>
<div class="a" style="left:2040px;top:587px;width:422px;height:54px;background:#52718f;border-radius:5px 0 0 5px"></div>
<div class="t" style="left:2166px;top:603px;font-size:25px;color:#e8e8e8">Opacity:  100%</div>
<svg style="left:2462px;top:588px" width="28" height="54"><path d="M7 17l7-7 7 7z M7 37l7 7 7-7z" fill="#666"/></svg>
<div class="a" style="left:2039px;top:648px;width:518px;height:181px;background:#3a3a3a;border:1px solid #333"></div>
<div class="a" style="left:2040px;top:650px;width:45px;height:54px;background:#363636"></div>
<div class="a" style="left:2085px;top:650px;width:471px;height:53px;background:#52718f;border-bottom:2px solid #44607a"></div>
<div class="a" style="left:2040px;top:704px;width:516px;height:50px;background:#383838"></div>
<svg style="left:2039px;top:648px" width="520" height="110">
 <g stroke="#3e5670" stroke-width="2"><path d="M98.5 2v52 M128.5 2v52 M401 2v52 M439 2v52 M477 2v52"/></g>
 <g stroke="#3e3e3e" stroke-width="2"><path d="M98.5 56v50 M128.5 56v50 M401 56v50 M439 56v50 M477 56v50"/></g>
 <g fill="none" stroke="#d6d6d6" stroke-width="2.2"><path d="M9 31c6-10 20-10 28 0 M9 35c6 10 20 10 28 0" /><path d="M9 85c6-10 20-10 28 0 M9 89c6 10 20 10 28 0"/></g>
 <circle cx="23" cy="27" r="6" fill="#d6d6d6"/><circle cx="23" cy="81" r="6" fill="#d6d6d6"/>
 <rect x="50" y="11" width="43" height="34" fill="#1e1e1e"/><rect x="52" y="13" width="39" height="30" fill="#e8ecf0"/>
 <path d="M52 43v-24l6-6 6 4 2 10-4 16z" fill="#8a6a30"/><path d="M91 43v-26l-8-4-4 8 2 8 4 14z" fill="#7a5a28"/>
 <path d="M56 30l4-8 3 6zM84 26l4-6 2 8z" fill="#d8a030"/>
 <path d="M54 43l16-14h4l16 14z" fill="#3e4c6a"/>
 <rect x="53" y="68" width="39" height="29" fill="#7a7a7a"/>
 <g fill="none" stroke="#d6d6d6" stroke-width="2"><path d="M114 6h16v14l-4 4h-10v-6 M105 8l11 11"/><path d="M114 60h16v14l-4 4h-10v-6 M105 62l11 11"/></g>
 <path d="M404 32h22v18h-22z" fill="#7a96b2"/><path d="M409 32v-5a7 7 0 0 1 13-2" fill="none" stroke="#7a96b2" stroke-width="5"/>
 <text x="442" y="40" font-family="Liberation Sans" font-style="italic" font-size="34" fill="#7a96b2">α</text>
 <g fill="#7a96b2"><rect x="481" y="13" width="10" height="10"/><rect x="501" y="13" width="10" height="10"/><rect x="491" y="23" width="10" height="10"/><rect x="481" y="33" width="10" height="10"/><rect x="501" y="33" width="10" height="10"/></g>
 <g fill="#6a88a6"><rect x="491" y="13" width="10" height="10"/><rect x="481" y="23" width="10" height="10"/><rect x="501" y="23" width="10" height="10"/><rect x="491" y="33" width="10" height="10"/></g>
 <path d="M404 86h22v20h-22z" fill="#d6d6d6"/><path d="M408 86v-5a7 7 0 0 1 14 0v5" fill="none" stroke="#d6d6d6" stroke-width="4"/>
 <text x="442" y="94" font-family="Liberation Sans" font-style="italic" font-size="34" fill="#777">α</text>
 <g fill="#6a6a6a"><rect x="481" y="66" width="10" height="10"/><rect x="501" y="66" width="10" height="10"/><rect x="491" y="76" width="10" height="10"/><rect x="481" y="86" width="10" height="10"/><rect x="501" y="86" width="10" height="10"/></g>
 <g fill="#555"><rect x="491" y="66" width="10" height="10"/><rect x="481" y="76" width="10" height="10"/><rect x="501" y="76" width="10" height="10"/><rect x="491" y="86" width="10" height="10"/></g>
</svg>
<div class="t" style="left:2171px;top:664px;font-size:25px;font-weight:bold">base</div>
<div class="t" style="left:2172px;top:720px;font-size:23.6px">Background</div>
<svg style="left:2040px;top:830px" width="520" height="70">
 <g fill="#d6d6d6"><rect x="27" y="12" width="3.5" height="36"/><rect x="10" y="28.5" width="36" height="3.5"/></g>
 <path d="M62 26l8 8 8-8z" fill="#9a9a9a"/>
 <g fill="none" stroke="#d6d6d6" stroke-width="3"><path d="M104 12h32v32h-32z"/><path d="M98 18v32h32" /></g>
 <g fill="none" stroke="#d6d6d6" stroke-width="3.5"><path d="M162 20l18 18 18-18"/><path d="M226 38l18-18 18 18"/></g>
 <g fill="#d6d6d6"><rect x="288" y="14" width="40" height="3.5"/><rect x="288" y="24" width="40" height="3.5"/><rect x="288" y="34" width="40" height="3.5"/><circle cx="316" cy="15.5" r="4"/><circle cx="298" cy="25.5" r="4"/><circle cx="308" cy="35.5" r="4"/></g>
 <path d="M472 16h34v4h-34z M482 16v-4a4 4 0 0 1 4-3h6a4 4 0 0 1 4 3v4 M474 22h30l-2 22a5 5 0 0 1-5 4h-16a5 5 0 0 1-5-4z" fill="#d6d6d6"/>
 <g fill="#8a8a8a"><rect x="244" y="64" width="4" height="3"/><rect x="250" y="64" width="4" height="3"/><rect x="256" y="64" width="4" height="3"/><rect x="262" y="64" width="4" height="3"/><rect x="268" y="64" width="4" height="3"/><rect x="274" y="64" width="4" height="3"/></g>
</svg>
<svg style="left:2045px;top:903px" width="34" height="34"><circle cx="17" cy="17" r="15" fill="none" stroke="#d6d6d6" stroke-width="2"/><rect x="9" y="16" width="16" height="10" fill="#d6d6d6"/><path d="M14 16v-4a5 5 0 0 1 10 0" fill="none" stroke="#d6d6d6" stroke-width="2.2"/></svg>
<div class="t" style="left:2088px;top:911px;font-size:23.7px">Brush Presets</div>
<svg style="left:2470px;top:903px" width="90" height="34"><g fill="none" stroke="#d6d6d6" stroke-width="2.4"><rect x="7.2" y="14.2" width="16" height="15.5"/><path d="M18.2 14.2V3.2H33.8V19H23.2"/><path d="M57 8l19 19M76 8l-19 19" stroke-width="2.6"/></g></svg>
<div class="a" style="left:2039px;top:942px;width:307px;height:44px;background:linear-gradient(#4c4c4c,#414141);border:2px solid #363636;border-radius:6px"></div>
<div class="a" style="left:2350px;top:942px;width:110px;height:44px;background:linear-gradient(#4c4c4c,#414141);border:2px solid #363636;border-radius:6px"></div>
<div class="a" style="left:2464px;top:942px;width:44px;height:44px;background:linear-gradient(#4c4c4c,#414141);border:2px solid #363636;border-radius:6px"></div>
<div class="t" style="left:2048px;top:953px;font-size:25px">All</div>
<div class="t" style="left:2390px;top:953px;font-size:25px">Tag</div>
<svg style="left:2300px;top:940px" width="260" height="50">
 <path d="M17 21l8 8 8-8z" fill="#9a9a9a"/>
 <path d="M62 6h18v32l-9-7-9 7z" fill="none" stroke="#d6d6d6" stroke-width="3"/>
 <path d="M146 34l6 6 6-6z" fill="#9a9a9a"/>
 <g fill="#d6d6d6"><rect x="174" y="15" width="24" height="3.5"/><rect x="174" y="23" width="24" height="3.5"/><rect x="174" y="31" width="24" height="3.5"/></g>
 <rect x="219.5" y="6.5" width="30" height="31" fill="none" stroke="#d6d6d6" stroke-width="2.5"/>
 <path d="M236 8v12" stroke="#d6d6d6" stroke-width="2" stroke-dasharray="2 2"/>
</svg>
<div class="a" style="left:2039px;top:988px;width:518px;height:315px;background:#383838;border:1px solid #333"></div>
<div class="a" style="left:2529px;top:989px;width:27px;height:313px;background:#3a3a3a"></div>
<div class="a" style="left:2530px;top:991px;width:26px;height:25px;background:#444;border:1px solid #555"></div>
<div class="a" style="left:2530px;top:1023px;width:26px;height:52px;background:#444;border:1px solid #555"></div>
<div class="a" style="left:2530px;top:1275px;width:26px;height:25px;background:#444;border:1px solid #555"></div>
<svg style="left:2530px;top:991px" width="26" height="310"><path d="M5 16l8-8 8 8z M5 293l8 8 8-8z" fill="#999"/></svg>
<div class="a" style="left:2040px;top:1236px;width:488px;height:65px;background:#52718f"></div>
<div class="a" style="left:2048px;top:1244px;width:480px;height:49px;background:#233455"></div>
<div class="a" style="left:2042px;top:990px;width:62px;height:46px;background:#d2d2d2"></div>
<div class="a" style="left:2042px;top:1040px;width:62px;height:61px;background:#d2d2d2"></div>
<div class="a" style="left:2042px;top:1106px;width:62px;height:61px;background:#d2d2d2"></div>
<div class="a" style="left:2042px;top:1172px;width:62px;height:62px;background:#d2d2d2"></div>
<svg style="left:2042px;top:990px" width="62" height="310">
 <defs><linearGradient id="bs3" x1="0" x2="1"><stop offset="0" stop-color="#bbb"/><stop offset="1" stop-color="#222"/></linearGradient>
 <linearGradient id="bs4" x1="0" x2="1"><stop offset="0" stop-color="#c4c4c4"/><stop offset="1" stop-color="#888"/></linearGradient></defs>
 <path d="M62 -4l-28 20 5 5 23-14z" fill="#2a2a2a"/><path d="M34 16l-8 10 12-5z" fill="#aab"/><path d="M26 26l2-2 1 1z" fill="#333"/>
 <path d="M22 42c10-6 26-10 40-12v8c-14 2-28 6-38 10a4 4 0 0 1-2-6z" fill="#1e1e1e"/>
 <path d="M62 54l-30 24 6 6 24-18z" fill="#1e1e1e"/><path d="M32 78l-10 14 16-8z" fill="#333"/>
 <path d="M26 108c14-6 26-8 36-8v6c-12 0-24 2-36 6z" fill="#aaa" opacity=".7"/>
 <path d="M62 120l-28 22 6 6 22-16z" fill="#e8e8e8" stroke="#aaa" stroke-width="1"/><path d="M34 142l-10 14 16-8z" fill="#ccc" stroke="#999" stroke-width="1"/>
 <path d="M8 164c10-8 16 2 26-2 10-4 18-4 28-4v10c-10 0-18 2-28 6-10 2-16-4-26 2z" fill="url(#bs3)"/>
 <path d="M62 186l-28 22 6 6 22-16z" fill="#8a8a8a" stroke="#666" stroke-width="1"/><path d="M34 208l-10 14 16-8z" fill="#ddd" stroke="#888" stroke-width="1"/>
 <path d="M8 234c10-8 16 2 26-2 10-4 18-4 28-4v10c-10 0-18 2-28 6-10 2-16-4-26 2z" fill="url(#bs4)" opacity=".8"/>
</svg>
<div class="a" style="left:2048px;top:1244px;width:56px;height:50px;background:#8abcdc"></div>
<svg style="left:2048px;top:1244px" width="56" height="50"><path d="M56 2l-28 22 5 5 23-18z" fill="#b8d4e8" stroke="#3a4a6a" stroke-width="1.5"/><path d="M28 24c-6 2-10 6-12 10l6 2c4-2 8-6 11-8z" fill="#2a1a40"/><path d="M4 50c2-8 10-10 16-8 8 2 14-4 24-8 4-2 8-2 12-2v18z" fill="#233455"/><path d="M8 44c6-4 10 0 14-2" stroke="#233455" stroke-width="3" fill="none"/></svg>
<div class="t" style="left:2182px;top:998px;font-size:24px;color:#d8d4cc">b) Basic-1</div>
<div class="t" style="left:2182px;top:1064px;font-size:24px;color:#d8d4cc">b) Basic-2 Opacity</div>
<div class="t" style="left:2182px;top:1130px;font-size:24px;color:#d8d4cc">b) Basic-3 Flow</div>
<div class="t" style="left:2182px;top:1196px;font-size:24px;color:#d8d4cc">b) Basic-4 Flow Opacity</div>
<div class="t" style="left:2182px;top:1262px;font-size:24px;color:#8ec4e8">b) Basic-5 Size</div>
<div class="a" style="left:2039px;top:1303px;width:518px;height:27px;background:#3a3a3a"></div>
<div class="a" style="left:2040px;top:1304px;width:25px;height:25px;background:#444;border:1px solid #555"></div>
<div class="a" style="left:2068px;top:1304px;width:404px;height:25px;background:#444;border:1px solid #555"></div>
<div class="a" style="left:2502px;top:1304px;width:25px;height:25px;background:#444;border:1px solid #555"></div>
<svg style="left:2040px;top:1304px" width="500" height="26"><path d="M16 5l-8 8 8 8z M470 5l8 8-8 8z" fill="#999"/></svg>
<div class="a" style="left:2038px;top:1332px;width:329px;height:43px;background:#3a3a3a;border-radius:6px"></div>
<div class="t" style="left:2044px;top:1343px;font-size:25px;color:#8a8a8a">Search</div>
<div class="a" style="left:2380px;top:1341px;width:28px;height:28px;background:#3a3a3a"></div>
<svg style="left:2380px;top:1341px" width="28" height="28"><path d="M6 14l6 8 10-17" fill="none" stroke="#bbb" stroke-width="3.5"/></svg>
<div class="t" style="left:2419px;top:1344px;font-size:24.3px">Filter in Tag</div>
</body></html>
